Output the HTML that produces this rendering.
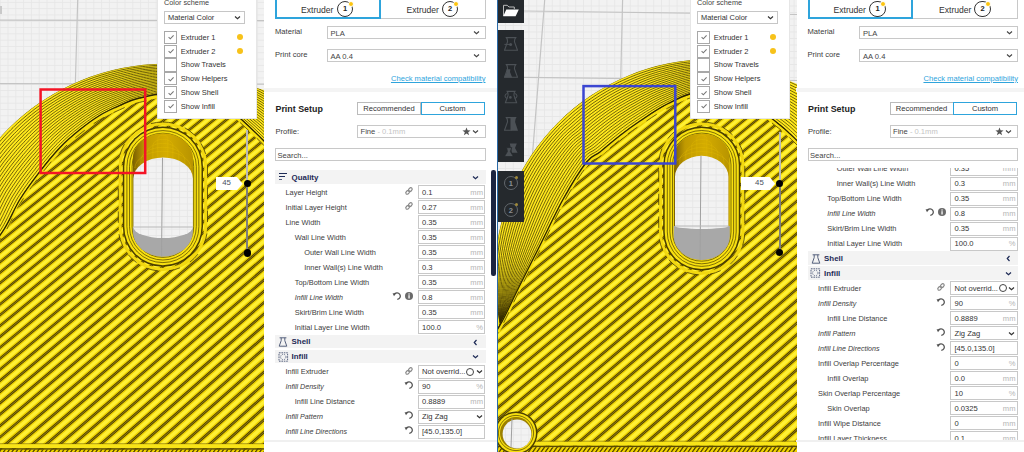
<!DOCTYPE html>
<html><head><meta charset="utf-8"><style>
html,body{margin:0;padding:0;width:1024px;height:452px;overflow:hidden;background:#f3f3f3;}
body{position:relative;font-family:"Liberation Sans",sans-serif;}
.r{position:absolute;}
.t{position:absolute;white-space:nowrap;}
</style></head><body>
<svg class="r" style="left:0px;top:0" width="264" height="452" viewBox="0 0 264 452"><defs><pattern id="gL" patternUnits="userSpaceOnUse" x="77.7" y="20.8" width="7.8" height="6.3"><rect width="7.8" height="6.3" fill="#f2f2f2"/><rect width="0.8" height="6.3" fill="#e6e6e6"/><rect width="7.8" height="0.8" fill="#e6e6e6"/></pattern><linearGradient id="ygL" x1="0" y1="0" x2="0" y2="1"><stop offset="0" stop-color="#8c7400"/><stop offset="0.05" stop-color="#3e3300"/><stop offset="0.11" stop-color="#807010"/><stop offset="0.17" stop-color="#3e3300"/><stop offset="0.24" stop-color="#8c7400"/><stop offset="0.32" stop-color="#ecd000"/><stop offset="0.52" stop-color="#fff230"/><stop offset="0.75" stop-color="#ffec18"/><stop offset="0.92" stop-color="#e4c800"/><stop offset="1" stop-color="#8c7400"/></linearGradient><pattern id="stL" patternUnits="userSpaceOnUse" width="20" height="8.4" patternTransform="translate(0 0) rotate(-43)"><rect width="20" height="8.4" fill="url(#ygL)"/></pattern><linearGradient id="wallL" x1="0" y1="0" x2="1" y2="0"><stop offset="0" stop-color="#7a6000"/><stop offset="0.2" stop-color="#c09a00"/><stop offset="0.55" stop-color="#d4ac00"/><stop offset="1" stop-color="#b89400"/></linearGradient><clipPath id="obj0L"><circle cx="165.3" cy="286.2" r="222.4"/><rect x="-50" y="286.2" width="364" height="175.8"/></clipPath><clipPath id="objL" clip-path="url(#obj0L)"><polygon points="-100,-12.1 364,118.0 364,500 -100,500"/></clipPath><clipPath id="infL"><path d="M-20.00,262.00 C-16.00,256.57 -2.65,239.82 4.00,229.40 C10.65,218.98 13.93,209.13 19.90,199.50 C25.87,189.87 33.15,180.23 39.80,171.60 C46.45,162.97 53.15,154.67 59.80,147.70 C66.45,140.73 73.07,135.17 79.70,129.80 C86.33,124.43 92.97,119.55 99.60,115.50 C106.23,111.45 112.87,108.42 119.50,105.50 C126.13,102.58 130.15,100.25 139.40,98.00 C148.65,95.75 162.40,92.33 175.00,92.00 C187.60,91.67 204.00,91.50 215.00,96.00 C226.00,100.50 233.00,111.67 241.00,119.00 C249.00,126.33 253.17,130.17 263.00,140.00 C272.83,149.83 293.83,171.67 300.00,178.00 L364,178 L364,500 L-100,500 L-100,262 Z"/></clipPath><filter id="blL" x="-5%" y="-5%" width="110%" height="110%"><feGaussianBlur stdDeviation="0.75"/></filter></defs><rect x="0" y="0" width="264" height="452" fill="url(#gL)"/><line x1="77.7" y1="0" x2="65" y2="452" stroke="#c4c4c4" stroke-width="1.2"/><line x1="0" y1="20.2" x2="264" y2="20.6" stroke="#c4c4c4" stroke-width="1.2"/><line x1="0" y1="83.6" x2="264" y2="84.2" stroke="#c4c4c4" stroke-width="1.2"/><g clip-path="url(#objL)"><rect x="-5" y="0" width="274" height="452" fill="#ffe81c"/><path d="M-55.2,257.4 L-54.8,254.2 L-54.3,250.9 L-53.7,247.7 L-53.2,244.5 L-52.5,241.3 L-51.8,238.1 L-51.1,234.9 L-50.3,231.7 L-49.5,228.6 L-48.6,225.4 L-47.7,222.3 L-46.8,219.2 L-45.8,216.1 L-44.7,213.0 L-43.6,209.9 L-42.5,206.8 L-41.3,203.8 L-40.0,200.8 L-38.8,197.8 L-37.4,194.8 L-36.1,191.8 L-34.7,188.9 L-33.2,185.9 L-31.7,183.0 L-30.2,180.2 L-28.6,177.3 L-27.0,174.5 L-25.3,171.7 L-23.6,168.9 L-21.9,166.1 L-20.1,163.4 L-18.3,160.7 L-16.4,158.0 L-14.5,155.3 L-12.6,152.7 L-10.6,150.1 L-8.6,147.5 L-6.5,145.0 L-4.4,142.5 L-2.3,140.0 L-0.1,137.6 L2.1,135.1 L4.3,132.8 L6.6,130.4 L8.9,128.1 L11.2,125.8 L13.6,123.6 L16.0,121.4 L18.4,119.2 L20.9,117.1 L23.4,115.0 L25.9,112.9 L28.5,110.9 L31.1,108.9 L33.7,106.9 L36.3,105.0 L39.0,103.1 L41.7,101.3 L44.4,99.5 L47.2,97.7 L50.0,96.0 L52.8,94.4 L55.6,92.7 L58.5,91.1 L61.3,89.6 L64.2,88.1 L67.2,86.6 L70.1,85.2 L73.1,83.8 L76.0,82.5 L79.0,81.2 L82.1,80.0 L85.1,78.8 L88.2,77.6 L91.2,76.5 L94.3,75.4 L97.4,74.4 L100.5,73.4 L103.7,72.5 L106.8,71.6 L110.0,70.8 L113.1,70.0 L116.3,69.3 L119.5,68.6 L122.7,67.9 L125.9,67.3 L129.1,66.8 L132.4,66.3 L135.6,65.8 L138.8,65.4 L142.1,65.0 L145.3,64.7 L148.6,64.4 L151.9,64.2 L155.1,64.0 L158.4,63.9 L161.6,63.8 L164.9,63.8 L168.2,63.8 L171.4,63.9 L174.7,64.0 L178.0,64.2 L181.2,64.4 L184.5,64.6 L187.7,64.9 L191.0,65.3 L194.2,65.7 L197.5,66.1 L200.7,66.6 L203.9,67.2 L207.1,67.8 L210.3,68.4 L213.5,69.1 L216.7,69.8 L219.9,70.6 L223.0,71.4 L226.2,72.3 L229.3,73.2 L232.4,74.2 L235.5,75.2 L238.6,76.2 L241.7,77.3 L244.8,78.5 L247.8,79.7 L250.8,80.9 L253.8,82.2 L256.8,83.5 L259.8,84.9 L262.7,86.3 L265.7,87.7 L268.6,89.2 L271.4,90.8 L274.3,92.3 L277.1,94.0 L280.0,95.6 L282.7,97.3 L285.5,99.1 L288.2,100.9 L290.9,102.7 L293.6,104.6 L296.3,106.5 L298.9,108.4 L301.5,110.4 L304.1,112.4 L306.6,114.5 L309.1,116.6 L311.6,118.7 L314.0,120.8 L316.4,123.1 L318.8,125.3 L321.2,127.6 L323.5,129.9 L325.8,132.2 L328.0,134.6 L330.2,137.0 L332.4,139.4 L334.5,141.9 L336.6,144.4 L338.7,146.9" fill="none" stroke="#332a00" stroke-width="0.7"/><path d="M-53.5,257.6 L-52.9,254.4 L-52.4,251.2 L-51.8,248.1 L-51.1,244.9 L-50.4,241.7 L-49.7,238.6 L-48.9,235.4 L-48.1,232.3 L-47.2,229.2 L-46.3,226.1 L-45.4,223.0 L-44.4,219.9 L-43.4,216.9 L-42.3,213.8 L-41.2,210.8 L-40.0,207.8 L-38.8,204.8 L-37.6,201.8 L-36.3,198.8 L-35.0,195.9 L-33.7,193.0 L-32.3,190.0 L-30.8,187.1 L-29.4,184.3 L-27.9,181.4 L-26.3,178.6 L-24.7,175.8 L-23.1,173.0 L-21.4,170.3 L-19.6,167.5 L-17.9,164.8 L-16.1,162.2 L-14.2,159.5 L-12.4,156.9 L-10.4,154.3 L-8.5,151.7 L-6.5,149.2 L-4.5,146.7 L-2.4,144.2 L-0.3,141.7 L1.8,139.3 L4.0,136.9 L6.2,134.6 L8.4,132.2 L10.7,129.9 L13.0,127.7 L15.3,125.4 L17.7,123.2 L20.1,121.1 L22.5,119.0 L25.0,116.9 L27.5,114.8 L30.0,112.8 L32.5,110.8 L35.1,108.8 L37.7,106.9 L40.4,105.1 L43.0,103.2 L45.7,101.4 L48.4,99.7 L51.2,98.0 L53.9,96.3 L56.7,94.7 L59.5,93.1 L62.4,91.5 L65.2,90.0 L68.1,88.5 L71.0,87.1 L73.9,85.7 L76.9,84.4 L79.8,83.1 L82.8,81.8 L85.8,80.6 L88.8,79.4 L91.9,78.3 L94.9,77.2 L98.0,76.2 L101.1,75.2 L104.2,74.3 L107.3,73.4 L110.4,72.5 L113.6,71.7 L116.7,71.0 L119.9,70.3 L123.0,69.6 L126.2,69.0 L129.4,68.4 L132.6,67.9 L135.8,67.4 L139.0,67.0 L142.3,66.6 L145.5,66.3 L148.7,66.0 L151.9,65.7 L155.2,65.5 L158.4,65.4 L161.7,65.3 L164.9,65.3 L168.2,65.3 L171.4,65.3 L174.6,65.4 L177.9,65.6 L181.1,65.7 L184.4,66.0 L187.6,66.3 L190.8,66.6 L194.1,67.0 L197.3,67.4 L200.5,67.9 L203.7,68.4 L206.9,69.0 L210.1,69.6 L213.2,70.3 L216.4,71.1 L219.6,71.8 L222.7,72.7 L225.8,73.6 L228.9,74.5 L232.0,75.5 L235.1,76.6 L238.1,77.7 L241.1,78.9 L244.2,80.1 L247.2,81.3 L250.1,82.6 L253.1,83.9 L256.0,85.3 L258.9,86.7 L261.9,88.1 L264.7,89.6 L267.6,91.1 L270.4,92.6 L273.2,94.2 L276.0,95.9 L278.8,97.5 L281.5,99.3 L284.3,101.0 L287.0,102.8 L289.6,104.6 L292.3,106.5 L294.9,108.4 L297.5,110.3 L300.0,112.3 L302.5,114.3 L305.0,116.4 L307.5,118.4 L309.9,120.6 L312.4,122.7 L314.7,124.9 L317.1,127.1 L319.4,129.4 L321.7,131.6 L323.9,133.9 L326.2,136.3 L328.3,138.7 L330.5,141.1 L332.6,143.5 L334.7,146.0 L336.8,148.5" fill="none" stroke="#332a00" stroke-width="0.7"/><path d="M-51.7,257.9 L-51.1,254.7 L-50.5,251.5 L-49.8,248.4 L-49.1,245.3 L-48.3,242.2 L-47.6,239.1 L-46.7,236.0 L-45.9,232.9 L-45.0,229.8 L-44.0,226.8 L-43.0,223.7 L-42.0,220.7 L-41.0,217.7 L-39.9,214.7 L-38.7,211.7 L-37.6,208.7 L-36.4,205.8 L-35.2,202.8 L-33.9,199.9 L-32.6,197.0 L-31.3,194.1 L-29.9,191.2 L-28.5,188.3 L-27.0,185.5 L-25.5,182.7 L-24.0,179.9 L-22.4,177.1 L-20.8,174.4 L-19.1,171.7 L-17.4,169.0 L-15.7,166.3 L-13.9,163.7 L-12.1,161.0 L-10.2,158.5 L-8.3,155.9 L-6.4,153.4 L-4.4,150.8 L-2.4,148.4 L-0.4,145.9 L1.7,143.5 L3.8,141.1 L5.9,138.7 L8.1,136.4 L10.3,134.1 L12.5,131.8 L14.8,129.5 L17.1,127.3 L19.4,125.1 L21.7,123.0 L24.1,120.8 L26.6,118.8 L29.0,116.7 L31.5,114.7 L34.0,112.7 L36.5,110.8 L39.1,108.9 L41.7,107.0 L44.3,105.2 L47.0,103.4 L49.6,101.6 L52.3,99.9 L55.1,98.2 L57.8,96.6 L60.6,95.0 L63.4,93.4 L66.2,91.9 L69.0,90.4 L71.9,89.0 L74.8,87.6 L77.7,86.3 L80.6,84.9 L83.6,83.7 L86.5,82.4 L89.5,81.3 L92.5,80.1 L95.5,79.0 L98.6,78.0 L101.6,77.0 L104.7,76.1 L107.8,75.2 L110.9,74.3 L114.0,73.5 L117.1,72.7 L120.2,71.9 L123.4,71.2 L126.5,70.6 L129.7,70.0 L132.9,69.5 L136.0,69.0 L139.2,68.6 L142.4,68.2 L145.6,67.8 L148.8,67.5 L152.0,67.3 L155.3,67.0 L158.5,66.9 L161.7,66.8 L164.9,66.7 L168.1,66.7 L171.4,66.7 L174.6,66.8 L177.8,66.9 L181.0,67.1 L184.2,67.4 L187.5,67.6 L190.7,67.9 L193.9,68.3 L197.1,68.7 L200.3,69.2 L203.5,69.7 L206.6,70.3 L209.8,70.9 L213.0,71.6 L216.1,72.3 L219.2,73.1 L222.4,73.9 L225.4,74.9 L228.5,75.8 L231.6,76.9 L234.6,78.0 L237.6,79.2 L240.6,80.4 L243.6,81.7 L246.5,83.0 L249.4,84.3 L252.3,85.7 L255.2,87.0 L258.1,88.5 L261.0,89.9 L263.8,91.4 L266.6,92.9 L269.4,94.5 L272.2,96.1 L274.9,97.8 L277.6,99.5 L280.3,101.2 L283.0,102.9 L285.7,104.7 L288.3,106.6 L290.9,108.4 L293.5,110.3 L296.0,112.3 L298.5,114.2 L301.0,116.2 L303.5,118.3 L305.9,120.3 L308.3,122.4 L310.7,124.6 L313.0,126.7 L315.4,128.9 L317.6,131.1 L319.9,133.4 L322.1,135.7 L324.3,138.0 L326.5,140.4 L328.6,142.7 L330.7,145.1 L332.8,147.6 L334.8,150.0" fill="none" stroke="#332a00" stroke-width="0.7"/><path d="M-49.9,258.1 L-49.3,255.0 L-48.6,251.9 L-47.8,248.8 L-47.1,245.7 L-46.3,242.6 L-45.4,239.5 L-44.5,236.5 L-43.6,233.4 L-42.7,230.4 L-41.7,227.4 L-40.7,224.4 L-39.6,221.4 L-38.6,218.5 L-37.4,215.5 L-36.3,212.6 L-35.1,209.6 L-33.9,206.7 L-32.7,203.8 L-31.5,200.9 L-30.2,198.1 L-28.9,195.2 L-27.5,192.4 L-26.1,189.5 L-24.7,186.7 L-23.2,184.0 L-21.7,181.2 L-20.1,178.5 L-18.5,175.8 L-16.9,173.1 L-15.2,170.4 L-13.4,167.8 L-11.7,165.2 L-9.9,162.6 L-8.1,160.0 L-6.2,157.5 L-4.3,155.0 L-2.3,152.5 L-0.4,150.0 L1.6,147.6 L3.7,145.2 L5.7,142.8 L7.8,140.5 L10.0,138.2 L12.1,135.9 L14.3,133.6 L16.5,131.4 L18.8,129.2 L21.1,127.0 L23.4,124.9 L25.7,122.7 L28.1,120.7 L30.5,118.6 L33.0,116.6 L35.4,114.6 L37.9,112.7 L40.5,110.8 L43.0,108.9 L45.6,107.1 L48.2,105.3 L50.9,103.6 L53.5,101.9 L56.2,100.2 L58.9,98.5 L61.6,96.9 L64.4,95.4 L67.2,93.8 L70.0,92.4 L72.8,90.9 L75.7,89.5 L78.5,88.1 L81.4,86.8 L84.3,85.5 L87.2,84.3 L90.2,83.1 L93.2,82.0 L96.1,80.9 L99.2,79.8 L102.2,78.8 L105.2,77.8 L108.3,76.9 L111.3,76.0 L114.4,75.2 L117.5,74.4 L120.6,73.6 L123.7,72.9 L126.8,72.2 L130.0,71.6 L133.1,71.1 L136.3,70.6 L139.4,70.2 L142.6,69.7 L145.8,69.4 L148.9,69.1 L152.1,68.8 L155.3,68.6 L158.5,68.4 L161.7,68.2 L164.9,68.2 L168.1,68.1 L171.3,68.1 L174.5,68.2 L177.7,68.3 L180.9,68.5 L184.1,68.7 L187.3,69.0 L190.5,69.3 L193.7,69.6 L196.9,70.0 L200.1,70.5 L203.2,71.0 L206.4,71.5 L209.6,72.1 L212.7,72.8 L215.8,73.5 L218.9,74.3 L222.0,75.2 L225.1,76.1 L228.1,77.2 L231.1,78.3 L234.1,79.4 L237.1,80.6 L240.0,81.9 L242.9,83.2 L245.8,84.6 L248.7,86.0 L251.6,87.4 L254.4,88.8 L257.3,90.3 L260.1,91.7 L262.9,93.3 L265.6,94.8 L268.4,96.4 L271.1,98.0 L273.8,99.7 L276.5,101.4 L279.1,103.1 L281.8,104.9 L284.4,106.7 L287.0,108.5 L289.5,110.4 L292.0,112.3 L294.6,114.2 L297.0,116.2 L299.5,118.1 L301.9,120.2 L304.3,122.2 L306.7,124.3 L309.0,126.4 L311.3,128.6 L313.6,130.7 L315.9,132.9 L318.1,135.2 L320.3,137.4 L322.5,139.7 L324.6,142.0 L326.7,144.4 L328.8,146.8 L330.9,149.2 L332.9,151.6" fill="none" stroke="#332a00" stroke-width="0.7"/><path d="M-48.2,258.3 L-47.4,255.2 L-46.7,252.2 L-45.9,249.1 L-45.0,246.1 L-44.2,243.0 L-43.3,240.0 L-42.3,237.0 L-41.4,234.0 L-40.4,231.0 L-39.4,228.1 L-38.3,225.1 L-37.3,222.2 L-36.2,219.3 L-35.0,216.4 L-33.9,213.5 L-32.7,210.6 L-31.5,207.7 L-30.3,204.8 L-29.0,202.0 L-27.8,199.2 L-26.4,196.3 L-25.1,193.5 L-23.7,190.7 L-22.3,188.0 L-20.9,185.2 L-19.4,182.5 L-17.8,179.8 L-16.2,177.1 L-14.6,174.5 L-12.9,171.9 L-11.2,169.2 L-9.5,166.7 L-7.7,164.1 L-5.9,161.6 L-4.1,159.1 L-2.2,156.6 L-0.3,154.2 L1.7,151.7 L3.6,149.3 L5.6,146.9 L7.7,144.6 L9.8,142.3 L11.8,140.0 L14.0,137.7 L16.1,135.4 L18.3,133.2 L20.5,131.0 L22.8,128.9 L25.1,126.7 L27.4,124.6 L29.7,122.6 L32.1,120.5 L34.5,118.5 L36.9,116.6 L39.4,114.6 L41.8,112.7 L44.4,110.9 L46.9,109.0 L49.5,107.3 L52.1,105.5 L54.7,103.8 L57.3,102.1 L60.0,100.5 L62.7,98.9 L65.4,97.3 L68.2,95.8 L70.9,94.3 L73.7,92.8 L76.5,91.4 L79.3,90.0 L82.2,88.7 L85.1,87.4 L88.0,86.1 L90.9,84.9 L93.8,83.8 L96.8,82.7 L99.7,81.6 L102.7,80.6 L105.7,79.6 L108.7,78.7 L111.8,77.8 L114.8,76.9 L117.9,76.1 L120.9,75.3 L124.0,74.6 L127.1,73.9 L130.2,73.3 L133.3,72.7 L136.5,72.2 L139.6,71.7 L142.8,71.3 L145.9,70.9 L149.1,70.6 L152.2,70.3 L155.4,70.1 L158.6,69.9 L161.7,69.7 L164.9,69.6 L168.1,69.6 L171.3,69.6 L174.5,69.6 L177.7,69.7 L180.8,69.9 L184.0,70.1 L187.2,70.3 L190.4,70.6 L193.5,70.9 L196.7,71.3 L199.9,71.8 L203.0,72.2 L206.2,72.8 L209.3,73.4 L212.4,74.0 L215.5,74.8 L218.6,75.6 L221.7,76.5 L224.7,77.4 L227.7,78.5 L230.7,79.6 L233.7,80.8 L236.6,82.1 L239.5,83.5 L242.3,84.8 L245.2,86.2 L248.0,87.7 L250.8,89.1 L253.6,90.6 L256.4,92.1 L259.2,93.6 L261.9,95.1 L264.7,96.7 L267.4,98.3 L270.0,99.9 L272.7,101.6 L275.3,103.3 L278.0,105.0 L280.5,106.8 L283.1,108.6 L285.6,110.4 L288.2,112.3 L290.6,114.2 L293.1,116.1 L295.5,118.1 L298.0,120.1 L300.3,122.1 L302.7,124.1 L305.0,126.2 L307.3,128.3 L309.6,130.4 L311.9,132.6 L314.1,134.7 L316.3,136.9 L318.5,139.2 L320.6,141.4 L322.8,143.7 L324.8,146.0 L326.9,148.4 L328.9,150.7 L331.0,153.1" fill="none" stroke="#332a00" stroke-width="0.7"/><path d="M-46.4,258.5 L-45.6,255.5 L-44.8,252.5 L-43.9,249.4 L-43.0,246.4 L-42.1,243.5 L-41.1,240.5 L-40.2,237.5 L-39.1,234.6 L-38.1,231.6 L-37.1,228.7 L-36.0,225.8 L-34.9,222.9 L-33.7,220.1 L-32.6,217.2 L-31.4,214.4 L-30.3,211.5 L-29.1,208.7 L-27.8,205.9 L-26.6,203.0 L-25.3,200.2 L-24.0,197.5 L-22.7,194.7 L-21.4,191.9 L-20.0,189.2 L-18.5,186.5 L-17.0,183.8 L-15.5,181.1 L-13.9,178.5 L-12.3,175.9 L-10.7,173.3 L-9.0,170.7 L-7.3,168.2 L-5.5,165.7 L-3.8,163.2 L-1.9,160.7 L-0.1,158.2 L1.8,155.8 L3.7,153.4 L5.7,151.0 L7.6,148.7 L9.6,146.3 L11.7,144.0 L13.7,141.8 L15.8,139.5 L17.9,137.3 L20.1,135.1 L22.3,132.9 L24.5,130.7 L26.7,128.6 L29.0,126.5 L31.3,124.5 L33.6,122.4 L36.0,120.4 L38.4,118.5 L40.8,116.6 L43.2,114.7 L45.7,112.8 L48.2,111.0 L50.7,109.2 L53.3,107.5 L55.9,105.7 L58.5,104.1 L61.1,102.4 L63.8,100.8 L66.4,99.2 L69.1,97.7 L71.9,96.2 L74.6,94.7 L77.4,93.3 L80.2,91.9 L83.0,90.6 L85.8,89.2 L88.7,88.0 L91.5,86.8 L94.4,85.6 L97.4,84.5 L100.3,83.4 L103.3,82.4 L106.2,81.4 L109.2,80.4 L112.2,79.5 L115.2,78.7 L118.3,77.8 L121.3,77.0 L124.3,76.2 L127.4,75.5 L130.5,74.9 L133.6,74.3 L136.7,73.8 L139.8,73.3 L142.9,72.9 L146.0,72.5 L149.2,72.1 L152.3,71.8 L155.5,71.6 L158.6,71.3 L161.8,71.2 L164.9,71.1 L168.1,71.0 L171.2,71.0 L174.4,71.0 L177.6,71.1 L180.7,71.3 L183.9,71.4 L187.1,71.7 L190.2,71.9 L193.4,72.3 L196.5,72.6 L199.7,73.0 L202.8,73.5 L205.9,74.0 L209.0,74.6 L212.1,75.3 L215.2,76.0 L218.3,76.8 L221.3,77.7 L224.4,78.7 L227.3,79.8 L230.3,81.0 L233.2,82.3 L236.1,83.6 L238.9,85.0 L241.7,86.4 L244.5,87.9 L247.3,89.4 L250.1,90.9 L252.8,92.3 L255.6,93.8 L258.3,95.4 L261.0,96.9 L263.7,98.5 L266.3,100.2 L269.0,101.8 L271.6,103.5 L274.2,105.2 L276.8,107.0 L279.3,108.7 L281.8,110.5 L284.3,112.4 L286.8,114.2 L289.2,116.1 L291.7,118.0 L294.1,120.0 L296.4,122.0 L298.8,124.0 L301.1,126.0 L303.4,128.1 L305.7,130.1 L307.9,132.2 L310.2,134.4 L312.4,136.5 L314.5,138.7 L316.7,140.9 L318.8,143.2 L320.9,145.4 L323.0,147.7 L325.0,150.0 L327.0,152.3 L329.0,154.7" fill="none" stroke="#332a00" stroke-width="0.7"/><path d="M-44.7,258.8 L-43.8,255.8 L-42.9,252.8 L-41.9,249.8 L-41.0,246.8 L-40.0,243.9 L-39.0,241.0 L-38.0,238.0 L-36.9,235.1 L-35.8,232.3 L-34.7,229.4 L-33.6,226.5 L-32.5,223.7 L-31.3,220.9 L-30.2,218.0 L-29.0,215.2 L-27.8,212.4 L-26.6,209.7 L-25.4,206.9 L-24.2,204.1 L-22.9,201.3 L-21.6,198.6 L-20.3,195.9 L-19.0,193.1 L-17.6,190.4 L-16.2,187.8 L-14.7,185.1 L-13.2,182.5 L-11.7,179.9 L-10.1,177.3 L-8.5,174.7 L-6.8,172.2 L-5.1,169.7 L-3.4,167.2 L-1.6,164.7 L0.2,162.3 L2.0,159.9 L3.9,157.5 L5.8,155.1 L7.7,152.7 L9.6,150.4 L11.6,148.1 L13.6,145.8 L15.6,143.6 L17.7,141.3 L19.8,139.1 L21.9,136.9 L24.0,134.8 L26.2,132.6 L28.4,130.5 L30.6,128.4 L32.9,126.4 L35.1,124.3 L37.5,122.4 L39.8,120.4 L42.2,118.5 L44.6,116.6 L47.0,114.7 L49.5,112.9 L52.0,111.1 L54.5,109.4 L57.0,107.7 L59.6,106.0 L62.2,104.4 L64.8,102.7 L67.5,101.2 L70.1,99.6 L72.8,98.1 L75.5,96.6 L78.2,95.2 L81.0,93.8 L83.8,92.4 L86.6,91.1 L89.4,89.8 L92.2,88.6 L95.1,87.4 L98.0,86.3 L100.9,85.2 L103.8,84.2 L106.7,83.2 L109.7,82.2 L112.7,81.3 L115.6,80.4 L118.6,79.5 L121.6,78.7 L124.7,77.9 L127.7,77.2 L130.8,76.5 L133.8,75.9 L136.9,75.4 L140.0,74.9 L143.1,74.5 L146.2,74.1 L149.3,73.7 L152.4,73.4 L155.5,73.1 L158.7,72.8 L161.8,72.6 L164.9,72.5 L168.1,72.4 L171.2,72.4 L174.3,72.4 L177.5,72.5 L180.6,72.6 L183.8,72.8 L186.9,73.0 L190.1,73.3 L193.2,73.6 L196.3,73.9 L199.4,74.3 L202.6,74.8 L205.7,75.3 L208.8,75.9 L211.9,76.5 L214.9,77.2 L218.0,78.1 L221.0,79.0 L224.0,80.0 L226.9,81.1 L229.8,82.4 L232.7,83.7 L235.5,85.1 L238.4,86.5 L241.1,88.0 L243.9,89.5 L246.6,91.0 L249.3,92.6 L252.0,94.1 L254.7,95.6 L257.4,97.2 L260.1,98.8 L262.7,100.4 L265.3,102.0 L267.9,103.7 L270.5,105.4 L273.0,107.1 L275.6,108.9 L278.1,110.7 L280.5,112.5 L283.0,114.3 L285.4,116.2 L287.8,118.1 L290.2,120.0 L292.6,121.9 L294.9,123.9 L297.2,125.9 L299.5,127.9 L301.8,129.9 L304.0,132.0 L306.2,134.1 L308.4,136.2 L310.6,138.3 L312.7,140.5 L314.9,142.7 L317.0,144.9 L319.0,147.1 L321.1,149.4 L323.1,151.6 L325.1,153.9 L327.1,156.2" fill="none" stroke="#332a00" stroke-width="0.7"/><path d="M-42.9,259.0 L-41.9,256.0 L-41.0,253.1 L-40.0,250.1 L-38.9,247.2 L-37.9,244.3 L-36.8,241.4 L-35.8,238.6 L-34.7,235.7 L-33.6,232.9 L-32.4,230.0 L-31.3,227.2 L-30.1,224.4 L-28.9,221.7 L-27.8,218.9 L-26.6,216.1 L-25.4,213.4 L-24.2,210.6 L-23.0,207.9 L-21.7,205.2 L-20.5,202.4 L-19.2,199.7 L-17.9,197.0 L-16.6,194.3 L-15.2,191.7 L-13.9,189.0 L-12.4,186.4 L-10.9,183.8 L-9.4,181.2 L-7.8,178.7 L-6.2,176.2 L-4.6,173.7 L-2.9,171.2 L-1.2,168.7 L0.6,166.3 L2.3,163.9 L4.1,161.5 L6.0,159.1 L7.8,156.8 L9.7,154.4 L11.6,152.1 L13.5,149.9 L15.5,147.6 L17.5,145.4 L19.5,143.1 L21.6,140.9 L23.6,138.8 L25.7,136.6 L27.9,134.5 L30.0,132.4 L32.2,130.3 L34.4,128.3 L36.7,126.3 L39.0,124.3 L41.3,122.3 L43.6,120.4 L46.0,118.5 L48.4,116.7 L50.8,114.9 L53.2,113.1 L55.7,111.3 L58.2,109.6 L60.8,107.9 L63.3,106.3 L65.9,104.7 L68.5,103.1 L71.1,101.5 L73.7,100.0 L76.4,98.5 L79.1,97.1 L81.8,95.7 L84.6,94.3 L87.3,93.0 L90.1,91.7 L92.9,90.4 L95.7,89.2 L98.6,88.1 L101.5,87.0 L104.3,85.9 L107.3,84.9 L110.2,84.0 L113.1,83.0 L116.1,82.1 L119.0,81.2 L122.0,80.4 L125.0,79.6 L128.0,78.8 L131.0,78.2 L134.1,77.6 L137.1,77.0 L140.2,76.5 L143.2,76.1 L146.3,75.6 L149.4,75.2 L152.5,74.9 L155.6,74.6 L158.7,74.3 L161.8,74.1 L164.9,74.0 L168.0,73.9 L171.2,73.8 L174.3,73.8 L177.4,73.9 L180.5,74.0 L183.7,74.2 L186.8,74.4 L189.9,74.6 L193.0,74.9 L196.1,75.2 L199.2,75.6 L202.3,76.0 L205.4,76.5 L208.5,77.1 L211.6,77.8 L214.6,78.5 L217.7,79.3 L220.7,80.2 L223.6,81.3 L226.5,82.4 L229.4,83.7 L232.2,85.1 L235.0,86.5 L237.8,88.0 L240.5,89.6 L243.2,91.2 L245.9,92.7 L248.6,94.3 L251.2,95.9 L253.9,97.4 L256.5,99.0 L259.1,100.6 L261.7,102.3 L264.3,103.9 L266.9,105.6 L269.4,107.3 L271.9,109.0 L274.4,110.8 L276.8,112.6 L279.2,114.4 L281.7,116.2 L284.0,118.1 L286.4,120.0 L288.8,121.9 L291.1,123.8 L293.4,125.8 L295.6,127.8 L297.9,129.8 L300.1,131.8 L302.3,133.8 L304.5,135.9 L306.7,138.0 L308.8,140.1 L310.9,142.3 L313.0,144.4 L315.1,146.6 L317.2,148.8 L319.2,151.0 L321.2,153.3 L323.2,155.5 L325.1,157.8" fill="none" stroke="#332a00" stroke-width="0.7"/><path d="M-41.1,259.2 L-40.1,256.3 L-39.1,253.4 L-38.0,250.5 L-36.9,247.6 L-35.8,244.7 L-34.7,241.9 L-33.6,239.1 L-32.4,236.3 L-31.3,233.5 L-30.1,230.7 L-28.9,227.9 L-27.7,225.2 L-26.5,222.5 L-25.3,219.7 L-24.1,217.0 L-22.9,214.3 L-21.7,211.6 L-20.5,208.9 L-19.3,206.2 L-18.1,203.5 L-16.8,200.9 L-15.5,198.2 L-14.2,195.5 L-12.9,192.9 L-11.5,190.3 L-10.1,187.7 L-8.6,185.1 L-7.1,182.6 L-5.6,180.1 L-4.0,177.6 L-2.4,175.1 L-0.7,172.7 L1.0,170.3 L2.7,167.9 L4.4,165.5 L6.2,163.1 L8.0,160.8 L9.9,158.5 L11.7,156.2 L13.6,153.9 L15.5,151.6 L17.4,149.4 L19.4,147.1 L21.4,144.9 L23.4,142.8 L25.4,140.6 L27.5,138.5 L29.6,136.4 L31.7,134.3 L33.8,132.2 L36.0,130.2 L38.2,128.2 L40.4,126.2 L42.7,124.2 L45.0,122.3 L47.3,120.5 L49.7,118.6 L52.1,116.8 L54.5,115.0 L56.9,113.3 L59.4,111.6 L61.9,109.9 L64.4,108.2 L66.9,106.6 L69.5,105.0 L72.1,103.5 L74.7,101.9 L77.3,100.4 L80.0,99.0 L82.6,97.5 L85.3,96.2 L88.1,94.8 L90.8,93.5 L93.6,92.3 L96.4,91.1 L99.2,89.9 L102.0,88.8 L104.9,87.7 L107.8,86.7 L110.7,85.7 L113.6,84.8 L116.5,83.8 L119.4,82.9 L122.4,82.1 L125.3,81.2 L128.3,80.5 L131.3,79.8 L134.3,79.2 L137.3,78.6 L140.4,78.1 L143.4,77.6 L146.5,77.2 L149.5,76.8 L152.6,76.4 L155.7,76.1 L158.8,75.8 L161.8,75.6 L164.9,75.4 L168.0,75.3 L171.1,75.2 L174.2,75.2 L177.3,75.3 L180.4,75.4 L183.5,75.5 L186.6,75.7 L189.7,75.9 L192.8,76.2 L195.9,76.5 L199.0,76.9 L202.1,77.3 L205.2,77.8 L208.3,78.4 L211.3,79.0 L214.3,79.7 L217.4,80.5 L220.3,81.5 L223.3,82.6 L226.1,83.8 L229.0,85.1 L231.8,86.5 L234.5,88.0 L237.2,89.6 L239.9,91.2 L242.6,92.8 L245.2,94.4 L247.8,96.1 L250.4,97.6 L253.0,99.2 L255.6,100.8 L258.2,102.5 L260.8,104.1 L263.3,105.8 L265.8,107.5 L268.3,109.2 L270.7,111.0 L273.2,112.7 L275.6,114.5 L278.0,116.3 L280.3,118.2 L282.7,120.0 L285.0,121.9 L287.3,123.8 L289.6,125.8 L291.8,127.7 L294.1,129.7 L296.3,131.7 L298.5,133.7 L300.7,135.7 L302.8,137.8 L305.0,139.8 L307.1,141.9 L309.2,144.0 L311.2,146.2 L313.3,148.3 L315.3,150.5 L317.3,152.7 L319.3,154.9 L321.3,157.1 L323.2,159.4" fill="none" stroke="#332a00" stroke-width="0.7"/><path d="M-39.4,259.5 L-38.3,256.6 L-37.2,253.7 L-36.0,250.8 L-34.9,248.0 L-33.7,245.2 L-32.6,242.4 L-31.4,239.6 L-30.2,236.8 L-29.0,234.1 L-27.8,231.4 L-26.6,228.6 L-25.4,225.9 L-24.1,223.3 L-22.9,220.6 L-21.7,217.9 L-20.5,215.2 L-19.3,212.6 L-18.1,209.9 L-16.9,207.3 L-15.6,204.6 L-14.4,202.0 L-13.1,199.4 L-11.9,196.7 L-10.5,194.1 L-9.2,191.6 L-7.8,189.0 L-6.3,186.5 L-4.8,184.0 L-3.3,181.5 L-1.7,179.0 L-0.1,176.6 L1.5,174.2 L3.2,171.8 L4.9,169.4 L6.6,167.1 L8.3,164.7 L10.1,162.4 L11.9,160.1 L13.7,157.9 L15.6,155.6 L17.5,153.4 L19.4,151.1 L21.3,148.9 L23.2,146.8 L25.2,144.6 L27.2,142.5 L29.2,140.3 L31.3,138.2 L33.3,136.2 L35.5,134.1 L37.6,132.1 L39.8,130.1 L41.9,128.1 L44.2,126.2 L46.4,124.3 L48.7,122.4 L51.0,120.5 L53.4,118.7 L55.8,117.0 L58.2,115.2 L60.6,113.5 L63.0,111.8 L65.5,110.2 L68.0,108.6 L70.5,106.9 L73.1,105.4 L75.6,103.8 L78.2,102.3 L80.8,100.9 L83.5,99.4 L86.1,98.0 L88.8,96.7 L91.5,95.4 L94.3,94.1 L97.0,92.9 L99.8,91.7 L102.6,90.6 L105.4,89.5 L108.3,88.5 L111.1,87.5 L114.0,86.5 L116.9,85.6 L119.8,84.6 L122.7,83.7 L125.6,82.9 L128.6,82.1 L131.6,81.4 L134.5,80.8 L137.5,80.2 L140.6,79.7 L143.6,79.2 L146.6,78.7 L149.6,78.3 L152.7,77.9 L155.7,77.6 L158.8,77.3 L161.9,77.1 L164.9,76.9 L168.0,76.7 L171.1,76.6 L174.2,76.6 L177.3,76.7 L180.3,76.8 L183.4,76.9 L186.5,77.0 L189.6,77.3 L192.7,77.5 L195.8,77.8 L198.8,78.2 L201.9,78.6 L205.0,79.1 L208.0,79.6 L211.0,80.2 L214.1,81.0 L217.0,81.8 L220.0,82.7 L222.9,83.8 L225.7,85.1 L228.5,86.4 L231.3,87.9 L234.0,89.5 L236.7,91.1 L239.3,92.8 L241.9,94.4 L244.5,96.1 L247.1,97.8 L249.6,99.4 L252.2,101.0 L254.8,102.7 L257.3,104.3 L259.8,106.0 L262.3,107.7 L264.7,109.4 L267.2,111.1 L269.6,112.9 L272.0,114.7 L274.3,116.5 L276.7,118.3 L279.0,120.1 L281.3,122.0 L283.6,123.9 L285.9,125.8 L288.1,127.7 L290.3,129.6 L292.5,131.6 L294.7,133.6 L296.9,135.5 L299.0,137.6 L301.1,139.6 L303.2,141.6 L305.3,143.7 L307.4,145.8 L309.4,147.9 L311.4,150.0 L313.4,152.2 L315.4,154.3 L317.4,156.5 L319.3,158.7 L321.3,160.9" fill="none" stroke="#332a00" stroke-width="0.7"/><path d="M-37.6,259.7 L-36.5,256.8 L-35.3,254.0 L-34.1,251.2 L-32.9,248.4 L-31.6,245.6 L-30.4,242.8 L-29.2,240.1 L-28.0,237.4 L-26.7,234.7 L-25.5,232.0 L-24.2,229.3 L-23.0,226.7 L-21.7,224.1 L-20.5,221.4 L-19.3,218.8 L-18.1,216.2 L-16.8,213.6 L-15.6,210.9 L-14.4,208.3 L-13.2,205.7 L-12.0,203.1 L-10.8,200.5 L-9.5,197.9 L-8.2,195.4 L-6.8,192.8 L-5.5,190.3 L-4.0,187.8 L-2.6,185.3 L-1.0,182.9 L0.5,180.5 L2.1,178.1 L3.7,175.7 L5.3,173.3 L7.0,171.0 L8.7,168.7 L10.4,166.4 L12.2,164.1 L14.0,161.8 L15.8,159.6 L17.6,157.3 L19.4,155.1 L21.3,152.9 L23.2,150.7 L25.1,148.6 L27.0,146.4 L29.0,144.3 L31.0,142.2 L33.0,140.1 L35.0,138.0 L37.1,136.0 L39.2,134.0 L41.3,132.0 L43.4,130.0 L45.6,128.1 L47.8,126.2 L50.1,124.3 L52.4,122.5 L54.7,120.7 L57.0,118.9 L59.4,117.2 L61.8,115.5 L64.2,113.8 L66.6,112.1 L69.1,110.5 L71.5,108.9 L74.0,107.3 L76.6,105.8 L79.1,104.2 L81.7,102.8 L84.3,101.3 L86.9,99.9 L89.6,98.5 L92.2,97.2 L94.9,95.9 L97.7,94.7 L100.4,93.5 L103.2,92.4 L106.0,91.3 L108.8,90.3 L111.6,89.2 L114.5,88.3 L117.3,87.3 L120.2,86.4 L123.1,85.4 L126.0,84.6 L128.9,83.8 L131.8,83.0 L134.8,82.4 L137.8,81.8 L140.8,81.3 L143.7,80.8 L146.7,80.3 L149.8,79.9 L152.8,79.5 L155.8,79.1 L158.8,78.8 L161.9,78.5 L164.9,78.3 L168.0,78.2 L171.1,78.1 L174.1,78.0 L177.2,78.1 L180.2,78.1 L183.3,78.2 L186.4,78.4 L189.4,78.6 L192.5,78.8 L195.6,79.1 L198.6,79.4 L201.7,79.8 L204.7,80.3 L207.7,80.9 L210.8,81.5 L213.8,82.2 L216.7,83.0 L219.7,84.0 L222.5,85.1 L225.4,86.4 L228.1,87.8 L230.8,89.3 L233.5,90.9 L236.1,92.6 L238.7,94.3 L241.3,96.1 L243.8,97.8 L246.3,99.5 L248.8,101.2 L251.4,102.8 L253.9,104.5 L256.4,106.1 L258.8,107.8 L261.2,109.5 L263.7,111.3 L266.1,113.0 L268.4,114.8 L270.8,116.6 L273.1,118.4 L275.4,120.2 L277.7,122.1 L279.9,123.9 L282.2,125.8 L284.4,127.7 L286.6,129.6 L288.8,131.5 L291.0,133.5 L293.1,135.4 L295.2,137.4 L297.3,139.4 L299.4,141.4 L301.5,143.5 L303.5,145.5 L305.6,147.6 L307.6,149.6 L309.6,151.7 L311.6,153.8 L313.5,156.0 L315.5,158.1 L317.4,160.3 L319.3,162.5" fill="none" stroke="#332a00" stroke-width="0.7"/><path d="M-35.9,259.9 L-34.6,257.1 L-33.4,254.3 L-32.1,251.5 L-30.8,248.8 L-29.6,246.0 L-28.3,243.3 L-27.0,240.6 L-25.7,238.0 L-24.5,235.3 L-23.2,232.7 L-21.9,230.1 L-20.6,227.4 L-19.3,224.9 L-18.1,222.3 L-16.8,219.7 L-15.6,217.1 L-14.4,214.5 L-13.2,211.9 L-12.0,209.4 L-10.8,206.8 L-9.6,204.2 L-8.4,201.7 L-7.1,199.1 L-5.8,196.6 L-4.5,194.1 L-3.2,191.6 L-1.7,189.1 L-0.3,186.7 L1.2,184.3 L2.7,181.9 L4.3,179.5 L5.9,177.2 L7.5,174.9 L9.2,172.6 L10.8,170.3 L12.5,168.0 L14.3,165.7 L16.0,163.5 L17.8,161.3 L19.6,159.1 L21.4,156.9 L23.2,154.7 L25.1,152.5 L26.9,150.4 L28.8,148.3 L30.7,146.2 L32.7,144.1 L34.7,142.0 L36.7,139.9 L38.7,137.9 L40.7,135.9 L42.8,133.9 L44.9,131.9 L47.1,130.0 L49.3,128.1 L51.5,126.3 L53.7,124.4 L56.0,122.6 L58.3,120.8 L60.6,119.1 L62.9,117.4 L65.3,115.7 L67.7,114.1 L70.1,112.4 L72.6,110.8 L75.0,109.2 L77.5,107.7 L80.0,106.1 L82.6,104.6 L85.1,103.2 L87.7,101.8 L90.3,100.4 L92.9,99.0 L95.6,97.8 L98.3,96.5 L101.0,95.3 L103.8,94.2 L106.5,93.1 L109.3,92.0 L112.1,91.0 L114.9,90.0 L117.7,89.0 L120.6,88.1 L123.4,87.1 L126.3,86.2 L129.2,85.4 L132.1,84.7 L135.0,84.0 L138.0,83.4 L140.9,82.9 L143.9,82.4 L146.9,81.9 L149.9,81.4 L152.9,81.0 L155.9,80.6 L158.9,80.3 L161.9,80.0 L164.9,79.8 L168.0,79.6 L171.0,79.5 L174.1,79.4 L177.1,79.5 L180.1,79.5 L183.2,79.6 L186.2,79.7 L189.3,79.9 L192.3,80.1 L195.4,80.4 L198.4,80.7 L201.5,81.1 L204.5,81.6 L207.5,82.1 L210.5,82.7 L213.5,83.4 L216.4,84.3 L219.3,85.2 L222.2,86.4 L225.0,87.7 L227.7,89.2 L230.4,90.7 L233.0,92.4 L235.6,94.2 L238.1,95.9 L240.6,97.7 L243.1,99.5 L245.6,101.3 L248.0,103.0 L250.5,104.6 L253.0,106.3 L255.4,108.0 L257.8,109.7 L260.2,111.4 L262.6,113.2 L264.9,114.9 L267.3,116.7 L269.6,118.5 L271.9,120.3 L274.1,122.1 L276.4,124.0 L278.6,125.9 L280.8,127.7 L283.0,129.6 L285.1,131.5 L287.3,133.5 L289.4,135.4 L291.5,137.3 L293.6,139.3 L295.7,141.3 L297.7,143.3 L299.8,145.3 L301.8,147.3 L303.8,149.3 L305.8,151.4 L307.8,153.5 L309.7,155.5 L311.7,157.6 L313.6,159.7 L315.5,161.9 L317.4,164.0" fill="none" stroke="#332a00" stroke-width="0.7"/><path d="M-34.1,260.2 L-32.8,257.4 L-31.5,254.6 L-30.1,251.9 L-28.8,249.2 L-27.5,246.5 L-26.1,243.8 L-24.8,241.2 L-23.5,238.5 L-22.2,235.9 L-20.9,233.3 L-19.5,230.8 L-18.2,228.2 L-16.9,225.6 L-15.7,223.1 L-14.4,220.6 L-13.2,218.0 L-12.0,215.5 L-10.8,213.0 L-9.6,210.4 L-8.4,207.9 L-7.2,205.4 L-6.0,202.8 L-4.7,200.3 L-3.5,197.8 L-2.2,195.4 L-0.8,192.9 L0.5,190.5 L2.0,188.1 L3.5,185.7 L5.0,183.3 L6.5,181.0 L8.1,178.7 L9.7,176.4 L11.3,174.1 L13.0,171.9 L14.6,169.6 L16.3,167.4 L18.0,165.2 L19.8,163.0 L21.5,160.8 L23.3,158.6 L25.1,156.5 L26.9,154.3 L28.8,152.2 L30.6,150.1 L32.5,148.0 L34.4,145.9 L36.4,143.9 L38.3,141.8 L40.3,139.8 L42.3,137.8 L44.4,135.8 L46.4,133.9 L48.5,131.9 L50.7,130.0 L52.8,128.2 L55.0,126.4 L57.3,124.6 L59.5,122.8 L61.8,121.1 L64.1,119.3 L66.5,117.7 L68.8,116.0 L71.2,114.4 L73.6,112.7 L76.0,111.1 L78.5,109.6 L80.9,108.0 L83.4,106.5 L85.9,105.1 L88.5,103.6 L91.1,102.2 L93.7,100.9 L96.3,99.6 L98.9,98.3 L101.6,97.1 L104.3,96.0 L107.1,94.9 L109.8,93.8 L112.6,92.8 L115.4,91.8 L118.2,90.8 L121.0,89.8 L123.8,88.8 L126.6,87.9 L129.5,87.1 L132.4,86.3 L135.3,85.6 L138.2,85.0 L141.1,84.5 L144.1,83.9 L147.0,83.4 L150.0,83.0 L153.0,82.5 L155.9,82.1 L158.9,81.8 L161.9,81.5 L164.9,81.2 L168.0,81.0 L171.0,80.9 L174.0,80.8 L177.0,80.8 L180.0,80.9 L183.1,81.0 L186.1,81.1 L189.1,81.2 L192.2,81.4 L195.2,81.7 L198.2,82.0 L201.2,82.4 L204.2,82.8 L207.2,83.3 L210.2,84.0 L213.2,84.7 L216.1,85.5 L219.0,86.5 L221.8,87.7 L224.6,89.0 L227.3,90.5 L229.9,92.2 L232.5,93.9 L235.0,95.7 L237.5,97.5 L239.9,99.4 L242.4,101.2 L244.8,103.0 L247.2,104.7 L249.7,106.4 L252.1,108.1 L254.5,109.8 L256.9,111.6 L259.2,113.3 L261.5,115.1 L263.8,116.8 L266.1,118.6 L268.4,120.4 L270.6,122.3 L272.8,124.1 L275.0,125.9 L277.2,127.8 L279.4,129.7 L281.5,131.6 L283.6,133.5 L285.7,135.4 L287.8,137.3 L289.9,139.2 L291.9,141.2 L294.0,143.1 L296.0,145.1 L298.0,147.1 L300.0,149.1 L302.0,151.1 L304.0,153.1 L305.9,155.2 L307.8,157.2 L309.8,159.3 L311.7,161.4 L313.6,163.5 L315.5,165.6" fill="none" stroke="#332a00" stroke-width="0.7"/><path d="M-32.3,260.4 L-31.0,257.6 L-29.6,254.9 L-28.2,252.2 L-26.8,249.5 L-25.4,246.9 L-24.0,244.3 L-22.6,241.7 L-21.3,239.1 L-19.9,236.5 L-18.5,234.0 L-17.2,231.5 L-15.9,228.9 L-14.5,226.4 L-13.2,224.0 L-12.0,221.5 L-10.7,219.0 L-9.5,216.5 L-8.3,214.0 L-7.1,211.5 L-6.0,209.0 L-4.8,206.5 L-3.6,204.0 L-2.4,201.5 L-1.1,199.1 L0.2,196.6 L1.5,194.2 L2.8,191.8 L4.3,189.4 L5.7,187.1 L7.2,184.8 L8.7,182.5 L10.3,180.2 L11.9,177.9 L13.5,175.7 L15.1,173.5 L16.7,171.2 L18.4,169.0 L20.1,166.9 L21.8,164.7 L23.5,162.5 L25.3,160.4 L27.0,158.3 L28.8,156.1 L30.6,154.0 L32.5,151.9 L34.3,149.9 L36.2,147.8 L38.1,145.7 L40.0,143.7 L41.9,141.7 L43.9,139.7 L45.9,137.7 L47.9,135.8 L50.0,133.9 L52.1,132.0 L54.2,130.1 L56.4,128.3 L58.6,126.5 L60.8,124.7 L63.0,123.0 L65.3,121.3 L67.6,119.6 L69.9,117.9 L72.2,116.3 L74.6,114.7 L77.0,113.1 L79.4,111.5 L81.8,109.9 L84.3,108.4 L86.8,106.9 L89.3,105.5 L91.8,104.1 L94.4,102.7 L97.0,101.4 L99.6,100.2 L102.2,98.9 L104.9,97.8 L107.6,96.7 L110.3,95.6 L113.1,94.5 L115.8,93.5 L118.6,92.5 L121.3,91.5 L124.1,90.5 L126.9,89.6 L129.8,88.7 L132.6,87.9 L135.5,87.3 L138.4,86.6 L141.3,86.1 L144.2,85.5 L147.2,85.0 L150.1,84.5 L153.1,84.0 L156.0,83.6 L159.0,83.3 L162.0,82.9 L164.9,82.7 L167.9,82.5 L170.9,82.3 L173.9,82.2 L176.9,82.2 L179.9,82.3 L183.0,82.3 L186.0,82.4 L189.0,82.6 L192.0,82.8 L195.0,83.0 L198.0,83.3 L201.0,83.6 L204.0,84.1 L207.0,84.6 L209.9,85.2 L212.9,85.9 L215.8,86.8 L218.6,87.8 L221.4,89.0 L224.2,90.4 L226.8,91.9 L229.4,93.6 L232.0,95.4 L234.4,97.2 L236.9,99.1 L239.3,101.0 L241.7,102.9 L244.1,104.7 L246.4,106.5 L248.8,108.2 L251.2,109.9 L253.6,111.7 L255.9,113.4 L258.2,115.2 L260.5,116.9 L262.7,118.7 L265.0,120.5 L267.2,122.4 L269.4,124.2 L271.5,126.0 L273.7,127.9 L275.8,129.7 L278.0,131.6 L280.1,133.5 L282.1,135.4 L284.2,137.3 L286.3,139.2 L288.3,141.1 L290.3,143.0 L292.3,145.0 L294.3,146.9 L296.3,148.9 L298.3,150.9 L300.2,152.9 L302.1,154.9 L304.1,156.9 L306.0,158.9 L307.9,160.9 L309.8,163.0 L311.7,165.0 L313.5,167.1" fill="none" stroke="#332a00" stroke-width="0.7"/><path d="M-30.6,260.6 L-29.1,257.9 L-27.7,255.2 L-26.2,252.6 L-24.7,249.9 L-23.3,247.3 L-21.9,244.7 L-20.4,242.2 L-19.0,239.7 L-17.6,237.1 L-16.2,234.6 L-14.8,232.2 L-13.5,229.7 L-12.1,227.2 L-10.8,224.8 L-9.5,222.4 L-8.3,219.9 L-7.1,217.4 L-5.9,215.0 L-4.7,212.5 L-3.5,210.1 L-2.4,207.6 L-1.2,205.2 L0.0,202.7 L1.2,200.3 L2.5,197.9 L3.8,195.5 L5.1,193.1 L6.5,190.8 L8.0,188.5 L9.5,186.2 L11.0,183.9 L12.5,181.7 L14.0,179.5 L15.6,177.3 L17.2,175.1 L18.8,172.9 L20.5,170.7 L22.1,168.5 L23.8,166.4 L25.5,164.3 L27.2,162.2 L29.0,160.0 L30.7,157.9 L32.5,155.8 L34.3,153.8 L36.1,151.7 L37.9,149.6 L39.8,147.6 L41.6,145.6 L43.5,143.6 L45.5,141.6 L47.4,139.6 L49.4,137.7 L51.4,135.8 L53.5,133.9 L55.6,132.0 L57.7,130.2 L59.9,128.4 L62.0,126.7 L64.2,124.9 L66.5,123.2 L68.7,121.5 L71.0,119.9 L73.3,118.2 L75.6,116.6 L78.0,115.0 L80.3,113.4 L82.7,111.8 L85.1,110.3 L87.6,108.8 L90.1,107.4 L92.6,106.0 L95.1,104.6 L97.6,103.3 L100.2,102.0 L102.9,100.8 L105.5,99.6 L108.2,98.5 L110.8,97.4 L113.5,96.3 L116.3,95.3 L119.0,94.2 L121.7,93.2 L124.5,92.2 L127.3,91.2 L130.1,90.3 L132.9,89.6 L135.8,88.9 L138.6,88.2 L141.5,87.7 L144.4,87.1 L147.3,86.6 L150.2,86.0 L153.1,85.6 L156.1,85.1 L159.0,84.7 L162.0,84.4 L164.9,84.1 L167.9,83.9 L170.9,83.7 L173.9,83.6 L176.9,83.6 L179.8,83.6 L182.8,83.7 L185.8,83.8 L188.8,83.9 L191.8,84.1 L194.8,84.3 L197.8,84.6 L200.8,84.9 L203.8,85.3 L206.7,85.8 L209.7,86.4 L212.6,87.1 L215.5,88.0 L218.3,89.0 L221.1,90.2 L223.8,91.7 L226.4,93.3 L228.9,95.0 L231.4,96.8 L233.9,98.7 L236.3,100.7 L238.6,102.6 L241.0,104.6 L243.3,106.5 L245.6,108.3 L248.0,110.0 L250.3,111.8 L252.6,113.5 L254.9,115.3 L257.2,117.1 L259.4,118.8 L261.6,120.6 L263.8,122.5 L266.0,124.3 L268.1,126.1 L270.3,128.0 L272.4,129.8 L274.5,131.7 L276.5,133.5 L278.6,135.4 L280.6,137.3 L282.7,139.2 L284.7,141.1 L286.7,143.0 L288.7,144.9 L290.6,146.8 L292.6,148.8 L294.6,150.7 L296.5,152.7 L298.4,154.6 L300.3,156.6 L302.2,158.6 L304.1,160.6 L306.0,162.6 L307.9,164.6 L309.7,166.6 L311.6,168.7" fill="none" stroke="#332a00" stroke-width="0.7"/><path d="M-28.8,260.8 L-27.3,258.2 L-25.8,255.5 L-24.2,252.9 L-22.7,250.3 L-21.2,247.8 L-19.7,245.2 L-18.2,242.7 L-16.8,240.2 L-15.3,237.8 L-13.9,235.3 L-12.5,232.9 L-11.1,230.5 L-9.7,228.0 L-8.4,225.6 L-7.1,223.2 L-5.8,220.8 L-4.6,218.4 L-3.4,216.0 L-2.3,213.6 L-1.1,211.2 L0.0,208.8 L1.2,206.3 L2.4,203.9 L3.6,201.5 L4.8,199.2 L6.1,196.8 L7.4,194.5 L8.8,192.2 L10.2,189.9 L11.7,187.7 L13.2,185.4 L14.7,183.2 L16.2,181.0 L17.8,178.8 L19.3,176.7 L20.9,174.5 L22.6,172.4 L24.2,170.2 L25.8,168.1 L27.5,166.0 L29.2,163.9 L30.9,161.8 L32.6,159.7 L34.3,157.7 L36.1,155.6 L37.8,153.5 L39.6,151.5 L41.5,149.5 L43.3,147.5 L45.2,145.5 L47.0,143.5 L49.0,141.5 L50.9,139.6 L52.9,137.7 L54.9,135.8 L57.0,134.0 L59.0,132.2 L61.2,130.4 L63.3,128.6 L65.5,126.9 L67.6,125.2 L69.9,123.5 L72.1,121.8 L74.4,120.2 L76.6,118.5 L78.9,116.9 L81.3,115.3 L83.6,113.7 L86.0,112.2 L88.4,110.7 L90.8,109.2 L93.3,107.8 L95.8,106.4 L98.3,105.1 L100.9,103.8 L103.5,102.6 L106.1,101.4 L108.7,100.2 L111.4,99.1 L114.0,98.1 L116.7,97.0 L119.4,96.0 L122.1,94.9 L124.8,93.9 L127.6,92.9 L130.4,92.0 L133.2,91.2 L136.0,90.5 L138.8,89.9 L141.7,89.3 L144.6,88.7 L147.5,88.1 L150.3,87.6 L153.2,87.1 L156.2,86.6 L159.1,86.2 L162.0,85.9 L164.9,85.6 L167.9,85.3 L170.9,85.1 L173.8,85.0 L176.8,85.0 L179.7,85.0 L182.7,85.1 L185.7,85.1 L188.7,85.2 L191.6,85.4 L194.6,85.6 L197.6,85.9 L200.6,86.2 L203.5,86.6 L206.5,87.1 L209.4,87.7 L212.3,88.4 L215.2,89.2 L218.0,90.3 L220.7,91.5 L223.4,93.0 L226.0,94.6 L228.5,96.4 L230.9,98.3 L233.3,100.3 L235.7,102.3 L238.0,104.3 L240.3,106.3 L242.6,108.2 L244.8,110.0 L247.2,111.8 L249.4,113.6 L251.7,115.4 L253.9,117.1 L256.2,118.9 L258.3,120.7 L260.5,122.5 L262.7,124.4 L264.8,126.2 L266.9,128.0 L269.0,129.9 L271.1,131.7 L273.1,133.6 L275.1,135.5 L277.2,137.3 L279.2,139.2 L281.1,141.1 L283.1,143.0 L285.1,144.9 L287.0,146.8 L289.0,148.7 L290.9,150.6 L292.8,152.5 L294.7,154.5 L296.6,156.4 L298.5,158.4 L300.4,160.3 L302.3,162.3 L304.1,164.3 L306.0,166.2 L307.8,168.2 L309.7,170.2" fill="none" stroke="#332a00" stroke-width="0.7"/><path d="M-27.0,261.1 L-25.5,258.4 L-23.9,255.8 L-22.3,253.2 L-20.7,250.7 L-19.1,248.2 L-17.6,245.7 L-16.1,243.2 L-14.5,240.8 L-13.1,238.4 L-11.6,236.0 L-10.1,233.6 L-8.7,231.2 L-7.3,228.8 L-6.0,226.5 L-4.7,224.1 L-3.4,221.8 L-2.2,219.4 L-1.0,217.0 L0.2,214.6 L1.3,212.3 L2.5,209.9 L3.6,207.5 L4.8,205.1 L5.9,202.8 L7.2,200.4 L8.4,198.1 L9.7,195.8 L11.1,193.5 L12.5,191.3 L13.9,189.1 L15.4,186.9 L16.9,184.7 L18.4,182.5 L19.9,180.4 L21.5,178.2 L23.0,176.1 L24.6,174.0 L26.2,171.9 L27.9,169.8 L29.5,167.7 L31.1,165.7 L32.8,163.6 L34.5,161.5 L36.2,159.5 L37.9,157.4 L39.6,155.4 L41.4,153.4 L43.2,151.4 L45.0,149.4 L46.8,147.4 L48.6,145.4 L50.5,143.5 L52.4,141.5 L54.4,139.6 L56.3,137.8 L58.3,135.9 L60.4,134.1 L62.4,132.3 L64.5,130.6 L66.7,128.8 L68.8,127.1 L71.0,125.4 L73.2,123.8 L75.4,122.1 L77.7,120.4 L79.9,118.8 L82.2,117.2 L84.5,115.7 L86.9,114.1 L89.2,112.6 L91.6,111.1 L94.1,109.7 L96.5,108.3 L99.0,106.9 L101.5,105.6 L104.1,104.4 L106.6,103.2 L109.2,102.0 L111.9,100.9 L114.5,99.8 L117.2,98.8 L119.8,97.7 L122.5,96.6 L125.2,95.5 L127.9,94.5 L130.7,93.6 L133.4,92.8 L136.2,92.1 L139.1,91.5 L141.9,90.8 L144.7,90.2 L147.6,89.7 L150.5,89.1 L153.3,88.6 L156.2,88.1 L159.1,87.7 L162.0,87.3 L165.0,87.0 L167.9,86.8 L170.8,86.6 L173.8,86.4 L176.7,86.4 L179.6,86.4 L182.6,86.4 L185.6,86.5 L188.5,86.6 L191.5,86.7 L194.4,86.9 L197.4,87.1 L200.3,87.4 L203.3,87.8 L206.2,88.3 L209.1,88.9 L212.0,89.6 L214.8,90.5 L217.6,91.5 L220.3,92.8 L223.0,94.3 L225.5,96.0 L228.0,97.8 L230.4,99.8 L232.8,101.8 L235.1,103.9 L237.3,105.9 L239.6,108.0 L241.8,109.9 L244.1,111.8 L246.3,113.6 L248.5,115.4 L250.8,117.2 L253.0,119.0 L255.1,120.8 L257.3,122.6 L259.4,124.5 L261.5,126.3 L263.6,128.1 L265.7,130.0 L267.7,131.8 L269.7,133.7 L271.7,135.5 L273.7,137.4 L275.7,139.3 L277.7,141.1 L279.6,143.0 L281.6,144.9 L283.5,146.8 L285.4,148.7 L287.3,150.6 L289.2,152.5 L291.1,154.4 L293.0,156.3 L294.8,158.2 L296.7,160.1 L298.5,162.0 L300.4,164.0 L302.2,165.9 L304.1,167.9 L305.9,169.8 L307.7,171.8" fill="none" stroke="#332a00" stroke-width="0.7"/><path d="M-25.3,261.3 L-23.6,258.7 L-21.9,256.1 L-20.3,253.6 L-18.7,251.1 L-17.0,248.6 L-15.4,246.2 L-13.9,243.7 L-12.3,241.3 L-10.8,239.0 L-9.3,236.6 L-7.8,234.3 L-6.4,232.0 L-4.9,229.6 L-3.6,227.3 L-2.2,225.0 L-1.0,222.7 L0.3,220.4 L1.4,218.0 L2.6,215.7 L3.7,213.4 L4.9,211.0 L6.0,208.7 L7.1,206.3 L8.3,204.0 L9.5,201.7 L10.7,199.4 L12.0,197.1 L13.4,194.9 L14.8,192.7 L16.2,190.5 L17.6,188.4 L19.1,186.2 L20.6,184.1 L22.1,182.0 L23.6,179.8 L25.1,177.8 L26.7,175.7 L28.3,173.6 L29.9,171.5 L31.5,169.5 L33.1,167.4 L34.7,165.4 L36.4,163.3 L38.0,161.3 L39.7,159.3 L41.4,157.2 L43.1,155.2 L44.9,153.2 L46.6,151.2 L48.4,149.3 L50.2,147.3 L52.0,145.4 L53.9,143.4 L55.8,141.5 L57.7,139.7 L59.7,137.8 L61.7,136.0 L63.7,134.2 L65.8,132.5 L67.9,130.8 L70.0,129.1 L72.1,127.4 L74.3,125.7 L76.5,124.0 L78.7,122.4 L80.9,120.7 L83.2,119.1 L85.4,117.6 L87.7,116.0 L90.1,114.5 L92.4,113.0 L94.8,111.5 L97.2,110.1 L99.7,108.7 L102.2,107.4 L104.7,106.2 L107.2,105.0 L109.8,103.8 L112.4,102.7 L115.0,101.6 L117.6,100.5 L120.2,99.4 L122.9,98.3 L125.5,97.2 L128.2,96.2 L131.0,95.3 L133.7,94.4 L136.5,93.7 L139.3,93.1 L142.1,92.4 L144.9,91.8 L147.7,91.2 L150.6,90.7 L153.4,90.1 L156.3,89.7 L159.2,89.2 L162.1,88.8 L165.0,88.5 L167.9,88.2 L170.8,88.0 L173.7,87.8 L176.6,87.8 L179.5,87.8 L182.5,87.8 L185.4,87.8 L188.4,87.9 L191.3,88.0 L194.2,88.2 L197.2,88.4 L200.1,88.7 L203.0,89.1 L205.9,89.6 L208.8,90.2 L211.7,90.9 L214.5,91.7 L217.3,92.8 L220.0,94.1 L222.6,95.6 L225.1,97.4 L227.5,99.2 L229.9,101.2 L232.2,103.3 L234.5,105.4 L236.7,107.6 L238.9,109.6 L241.0,111.7 L243.3,113.6 L245.5,115.4 L247.7,117.2 L249.8,119.0 L252.0,120.9 L254.1,122.7 L256.2,124.5 L258.3,126.4 L260.4,128.2 L262.4,130.1 L264.4,131.9 L266.4,133.8 L268.4,135.6 L270.4,137.5 L272.3,139.3 L274.3,141.2 L276.2,143.1 L278.1,144.9 L280.0,146.8 L281.9,148.7 L283.8,150.5 L285.6,152.4 L287.5,154.3 L289.4,156.2 L291.2,158.1 L293.0,159.9 L294.9,161.8 L296.7,163.7 L298.5,165.6 L300.4,167.6 L302.2,169.5 L304.0,171.4 L305.8,173.3" fill="none" stroke="#332a00" stroke-width="0.7"/><path d="M-23.5,261.5 L-21.8,259.0 L-20.0,256.4 L-18.3,253.9 L-16.6,251.5 L-14.9,249.0 L-13.3,246.6 L-11.7,244.3 L-10.1,241.9 L-8.5,239.6 L-7.0,237.3 L-5.5,235.0 L-4.0,232.7 L-2.5,230.4 L-1.1,228.2 L0.2,225.9 L1.5,223.6 L2.7,221.3 L3.9,219.1 L5.0,216.8 L6.2,214.4 L7.3,212.1 L8.4,209.8 L9.5,207.5 L10.7,205.2 L11.8,203.0 L13.0,200.7 L14.3,198.5 L15.6,196.3 L17.0,194.1 L18.4,192.0 L19.8,189.8 L21.3,187.7 L22.7,185.6 L24.2,183.5 L25.7,181.4 L27.2,179.4 L28.8,177.3 L30.3,175.3 L31.9,173.2 L33.5,171.2 L35.1,169.2 L36.6,167.1 L38.3,165.1 L39.9,163.1 L41.5,161.1 L43.2,159.1 L44.9,157.1 L46.5,155.1 L48.3,153.1 L50.0,151.2 L51.8,149.2 L53.6,147.3 L55.4,145.4 L57.3,143.5 L59.2,141.6 L61.1,139.8 L63.0,138.0 L65.0,136.2 L67.1,134.4 L69.1,132.7 L71.2,131.0 L73.3,129.3 L75.4,127.6 L77.5,126.0 L79.7,124.3 L81.9,122.7 L84.1,121.1 L86.3,119.5 L88.6,117.9 L90.9,116.4 L93.2,114.8 L95.6,113.4 L97.9,112.0 L100.4,110.6 L102.8,109.3 L105.3,108.0 L107.8,106.8 L110.3,105.6 L112.9,104.5 L115.5,103.3 L118.1,102.2 L120.7,101.1 L123.3,100.0 L125.9,98.9 L128.6,97.9 L131.3,96.9 L134.0,96.1 L136.7,95.3 L139.5,94.7 L142.3,94.0 L145.1,93.4 L147.9,92.8 L150.7,92.2 L153.5,91.7 L156.4,91.2 L159.2,90.7 L162.1,90.3 L165.0,89.9 L167.8,89.6 L170.7,89.4 L173.6,89.2 L176.5,89.2 L179.4,89.1 L182.4,89.1 L185.3,89.2 L188.2,89.2 L191.1,89.3 L194.0,89.5 L197.0,89.7 L199.9,90.0 L202.8,90.3 L205.7,90.8 L208.6,91.4 L211.4,92.1 L214.2,93.0 L216.9,94.0 L219.6,95.4 L222.2,96.9 L224.7,98.7 L227.1,100.7 L229.4,102.7 L231.6,104.9 L233.8,107.0 L236.0,109.2 L238.2,111.3 L240.3,113.4 L242.5,115.3 L244.6,117.2 L246.8,119.0 L248.9,120.9 L251.0,122.7 L253.1,124.6 L255.2,126.4 L257.2,128.3 L259.2,130.1 L261.2,132.0 L263.2,133.8 L265.1,135.7 L267.1,137.6 L269.0,139.4 L270.9,141.3 L272.8,143.1 L274.7,145.0 L276.6,146.8 L278.4,148.7 L280.3,150.6 L282.1,152.4 L284.0,154.3 L285.8,156.1 L287.6,158.0 L289.4,159.9 L291.3,161.7 L293.1,163.6 L294.9,165.5 L296.7,167.3 L298.5,169.2 L300.3,171.1 L302.1,173.0 L303.9,174.9" fill="none" stroke="#332a00" stroke-width="0.7"/><path d="M-21.8,261.8 L-20.0,259.2 L-18.1,256.7 L-16.4,254.3 L-14.6,251.9 L-12.9,249.5 L-11.2,247.1 L-9.5,244.8 L-7.8,242.5 L-6.2,240.2 L-4.6,237.9 L-3.1,235.7 L-1.6,233.5 L-0.1,231.2 L1.3,229.0 L2.6,226.8 L3.9,224.6 L5.1,222.3 L6.3,220.1 L7.5,217.8 L8.6,215.5 L9.7,213.3 L10.8,211.0 L11.9,208.7 L13.0,206.5 L14.2,204.2 L15.4,202.0 L16.6,199.8 L17.9,197.6 L19.3,195.5 L20.6,193.4 L22.1,191.3 L23.5,189.2 L24.9,187.1 L26.4,185.1 L27.9,183.0 L29.3,181.0 L30.9,179.0 L32.4,177.0 L33.9,174.9 L35.5,172.9 L37.0,170.9 L38.6,168.9 L40.1,166.9 L41.7,164.9 L43.3,162.9 L45.0,160.9 L46.6,159.0 L48.2,157.0 L49.9,155.0 L51.6,153.1 L53.4,151.1 L55.1,149.2 L56.9,147.3 L58.7,145.4 L60.6,143.5 L62.5,141.7 L64.4,139.9 L66.3,138.1 L68.3,136.4 L70.3,134.6 L72.4,132.9 L74.4,131.2 L76.5,129.6 L78.6,127.9 L80.7,126.2 L82.9,124.6 L85.0,123.0 L87.2,121.4 L89.5,119.8 L91.7,118.2 L94.0,116.7 L96.3,115.2 L98.7,113.8 L101.0,112.4 L103.4,111.1 L105.9,109.8 L108.4,108.6 L110.9,107.4 L113.4,106.2 L115.9,105.1 L118.5,104.0 L121.1,102.9 L123.7,101.7 L126.3,100.6 L128.9,99.5 L131.5,98.6 L134.2,97.7 L137.0,96.9 L139.7,96.3 L142.5,95.6 L145.2,95.0 L148.0,94.4 L150.8,93.8 L153.6,93.2 L156.4,92.7 L159.3,92.2 L162.1,91.7 L165.0,91.4 L167.8,91.1 L170.7,90.8 L173.6,90.7 L176.5,90.6 L179.3,90.5 L182.2,90.5 L185.1,90.5 L188.0,90.5 L191.0,90.6 L193.9,90.8 L196.8,91.0 L199.7,91.2 L202.6,91.6 L205.4,92.1 L208.3,92.6 L211.1,93.3 L213.9,94.2 L216.6,95.3 L219.2,96.7 L221.8,98.3 L224.2,100.1 L226.6,102.1 L228.9,104.2 L231.1,106.4 L233.2,108.6 L235.4,110.8 L237.4,113.0 L239.5,115.1 L241.7,117.1 L243.8,119.0 L245.9,120.9 L248.0,122.7 L250.0,124.6 L252.1,126.4 L254.1,128.3 L256.1,130.2 L258.0,132.0 L260.0,133.9 L261.9,135.8 L263.8,137.6 L265.7,139.5 L267.6,141.3 L269.5,143.2 L271.4,145.1 L273.2,146.9 L275.0,148.8 L276.9,150.6 L278.7,152.5 L280.5,154.3 L282.3,156.1 L284.1,158.0 L285.9,159.8 L287.7,161.6 L289.5,163.5 L291.2,165.3 L293.0,167.2 L294.8,169.0 L296.6,170.9 L298.4,172.7 L300.1,174.6 L301.9,176.4" fill="none" stroke="#332a00" stroke-width="0.7"/><path d="M-20.0,262.0 L-18.1,259.5 L-16.2,257.0 L-14.4,254.6 L-12.6,252.3 L-10.8,249.9 L-9.0,247.6 L-7.3,245.3 L-5.6,243.0 L-3.9,240.8 L-2.3,238.6 L-0.8,236.4 L0.8,234.2 L2.3,232.0 L3.7,229.9 L5.1,227.7 L6.4,225.5 L7.6,223.3 L8.8,221.1 L9.9,218.9 L11.0,216.6 L12.1,214.4 L13.2,212.2 L14.3,209.9 L15.4,207.7 L16.5,205.5 L17.7,203.3 L18.9,201.1 L20.2,199.0 L21.5,196.9 L22.9,194.8 L24.3,192.8 L25.7,190.7 L27.1,188.7 L28.5,186.7 L30.0,184.6 L31.5,182.6 L32.9,180.6 L34.4,178.6 L35.9,176.7 L37.4,174.7 L39.0,172.7 L40.5,170.7 L42.0,168.7 L43.6,166.7 L45.1,164.8 L46.7,162.8 L48.3,160.8 L49.9,158.9 L51.6,156.9 L53.2,154.9 L54.9,153.0 L56.6,151.1 L58.4,149.2 L60.2,147.3 L62.0,145.5 L63.8,143.6 L65.7,141.8 L67.6,140.1 L69.6,138.3 L71.5,136.6 L73.5,134.9 L75.6,133.2 L77.6,131.5 L79.7,129.8 L81.7,128.2 L83.8,126.5 L86.0,124.9 L88.1,123.3 L90.3,121.7 L92.5,120.1 L94.8,118.6 L97.1,117.1 L99.4,115.6 L101.7,114.2 L104.1,112.9 L106.5,111.6 L108.9,110.4 L111.4,109.2 L113.9,108.0 L116.4,106.9 L119.0,105.7 L121.5,104.6 L124.0,103.4 L126.6,102.3 L129.2,101.2 L131.8,100.2 L134.5,99.3 L137.2,98.6 L139.9,97.9 L142.7,97.2 L145.4,96.6 L148.2,95.9 L150.9,95.3 L153.7,94.7 L156.5,94.2 L159.3,93.7 L162.1,93.2 L165.0,92.8 L167.8,92.5 L170.7,92.2 L173.5,92.1 L176.4,92.0 L179.3,91.9 L182.1,91.9 L185.0,91.9 L187.9,91.9 L190.8,91.9 L193.7,92.1 L196.6,92.3 L199.4,92.5 L202.3,92.9 L205.2,93.3 L208.0,93.9 L210.8,94.6 L213.6,95.5 L216.3,96.6 L218.9,97.9 L221.4,99.6 L223.8,101.4 L226.1,103.5 L228.4,105.7 L230.5,107.9 L232.6,110.2 L234.7,112.5 L236.7,114.7 L238.8,116.9 L240.9,118.9 L242.9,120.8 L245.0,122.7 L247.0,124.6 L249.1,126.4 L251.1,128.3 L253.0,130.2 L255.0,132.1 L256.9,134.0 L258.8,135.8 L260.7,137.7 L262.6,139.6 L264.4,141.4 L266.3,143.3 L268.1,145.1 L269.9,147.0 L271.7,148.8 L273.5,150.7 L275.3,152.5 L277.1,154.3 L278.9,156.2 L280.6,158.0 L282.4,159.8 L284.2,161.6 L285.9,163.4 L287.7,165.3 L289.4,167.1 L291.2,168.9 L292.9,170.7 L294.7,172.5 L296.5,174.3 L298.2,176.2 L300.0,178.0" fill="none" stroke="#332a00" stroke-width="0.7"/></g><g clip-path="url(#objL)"><g clip-path="url(#infL)"><g filter="url(#blL)"><rect x="-5" y="-5" width="274" height="462" fill="#4c3e00"/><path d="M-4.29,-20.0 L4.26,-20.0 L-660.36,472.0 L-670.24,472.0Z M7.59,-20.0 L16.15,-20.0 L-646.64,472.0 L-656.52,472.0Z M19.47,-20.0 L28.03,-20.0 L-632.92,472.0 L-642.80,472.0Z M31.35,-20.0 L39.91,-20.0 L-619.20,472.0 L-629.08,472.0Z M43.23,-20.0 L51.79,-20.0 L-605.48,472.0 L-615.36,472.0Z M55.11,-20.0 L63.67,-20.0 L-591.77,472.0 L-601.64,472.0Z M66.99,-20.0 L75.55,-20.0 L-578.05,472.0 L-587.93,472.0Z M78.87,-20.0 L87.43,-20.0 L-564.33,472.0 L-574.21,472.0Z M90.75,-20.0 L99.31,-20.0 L-550.61,472.0 L-560.49,472.0Z M102.63,-20.0 L111.19,-20.0 L-536.89,472.0 L-546.77,472.0Z M114.51,-20.0 L123.07,-20.0 L-523.17,472.0 L-533.05,472.0Z M126.39,-20.0 L134.95,-20.0 L-509.46,472.0 L-519.33,472.0Z M138.28,-20.0 L146.83,-20.0 L-495.74,472.0 L-505.61,472.0Z M150.16,-20.0 L158.71,-20.0 L-482.02,472.0 L-491.90,472.0Z M162.04,-20.0 L170.59,-20.0 L-468.30,472.0 L-478.18,472.0Z M173.92,-20.0 L182.47,-20.0 L-454.58,472.0 L-464.46,472.0Z M185.80,-20.0 L194.35,-20.0 L-440.86,472.0 L-450.74,472.0Z M197.68,-20.0 L206.23,-20.0 L-427.15,472.0 L-437.02,472.0Z M209.56,-20.0 L218.11,-20.0 L-413.43,472.0 L-423.30,472.0Z M221.44,-20.0 L229.99,-20.0 L-399.71,472.0 L-409.59,472.0Z M233.32,-20.0 L241.87,-20.0 L-385.99,472.0 L-395.87,472.0Z M245.20,-20.0 L253.75,-20.0 L-372.27,472.0 L-382.15,472.0Z M257.08,-20.0 L265.63,-20.0 L-358.55,472.0 L-368.43,472.0Z M268.96,-20.0 L277.51,-20.0 L-344.83,472.0 L-354.71,472.0Z M280.84,-20.0 L289.39,-20.0 L-331.12,472.0 L-340.99,472.0Z M292.72,-20.0 L301.27,-20.0 L-317.40,472.0 L-327.27,472.0Z M304.60,-20.0 L313.15,-20.0 L-303.68,472.0 L-313.56,472.0Z M316.48,-20.0 L325.03,-20.0 L-289.96,472.0 L-299.84,472.0Z M328.36,-20.0 L336.91,-20.0 L-276.24,472.0 L-286.12,472.0Z M340.24,-20.0 L348.79,-20.0 L-262.52,472.0 L-272.40,472.0Z M352.12,-20.0 L360.67,-20.0 L-248.81,472.0 L-258.68,472.0Z M364.00,-20.0 L372.56,-20.0 L-235.09,472.0 L-244.96,472.0Z M375.88,-20.0 L384.44,-20.0 L-221.37,472.0 L-231.25,472.0Z M387.76,-20.0 L396.32,-20.0 L-207.65,472.0 L-217.53,472.0Z M399.64,-20.0 L408.20,-20.0 L-193.93,472.0 L-203.81,472.0Z M411.52,-20.0 L420.08,-20.0 L-180.21,472.0 L-190.09,472.0Z M423.40,-20.0 L431.96,-20.0 L-166.49,472.0 L-176.37,472.0Z M435.28,-20.0 L443.84,-20.0 L-152.78,472.0 L-162.65,472.0Z M447.16,-20.0 L455.72,-20.0 L-139.06,472.0 L-148.94,472.0Z M459.04,-20.0 L467.60,-20.0 L-125.34,472.0 L-135.22,472.0Z M470.92,-20.0 L479.48,-20.0 L-111.62,472.0 L-121.50,472.0Z M482.80,-20.0 L491.36,-20.0 L-97.90,472.0 L-107.78,472.0Z M494.69,-20.0 L503.24,-20.0 L-84.18,472.0 L-94.06,472.0Z M506.57,-20.0 L515.12,-20.0 L-70.47,472.0 L-80.34,472.0Z M518.45,-20.0 L527.00,-20.0 L-56.75,472.0 L-66.62,472.0Z M530.33,-20.0 L538.88,-20.0 L-43.03,472.0 L-52.91,472.0Z M542.21,-20.0 L550.76,-20.0 L-29.31,472.0 L-39.19,472.0Z M554.09,-20.0 L562.64,-20.0 L-15.59,472.0 L-25.47,472.0Z M565.97,-20.0 L574.52,-20.0 L-1.87,472.0 L-11.75,472.0Z M577.85,-20.0 L586.40,-20.0 L11.84,472.0 L1.97,472.0Z M589.73,-20.0 L598.28,-20.0 L25.56,472.0 L15.69,472.0Z M601.61,-20.0 L610.16,-20.0 L39.28,472.0 L29.40,472.0Z M613.49,-20.0 L622.04,-20.0 L53.00,472.0 L43.12,472.0Z M625.37,-20.0 L633.92,-20.0 L66.72,472.0 L56.84,472.0Z M637.25,-20.0 L645.80,-20.0 L80.44,472.0 L70.56,472.0Z M649.13,-20.0 L657.68,-20.0 L94.16,472.0 L84.28,472.0Z M661.01,-20.0 L669.56,-20.0 L107.87,472.0 L98.00,472.0Z M672.89,-20.0 L681.44,-20.0 L121.59,472.0 L111.71,472.0Z M684.77,-20.0 L693.32,-20.0 L135.31,472.0 L125.43,472.0Z M696.65,-20.0 L705.20,-20.0 L149.03,472.0 L139.15,472.0Z M708.53,-20.0 L717.09,-20.0 L162.75,472.0 L152.87,472.0Z M720.41,-20.0 L728.97,-20.0 L176.47,472.0 L166.59,472.0Z M732.29,-20.0 L740.85,-20.0 L190.18,472.0 L180.31,472.0Z M744.17,-20.0 L752.73,-20.0 L203.90,472.0 L194.03,472.0Z M756.05,-20.0 L764.61,-20.0 L217.62,472.0 L207.74,472.0Z M767.93,-20.0 L776.49,-20.0 L231.34,472.0 L221.46,472.0Z M779.81,-20.0 L788.37,-20.0 L245.06,472.0 L235.18,472.0Z M791.69,-20.0 L800.25,-20.0 L258.78,472.0 L248.90,472.0Z M803.57,-20.0 L812.13,-20.0 L272.49,472.0 L262.62,472.0Z M815.45,-20.0 L824.01,-20.0 L286.21,472.0 L276.34,472.0Z" fill="#ecd000"/><path d="M-2.39,-20.0 L2.36,-20.0 L-662.55,472.0 L-668.04,472.0Z M9.49,-20.0 L14.24,-20.0 L-648.83,472.0 L-654.32,472.0Z M21.37,-20.0 L26.12,-20.0 L-635.12,472.0 L-640.60,472.0Z M33.25,-20.0 L38.01,-20.0 L-621.40,472.0 L-626.89,472.0Z M45.13,-20.0 L49.89,-20.0 L-607.68,472.0 L-613.17,472.0Z M57.01,-20.0 L61.77,-20.0 L-593.96,472.0 L-599.45,472.0Z M68.89,-20.0 L73.65,-20.0 L-580.24,472.0 L-585.73,472.0Z M80.77,-20.0 L85.53,-20.0 L-566.52,472.0 L-572.01,472.0Z M92.65,-20.0 L97.41,-20.0 L-552.81,472.0 L-558.29,472.0Z M104.53,-20.0 L109.29,-20.0 L-539.09,472.0 L-544.57,472.0Z M116.42,-20.0 L121.17,-20.0 L-525.37,472.0 L-530.86,472.0Z M128.30,-20.0 L133.05,-20.0 L-511.65,472.0 L-517.14,472.0Z M140.18,-20.0 L144.93,-20.0 L-497.93,472.0 L-503.42,472.0Z M152.06,-20.0 L156.81,-20.0 L-484.21,472.0 L-489.70,472.0Z M163.94,-20.0 L168.69,-20.0 L-470.50,472.0 L-475.98,472.0Z M175.82,-20.0 L180.57,-20.0 L-456.78,472.0 L-462.26,472.0Z M187.70,-20.0 L192.45,-20.0 L-443.06,472.0 L-448.55,472.0Z M199.58,-20.0 L204.33,-20.0 L-429.34,472.0 L-434.83,472.0Z M211.46,-20.0 L216.21,-20.0 L-415.62,472.0 L-421.11,472.0Z M223.34,-20.0 L228.09,-20.0 L-401.90,472.0 L-407.39,472.0Z M235.22,-20.0 L239.97,-20.0 L-388.18,472.0 L-393.67,472.0Z M247.10,-20.0 L251.85,-20.0 L-374.47,472.0 L-379.95,472.0Z M258.98,-20.0 L263.73,-20.0 L-360.75,472.0 L-366.24,472.0Z M270.86,-20.0 L275.61,-20.0 L-347.03,472.0 L-352.52,472.0Z M282.74,-20.0 L287.49,-20.0 L-333.31,472.0 L-338.80,472.0Z M294.62,-20.0 L299.37,-20.0 L-319.59,472.0 L-325.08,472.0Z M306.50,-20.0 L311.25,-20.0 L-305.87,472.0 L-311.36,472.0Z M318.38,-20.0 L323.13,-20.0 L-292.16,472.0 L-297.64,472.0Z M330.26,-20.0 L335.01,-20.0 L-278.44,472.0 L-283.92,472.0Z M342.14,-20.0 L346.89,-20.0 L-264.72,472.0 L-270.21,472.0Z M354.02,-20.0 L358.77,-20.0 L-251.00,472.0 L-256.49,472.0Z M365.90,-20.0 L370.65,-20.0 L-237.28,472.0 L-242.77,472.0Z M377.78,-20.0 L382.53,-20.0 L-223.56,472.0 L-229.05,472.0Z M389.66,-20.0 L394.42,-20.0 L-209.85,472.0 L-215.33,472.0Z M401.54,-20.0 L406.30,-20.0 L-196.13,472.0 L-201.61,472.0Z M413.42,-20.0 L418.18,-20.0 L-182.41,472.0 L-187.90,472.0Z M425.30,-20.0 L430.06,-20.0 L-168.69,472.0 L-174.18,472.0Z M437.18,-20.0 L441.94,-20.0 L-154.97,472.0 L-160.46,472.0Z M449.06,-20.0 L453.82,-20.0 L-141.25,472.0 L-146.74,472.0Z M460.94,-20.0 L465.70,-20.0 L-127.53,472.0 L-133.02,472.0Z M472.83,-20.0 L477.58,-20.0 L-113.82,472.0 L-119.30,472.0Z M484.71,-20.0 L489.46,-20.0 L-100.10,472.0 L-105.59,472.0Z M496.59,-20.0 L501.34,-20.0 L-86.38,472.0 L-91.87,472.0Z M508.47,-20.0 L513.22,-20.0 L-72.66,472.0 L-78.15,472.0Z M520.35,-20.0 L525.10,-20.0 L-58.94,472.0 L-64.43,472.0Z M532.23,-20.0 L536.98,-20.0 L-45.22,472.0 L-50.71,472.0Z M544.11,-20.0 L548.86,-20.0 L-31.51,472.0 L-36.99,472.0Z M555.99,-20.0 L560.74,-20.0 L-17.79,472.0 L-23.27,472.0Z M567.87,-20.0 L572.62,-20.0 L-4.07,472.0 L-9.56,472.0Z M579.75,-20.0 L584.50,-20.0 L9.65,472.0 L4.16,472.0Z M591.63,-20.0 L596.38,-20.0 L23.37,472.0 L17.88,472.0Z M603.51,-20.0 L608.26,-20.0 L37.09,472.0 L31.60,472.0Z M615.39,-20.0 L620.14,-20.0 L50.80,472.0 L45.32,472.0Z M627.27,-20.0 L632.02,-20.0 L64.52,472.0 L59.04,472.0Z M639.15,-20.0 L643.90,-20.0 L78.24,472.0 L72.75,472.0Z M651.03,-20.0 L655.78,-20.0 L91.96,472.0 L86.47,472.0Z M662.91,-20.0 L667.66,-20.0 L105.68,472.0 L100.19,472.0Z M674.79,-20.0 L679.54,-20.0 L119.40,472.0 L113.91,472.0Z M686.67,-20.0 L691.42,-20.0 L133.12,472.0 L127.63,472.0Z M698.55,-20.0 L703.30,-20.0 L146.83,472.0 L141.35,472.0Z M710.43,-20.0 L715.18,-20.0 L160.55,472.0 L155.06,472.0Z M722.31,-20.0 L727.06,-20.0 L174.27,472.0 L168.78,472.0Z M734.19,-20.0 L738.94,-20.0 L187.99,472.0 L182.50,472.0Z M746.07,-20.0 L750.83,-20.0 L201.71,472.0 L196.22,472.0Z M757.95,-20.0 L762.71,-20.0 L215.43,472.0 L209.94,472.0Z M769.83,-20.0 L774.59,-20.0 L229.14,472.0 L223.66,472.0Z M781.71,-20.0 L786.47,-20.0 L242.86,472.0 L237.38,472.0Z M793.59,-20.0 L798.35,-20.0 L256.58,472.0 L251.09,472.0Z M805.47,-20.0 L810.23,-20.0 L270.30,472.0 L264.81,472.0Z M817.36,-20.0 L822.11,-20.0 L284.02,472.0 L278.53,472.0Z" fill="#fff034"/><path d="M-6.49,-20.0 L-5.42,-20.0 L-671.54,472.0 L-672.77,472.0Z M5.39,-20.0 L6.46,-20.0 L-657.82,472.0 L-659.06,472.0Z M17.27,-20.0 L18.34,-20.0 L-644.10,472.0 L-645.34,472.0Z M29.15,-20.0 L30.22,-20.0 L-630.38,472.0 L-631.62,472.0Z M41.03,-20.0 L42.10,-20.0 L-616.67,472.0 L-617.90,472.0Z M52.91,-20.0 L53.98,-20.0 L-602.95,472.0 L-604.18,472.0Z M64.80,-20.0 L65.86,-20.0 L-589.23,472.0 L-590.46,472.0Z M76.68,-20.0 L77.74,-20.0 L-575.51,472.0 L-576.74,472.0Z M88.56,-20.0 L89.63,-20.0 L-561.79,472.0 L-563.03,472.0Z M100.44,-20.0 L101.51,-20.0 L-548.07,472.0 L-549.31,472.0Z M112.32,-20.0 L113.39,-20.0 L-534.35,472.0 L-535.59,472.0Z M124.20,-20.0 L125.27,-20.0 L-520.64,472.0 L-521.87,472.0Z M136.08,-20.0 L137.15,-20.0 L-506.92,472.0 L-508.15,472.0Z M147.96,-20.0 L149.03,-20.0 L-493.20,472.0 L-494.43,472.0Z M159.84,-20.0 L160.91,-20.0 L-479.48,472.0 L-480.72,472.0Z M171.72,-20.0 L172.79,-20.0 L-465.76,472.0 L-467.00,472.0Z M183.60,-20.0 L184.67,-20.0 L-452.04,472.0 L-453.28,472.0Z M195.48,-20.0 L196.55,-20.0 L-438.33,472.0 L-439.56,472.0Z M207.36,-20.0 L208.43,-20.0 L-424.61,472.0 L-425.84,472.0Z M219.24,-20.0 L220.31,-20.0 L-410.89,472.0 L-412.12,472.0Z M231.12,-20.0 L232.19,-20.0 L-397.17,472.0 L-398.40,472.0Z M243.00,-20.0 L244.07,-20.0 L-383.45,472.0 L-384.69,472.0Z M254.88,-20.0 L255.95,-20.0 L-369.73,472.0 L-370.97,472.0Z M266.76,-20.0 L267.83,-20.0 L-356.02,472.0 L-357.25,472.0Z M278.64,-20.0 L279.71,-20.0 L-342.30,472.0 L-343.53,472.0Z M290.52,-20.0 L291.59,-20.0 L-328.58,472.0 L-329.81,472.0Z M302.40,-20.0 L303.47,-20.0 L-314.86,472.0 L-316.09,472.0Z M314.28,-20.0 L315.35,-20.0 L-301.14,472.0 L-302.38,472.0Z M326.16,-20.0 L327.23,-20.0 L-287.42,472.0 L-288.66,472.0Z M338.04,-20.0 L339.11,-20.0 L-273.70,472.0 L-274.94,472.0Z M349.92,-20.0 L350.99,-20.0 L-259.99,472.0 L-261.22,472.0Z M361.80,-20.0 L362.87,-20.0 L-246.27,472.0 L-247.50,472.0Z M373.68,-20.0 L374.75,-20.0 L-232.55,472.0 L-233.78,472.0Z M385.56,-20.0 L386.63,-20.0 L-218.83,472.0 L-220.07,472.0Z M397.44,-20.0 L398.51,-20.0 L-205.11,472.0 L-206.35,472.0Z M409.32,-20.0 L410.39,-20.0 L-191.39,472.0 L-192.63,472.0Z M421.21,-20.0 L422.27,-20.0 L-177.68,472.0 L-178.91,472.0Z M433.09,-20.0 L434.15,-20.0 L-163.96,472.0 L-165.19,472.0Z M444.97,-20.0 L446.04,-20.0 L-150.24,472.0 L-151.47,472.0Z M456.85,-20.0 L457.92,-20.0 L-136.52,472.0 L-137.75,472.0Z M468.73,-20.0 L469.80,-20.0 L-122.80,472.0 L-124.04,472.0Z M480.61,-20.0 L481.68,-20.0 L-109.08,472.0 L-110.32,472.0Z M492.49,-20.0 L493.56,-20.0 L-95.36,472.0 L-96.60,472.0Z M504.37,-20.0 L505.44,-20.0 L-81.65,472.0 L-82.88,472.0Z M516.25,-20.0 L517.32,-20.0 L-67.93,472.0 L-69.16,472.0Z M528.13,-20.0 L529.20,-20.0 L-54.21,472.0 L-55.44,472.0Z M540.01,-20.0 L541.08,-20.0 L-40.49,472.0 L-41.73,472.0Z M551.89,-20.0 L552.96,-20.0 L-26.77,472.0 L-28.01,472.0Z M563.77,-20.0 L564.84,-20.0 L-13.05,472.0 L-14.29,472.0Z M575.65,-20.0 L576.72,-20.0 L0.66,472.0 L-0.57,472.0Z M587.53,-20.0 L588.60,-20.0 L14.38,472.0 L13.15,472.0Z M599.41,-20.0 L600.48,-20.0 L28.10,472.0 L26.87,472.0Z M611.29,-20.0 L612.36,-20.0 L41.82,472.0 L40.58,472.0Z M623.17,-20.0 L624.24,-20.0 L55.54,472.0 L54.30,472.0Z M635.05,-20.0 L636.12,-20.0 L69.26,472.0 L68.02,472.0Z M646.93,-20.0 L648.00,-20.0 L82.97,472.0 L81.74,472.0Z M658.81,-20.0 L659.88,-20.0 L96.69,472.0 L95.46,472.0Z M670.69,-20.0 L671.76,-20.0 L110.41,472.0 L109.18,472.0Z M682.57,-20.0 L683.64,-20.0 L124.13,472.0 L122.90,472.0Z M694.45,-20.0 L695.52,-20.0 L137.85,472.0 L136.61,472.0Z M706.33,-20.0 L707.40,-20.0 L151.57,472.0 L150.33,472.0Z M718.21,-20.0 L719.28,-20.0 L165.29,472.0 L164.05,472.0Z M730.09,-20.0 L731.16,-20.0 L179.00,472.0 L177.77,472.0Z M741.97,-20.0 L743.04,-20.0 L192.72,472.0 L191.49,472.0Z M753.85,-20.0 L754.92,-20.0 L206.44,472.0 L205.21,472.0Z M765.74,-20.0 L766.80,-20.0 L220.16,472.0 L218.92,472.0Z M777.62,-20.0 L778.68,-20.0 L233.88,472.0 L232.64,472.0Z M789.50,-20.0 L790.56,-20.0 L247.60,472.0 L246.36,472.0Z M801.38,-20.0 L802.45,-20.0 L261.31,472.0 L260.08,472.0Z M813.26,-20.0 L814.33,-20.0 L275.03,472.0 L273.80,472.0Z" fill="#9a8614"/></g></g><path d="M-20.00,262.00 C-16.00,256.57 -2.65,239.82 4.00,229.40 C10.65,218.98 13.93,209.13 19.90,199.50 C25.87,189.87 33.15,180.23 39.80,171.60 C46.45,162.97 53.15,154.67 59.80,147.70 C66.45,140.73 73.07,135.17 79.70,129.80 C86.33,124.43 92.97,119.55 99.60,115.50 C106.23,111.45 112.87,108.42 119.50,105.50 C126.13,102.58 130.15,100.25 139.40,98.00 C148.65,95.75 162.40,92.33 175.00,92.00 C187.60,91.67 204.00,91.50 215.00,96.00 C226.00,100.50 233.00,111.67 241.00,119.00 C249.00,126.33 253.17,130.17 263.00,140.00 C272.83,149.83 293.83,171.67 300.00,178.00" fill="none" stroke="#f6de10" stroke-width="3.2" transform="translate(0 2.6)"/><path d="M-20.00,262.00 C-16.00,256.57 -2.65,239.82 4.00,229.40 C10.65,218.98 13.93,209.13 19.90,199.50 C25.87,189.87 33.15,180.23 39.80,171.60 C46.45,162.97 53.15,154.67 59.80,147.70 C66.45,140.73 73.07,135.17 79.70,129.80 C86.33,124.43 92.97,119.55 99.60,115.50 C106.23,111.45 112.87,108.42 119.50,105.50 C126.13,102.58 130.15,100.25 139.40,98.00 C148.65,95.75 162.40,92.33 175.00,92.00 C187.60,91.67 204.00,91.50 215.00,96.00 C226.00,100.50 233.00,111.67 241.00,119.00 C249.00,126.33 253.17,130.17 263.00,140.00 C272.83,149.83 293.83,171.67 300.00,178.00" fill="none" stroke="#4a3e00" stroke-width="0.8" stroke-dasharray="12 11" transform="translate(0 4.4)"/><path d="M-20.00,262.00 C-16.00,256.57 -2.65,239.82 4.00,229.40 C10.65,218.98 13.93,209.13 19.90,199.50 C25.87,189.87 33.15,180.23 39.80,171.60 C46.45,162.97 53.15,154.67 59.80,147.70 C66.45,140.73 73.07,135.17 79.70,129.80 C86.33,124.43 92.97,119.55 99.60,115.50 C106.23,111.45 112.87,108.42 119.50,105.50 C126.13,102.58 130.15,100.25 139.40,98.00 C148.65,95.75 162.40,92.33 175.00,92.00 C187.60,91.67 204.00,91.50 215.00,96.00 C226.00,100.50 233.00,111.67 241.00,119.00 C249.00,126.33 253.17,130.17 263.00,140.00 C272.83,149.83 293.83,171.67 300.00,178.00" fill="none" stroke="#2c2400" stroke-width="1.3"/></g><rect x="120.1" y="123.8" width="85.60000000000001" height="145.6" rx="42.800000000000004" fill="none" stroke="#f2d810" stroke-width="3.0"/><rect x="118.3" y="122.0" width="89.2" height="149.2" rx="44.6" fill="none" stroke="#4a3e00" stroke-width="0.8" stroke-dasharray="11.4 11.4"/><rect x="122.8" y="126.5" width="80.2" height="140.2" rx="40.1" fill="#4a3e00"/><rect x="124.3" y="128" width="77.2" height="137.2" rx="38.6" fill="#f8e010"/><rect x="126.89999999999999" y="130.6" width="72.0" height="132.0" rx="36.0" fill="none" stroke="#4a3e00" stroke-width="0.7"/><rect x="129.5" y="133.2" width="66.8" height="126.79999999999998" rx="33.4" fill="none" stroke="#4a3e00" stroke-width="0.7"/><rect x="132.1" y="135.8" width="61.6" height="121.6" rx="30.8" fill="none" stroke="#4a3e00" stroke-width="0.7"/><clipPath id="slL"><rect x="132.8" y="133.27" width="60.19999999999999" height="123.42999999999998" rx="30.1" ry="25.585"/></clipPath><g clip-path="url(#slL)"><rect x="132.8" y="133.27" width="60.19999999999999" height="123.42999999999998" fill="url(#wallL)"/><path d="M157.9,167.3 V138.3 A5.0,3.0 0 0 1 167.9,138.3 V167.3" fill="none" stroke="#e8c000" stroke-width="1" opacity="0.3"/><path d="M152.9,167.3 V145.3 A10.0,6.0 0 0 1 172.9,145.3 V167.3" fill="none" stroke="#e8c000" stroke-width="1" opacity="0.3"/><path d="M146.9,167.3 V152.9 A16.0,9.6 0 0 1 178.9,152.9 V167.3" fill="none" stroke="#e8c000" stroke-width="1" opacity="0.3"/><path d="M140.9,167.3 V160.5 A22.0,13.2 0 0 1 184.9,160.5 V167.3" fill="none" stroke="#e8c000" stroke-width="1" opacity="0.3"/><path d="M134.9,167.3 V168.1 A28.0,16.8 0 0 1 190.9,168.1 V167.3" fill="none" stroke="#e8c000" stroke-width="1" opacity="0.3"/><rect x="130.8" y="227" width="64.19999999999999" height="33.69999999999999" fill="#a8a8a8"/><path id="wpL" d="M133.4,178.5 A29.75,21 0 0 1 192.9,178.5 V227 A29.75,11 0 0 1 133.4,227 Z" fill="url(#gL)"/><line x1="162.5" y1="157.5" x2="161.5" y2="260.7" stroke="#a0a0a0" stroke-width="1"/><line x1="133.4" y1="227" x2="192.9" y2="227" stroke="#b8b8b8" stroke-width="1"/></g><rect x="0" y="444" width="264" height="4.2" fill="#f8e418"/><line x1="0" y1="443.7" x2="264" y2="443.7" stroke="#6a5800" stroke-width="0.8" opacity="0.7"/><rect x="0" y="448.2" width="264" height="1.6" fill="#5a4a00"/><pattern id="hbL" patternUnits="userSpaceOnUse" width="4.2" height="8" patternTransform="skewX(-35)"><rect width="4.2" height="8" fill="#f0d400"/><rect width="1.6" height="8" fill="#5a4a00"/></pattern><rect x="0" y="449.8" width="264" height="3" fill="url(#hbL)"/></svg><div class="r" style="left:0.00px;top:6.00px;width:2.30px;height:8.30px;background:#c9c9c9;"></div><svg class="r" style="left:0;top:0" width="264" height="452"><rect x="40.6" y="89.5" width="104.6" height="83.5" fill="none" stroke="#f41426" stroke-width="2.5"/></svg><div class="r" style="left:246.20px;top:130.00px;width:2.00px;height:53.20px;background:#b9b9b9;"></div><div class="r" style="left:246.20px;top:183.20px;width:2.00px;height:69.80px;background:#7d7d7d;"></div><div class="r" style="left:243.60px;top:179.60px;width:7.2px;height:7.2px;background:#000;border-radius:50%;"></div><div class="r" style="left:243.60px;top:249.40px;width:7.2px;height:7.2px;background:#000;border-radius:50%;"></div><svg class="r" style="left:215.50px;top:176.50px" width="27.70" height="13.30"><path d="M0 0 H20.90 L26.70 6.65 L20.90 13.30 H0 Z" fill="#fff"/></svg><div class="t" style="left:211.60px;top:177.45px;height:12px;line-height:12px;font-size:7.8px;color:#4a5060;font-weight:normal;font-style:normal;width:30px;text-align:center;">45</div><div class="r" style="left:157.00px;top:-2.00px;width:99.70px;height:121.40px;background:#fff;border:1px solid #e6e6e6;box-sizing:border-box;"></div><div class="t" style="left:164.00px;top:-3.50px;height:12px;line-height:12px;font-size:7.3px;color:#444;font-weight:normal;font-style:normal;">Color scheme</div><div class="r" style="left:164.00px;top:10.50px;width:80.80px;height:13.50px;border:1px solid #c6c6c6;box-sizing:border-box;"></div><div class="t" style="left:168.00px;top:11.80px;height:12px;line-height:12px;font-size:7.45px;color:#333;font-weight:normal;font-style:normal;">Material Color</div><svg class="r" style="left:234.00px;top:13.80px" width="7" height="7"><polyline points="1,2.50 3.50,4.75 6.00,2.50" fill="none" stroke="#333" stroke-width="1.1"/></svg><div class="r" style="left:164.00px;top:30.70px;width:13.20px;height:13.40px;border:1px solid #a8a8a8;box-sizing:border-box;background:#fff;"></div><svg class="r" style="left:166.60px;top:33.40px" width="8" height="8"><polyline points="1.6,4.2 3.3,5.8 6.6,2.4" fill="none" stroke="#777" stroke-width="1.1"/></svg><div class="t" style="left:180.80px;top:31.70px;height:12px;line-height:12px;font-size:7.5px;color:#333;font-weight:normal;font-style:normal;">Extruder 1</div><div class="r" style="left:237.30px;top:34.40px;width:6px;height:6px;background:#f7c21a;border-radius:50%;"></div><div class="r" style="left:164.00px;top:44.50px;width:13.20px;height:13.40px;border:1px solid #a8a8a8;box-sizing:border-box;background:#fff;"></div><svg class="r" style="left:166.60px;top:47.20px" width="8" height="8"><polyline points="1.6,4.2 3.3,5.8 6.6,2.4" fill="none" stroke="#777" stroke-width="1.1"/></svg><div class="t" style="left:180.80px;top:45.50px;height:12px;line-height:12px;font-size:7.5px;color:#333;font-weight:normal;font-style:normal;">Extruder 2</div><div class="r" style="left:237.30px;top:48.20px;width:6px;height:6px;background:#f7c21a;border-radius:50%;"></div><div class="r" style="left:164.00px;top:58.30px;width:13.20px;height:13.40px;border:1px solid #a8a8a8;box-sizing:border-box;background:#fff;"></div><div class="t" style="left:180.80px;top:59.30px;height:12px;line-height:12px;font-size:7.5px;color:#333;font-weight:normal;font-style:normal;">Show Travels</div><div class="r" style="left:164.00px;top:72.10px;width:13.20px;height:13.40px;border:1px solid #a8a8a8;box-sizing:border-box;background:#fff;"></div><svg class="r" style="left:166.60px;top:74.80px" width="8" height="8"><polyline points="1.6,4.2 3.3,5.8 6.6,2.4" fill="none" stroke="#777" stroke-width="1.1"/></svg><div class="t" style="left:180.80px;top:73.10px;height:12px;line-height:12px;font-size:7.5px;color:#333;font-weight:normal;font-style:normal;">Show Helpers</div><div class="r" style="left:164.00px;top:85.90px;width:13.20px;height:13.40px;border:1px solid #a8a8a8;box-sizing:border-box;background:#fff;"></div><svg class="r" style="left:166.60px;top:88.60px" width="8" height="8"><polyline points="1.6,4.2 3.3,5.8 6.6,2.4" fill="none" stroke="#777" stroke-width="1.1"/></svg><div class="t" style="left:180.80px;top:86.90px;height:12px;line-height:12px;font-size:7.5px;color:#333;font-weight:normal;font-style:normal;">Show Shell</div><div class="r" style="left:164.00px;top:99.70px;width:13.20px;height:13.40px;border:1px solid #a8a8a8;box-sizing:border-box;background:#fff;"></div><svg class="r" style="left:166.60px;top:102.40px" width="8" height="8"><polyline points="1.6,4.2 3.3,5.8 6.6,2.4" fill="none" stroke="#777" stroke-width="1.1"/></svg><div class="t" style="left:180.80px;top:100.70px;height:12px;line-height:12px;font-size:7.5px;color:#333;font-weight:normal;font-style:normal;">Show Infill</div><div class="r" style="left:263.50px;top:0.00px;width:233.50px;height:452.00px;background:#fff;"></div><div class="r" style="left:380.50px;top:-3.00px;width:105.00px;height:21.70px;border:1px solid #c8c8c8;border-left:none;box-sizing:border-box;background:#fff;"></div><div class="r" style="left:275.00px;top:-3.00px;width:105.50px;height:21.80px;border:2px solid #2ea4dc;box-sizing:border-box;background:#fff;"></div><div class="t" style="left:301.00px;top:3.50px;height:12px;line-height:12px;font-size:8.6px;color:#333;font-weight:normal;font-style:normal;">Extruder</div><div class="r" style="left:336.80px;top:0.7px;width:16.4px;height:16.4px;border:1.3px solid #333;border-radius:50%;box-sizing:border-box;"></div><div class="t" style="left:340.00px;top:3.40px;height:12px;line-height:12px;font-size:7.5px;color:#222;font-weight:normal;font-style:normal;width:10px;text-align:center;"><b>1</b></div><div class="r" style="left:347.60px;top:1.3px;width:6.2px;height:6.2px;background:#fdc50f;border-radius:50%;border:0.9px solid #fff;box-sizing:border-box;"></div><div class="t" style="left:406.50px;top:3.50px;height:12px;line-height:12px;font-size:8.6px;color:#333;font-weight:normal;font-style:normal;">Extruder</div><div class="r" style="left:441.80px;top:0.7px;width:16.4px;height:16.4px;border:1.3px solid #333;border-radius:50%;box-sizing:border-box;"></div><div class="t" style="left:445.00px;top:3.40px;height:12px;line-height:12px;font-size:7.5px;color:#222;font-weight:normal;font-style:normal;width:10px;text-align:center;"><b>2</b></div><div class="r" style="left:452.60px;top:1.3px;width:6.2px;height:6.2px;background:#fdc50f;border-radius:50%;border:0.9px solid #fff;box-sizing:border-box;"></div><div class="t" style="left:275.00px;top:25.50px;height:12px;line-height:12px;font-size:7.6px;color:#3c3c3c;font-weight:normal;font-style:normal;">Material</div><div class="r" style="left:326.50px;top:26.00px;width:159.00px;height:13.00px;border:1px solid #c8c8c8;box-sizing:border-box;"></div><div class="t" style="left:330.50px;top:27.80px;height:12px;line-height:12px;font-size:7.6px;color:#444;font-weight:normal;font-style:normal;">PLA</div><svg class="r" style="left:473.00px;top:29.00px" width="7" height="7"><polyline points="1,2.50 3.50,4.75 6.00,2.50" fill="none" stroke="#444" stroke-width="1.1"/></svg><div class="t" style="left:275.00px;top:48.50px;height:12px;line-height:12px;font-size:7.6px;color:#3c3c3c;font-weight:normal;font-style:normal;">Print core</div><div class="r" style="left:326.50px;top:49.00px;width:159.00px;height:13.00px;border:1px solid #c8c8c8;box-sizing:border-box;"></div><div class="t" style="left:330.50px;top:50.80px;height:12px;line-height:12px;font-size:7.6px;color:#444;font-weight:normal;font-style:normal;">AA 0.4</div><svg class="r" style="left:473.00px;top:52.00px" width="7" height="7"><polyline points="1,2.50 3.50,4.75 6.00,2.50" fill="none" stroke="#444" stroke-width="1.1"/></svg><div class="t" style="right:538.50px;top:72.50px;height:12px;line-height:12px;font-size:7.6px;color:#2ea4dc;font-weight:normal;font-style:normal;text-decoration:underline;">Check material compatibility</div><div class="r" style="left:263.50px;top:88.00px;width:233.50px;height:4.00px;background:#f4f4f4;"></div><div class="t" style="left:275.50px;top:102.50px;height:12px;line-height:12px;font-size:8.9px;color:#222;font-weight:bold;font-style:normal;">Print Setup</div><div class="r" style="left:357.00px;top:102.00px;width:64.00px;height:13.00px;border:1px solid #bbb;box-sizing:border-box;"></div><div class="r" style="left:420.50px;top:102.00px;width:64.00px;height:13.00px;border:1.5px solid #2ea4dc;box-sizing:border-box;"></div><div class="t" style="left:357.00px;top:102.80px;height:12px;line-height:12px;font-size:7.6px;color:#333;font-weight:normal;font-style:normal;width:64px;text-align:center;">Recommended</div><div class="t" style="left:420.50px;top:102.80px;height:12px;line-height:12px;font-size:7.6px;color:#333;font-weight:normal;font-style:normal;width:64px;text-align:center;">Custom</div><div class="t" style="left:275.50px;top:126.00px;height:12px;line-height:12px;font-size:7.6px;color:#3c3c3c;font-weight:normal;font-style:normal;">Profile:</div><div class="r" style="left:357.00px;top:124.50px;width:128.50px;height:13.00px;border:1px solid #c8c8c8;box-sizing:border-box;"></div><div class="t" style="left:360.50px;top:126.20px;height:12px;line-height:12px;font-size:7.6px;color:#444;font-weight:normal;font-style:normal;">Fine <span style="color:#c4c4c4">- 0.1mm</span></div><svg class="r" style="left:462.00px;top:126.5px" width="9" height="9"><path d="M4.5 0.5 L5.6 3.3 L8.6 3.4 L6.2 5.3 L7.1 8.3 L4.5 6.5 L1.9 8.3 L2.8 5.3 L0.4 3.4 L3.4 3.3 Z" fill="#555"/></svg><svg class="r" style="left:472.00px;top:127.50px" width="7" height="7"><polyline points="1,2.50 3.50,4.75 6.00,2.50" fill="none" stroke="#444" stroke-width="1.1"/></svg><div class="r" style="left:275.00px;top:147.50px;width:210.50px;height:13.00px;border:1px solid #c8c8c8;box-sizing:border-box;"></div><div class="t" style="left:277.50px;top:149.50px;height:12px;line-height:12px;font-size:7.6px;color:#444;font-weight:normal;font-style:normal;">Search...</div><div class="r" style="left:0;top:168px;width:1024px;height:272px;overflow:hidden;"><div class="r" style="left:0;top:-168px;width:1024px;height:452px;"><div class="r" style="left:275.00px;top:170.20px;width:210.50px;height:13.50px;background:#f3f3f3;"></div><div class="t" style="left:291.60px;top:171.55px;height:12px;line-height:12px;font-size:7.9px;color:#1d2a55;font-weight:bold;font-style:normal;">Quality</div><div class="r" style="left:278.60px;top:172.75px;width:8.40px;height:1.70px;background:#1d2a55;"></div><div class="r" style="left:278.60px;top:175.95px;width:6.40px;height:1.50px;background:#1d2a55;"></div><div class="r" style="left:278.60px;top:179.05px;width:3.90px;height:1.20px;background:#55607f;"></div><svg class="r" style="left:472.00px;top:173.75px" width="7" height="7"><polyline points="1,2.50 3.50,4.75 6.00,2.50" fill="none" stroke="#1d2a55" stroke-width="1.2"/></svg><div class="t" style="left:285.50px;top:186.85px;height:12px;line-height:12px;font-size:7.4px;color:#3c3c3c;font-weight:normal;font-style:normal;">Layer Height</div><div class="r" style="left:417.60px;top:185.45px;width:67.90px;height:13.60px;border:1px solid #c8c8c8;box-sizing:border-box;background:#fff;"></div><div class="t" style="left:422.00px;top:186.55px;height:12px;line-height:12px;font-size:7.6px;color:#333;font-weight:normal;font-style:normal;">0.1</div><div class="t" style="right:541.00px;top:186.55px;height:12px;line-height:12px;font-size:7.6px;color:#b4b4b4;font-weight:normal;font-style:normal;">mm</div><svg class="r" style="left:403.70px;top:186.45px" width="10" height="10"><g fill="none" stroke="#8a8a8a" stroke-width="1.2"><ellipse cx="6.3" cy="3.7" rx="2.2" ry="1.5" transform="rotate(-45 6.3 3.7)"/><ellipse cx="3.7" cy="6.3" rx="2.2" ry="1.5" transform="rotate(-45 3.7 6.3)"/></g></svg><div class="t" style="left:285.50px;top:201.85px;height:12px;line-height:12px;font-size:7.4px;color:#3c3c3c;font-weight:normal;font-style:normal;">Initial Layer Height</div><div class="r" style="left:417.60px;top:200.45px;width:67.90px;height:13.60px;border:1px solid #c8c8c8;box-sizing:border-box;background:#fff;"></div><div class="t" style="left:422.00px;top:201.55px;height:12px;line-height:12px;font-size:7.6px;color:#333;font-weight:normal;font-style:normal;">0.27</div><div class="t" style="right:541.00px;top:201.55px;height:12px;line-height:12px;font-size:7.6px;color:#b4b4b4;font-weight:normal;font-style:normal;">mm</div><svg class="r" style="left:403.70px;top:201.45px" width="10" height="10"><g fill="none" stroke="#8a8a8a" stroke-width="1.2"><ellipse cx="6.3" cy="3.7" rx="2.2" ry="1.5" transform="rotate(-45 6.3 3.7)"/><ellipse cx="3.7" cy="6.3" rx="2.2" ry="1.5" transform="rotate(-45 3.7 6.3)"/></g></svg><div class="t" style="left:285.50px;top:216.85px;height:12px;line-height:12px;font-size:7.4px;color:#3c3c3c;font-weight:normal;font-style:normal;">Line Width</div><div class="r" style="left:417.60px;top:215.45px;width:67.90px;height:13.60px;border:1px solid #c8c8c8;box-sizing:border-box;background:#fff;"></div><div class="t" style="left:422.00px;top:216.55px;height:12px;line-height:12px;font-size:7.6px;color:#333;font-weight:normal;font-style:normal;">0.35</div><div class="t" style="right:541.00px;top:216.55px;height:12px;line-height:12px;font-size:7.6px;color:#b4b4b4;font-weight:normal;font-style:normal;">mm</div><div class="t" style="left:294.80px;top:231.85px;height:12px;line-height:12px;font-size:7.4px;color:#3c3c3c;font-weight:normal;font-style:normal;">Wall Line Width</div><div class="r" style="left:417.60px;top:230.45px;width:67.90px;height:13.60px;border:1px solid #c8c8c8;box-sizing:border-box;background:#fff;"></div><div class="t" style="left:422.00px;top:231.55px;height:12px;line-height:12px;font-size:7.6px;color:#333;font-weight:normal;font-style:normal;">0.35</div><div class="t" style="right:541.00px;top:231.55px;height:12px;line-height:12px;font-size:7.6px;color:#b4b4b4;font-weight:normal;font-style:normal;">mm</div><div class="t" style="left:304.20px;top:246.85px;height:12px;line-height:12px;font-size:7.4px;color:#3c3c3c;font-weight:normal;font-style:normal;">Outer Wall Line Width</div><div class="r" style="left:417.60px;top:245.45px;width:67.90px;height:13.60px;border:1px solid #c8c8c8;box-sizing:border-box;background:#fff;"></div><div class="t" style="left:422.00px;top:246.55px;height:12px;line-height:12px;font-size:7.6px;color:#333;font-weight:normal;font-style:normal;">0.35</div><div class="t" style="right:541.00px;top:246.55px;height:12px;line-height:12px;font-size:7.6px;color:#b4b4b4;font-weight:normal;font-style:normal;">mm</div><div class="t" style="left:304.20px;top:261.85px;height:12px;line-height:12px;font-size:7.4px;color:#3c3c3c;font-weight:normal;font-style:normal;">Inner Wall(s) Line Width</div><div class="r" style="left:417.60px;top:260.45px;width:67.90px;height:13.60px;border:1px solid #c8c8c8;box-sizing:border-box;background:#fff;"></div><div class="t" style="left:422.00px;top:261.55px;height:12px;line-height:12px;font-size:7.6px;color:#333;font-weight:normal;font-style:normal;">0.3</div><div class="t" style="right:541.00px;top:261.55px;height:12px;line-height:12px;font-size:7.6px;color:#b4b4b4;font-weight:normal;font-style:normal;">mm</div><div class="t" style="left:294.80px;top:276.85px;height:12px;line-height:12px;font-size:7.4px;color:#3c3c3c;font-weight:normal;font-style:normal;">Top/Bottom Line Width</div><div class="r" style="left:417.60px;top:275.45px;width:67.90px;height:13.60px;border:1px solid #c8c8c8;box-sizing:border-box;background:#fff;"></div><div class="t" style="left:422.00px;top:276.55px;height:12px;line-height:12px;font-size:7.6px;color:#333;font-weight:normal;font-style:normal;">0.35</div><div class="t" style="right:541.00px;top:276.55px;height:12px;line-height:12px;font-size:7.6px;color:#b4b4b4;font-weight:normal;font-style:normal;">mm</div><div class="t" style="left:294.80px;top:291.85px;height:12px;line-height:12px;font-size:7.1px;color:#3c3c3c;font-weight:normal;font-style:italic;">Infill Line Width</div><div class="r" style="left:417.60px;top:290.45px;width:67.90px;height:13.60px;border:1px solid #c8c8c8;box-sizing:border-box;background:#fff;"></div><div class="t" style="left:422.00px;top:291.55px;height:12px;line-height:12px;font-size:7.6px;color:#333;font-weight:normal;font-style:normal;">0.8</div><div class="t" style="right:541.00px;top:291.55px;height:12px;line-height:12px;font-size:7.6px;color:#b4b4b4;font-weight:normal;font-style:normal;">mm</div><svg class="r" style="left:392.00px;top:290.95px" width="10" height="10"><path d="M2.1,3.6 A3.3,3.3 0 1 1 5.3,8.4" fill="none" stroke="#505050" stroke-width="1.25"/><path d="M0.6,2.2 L3.9,2.4 L2.0,5.2 Z" fill="#505050"/></svg><svg class="r" style="left:404.00px;top:290.95px" width="10" height="10"><circle cx="5" cy="5" r="4" fill="#6a6a6a"/><rect x="4.4" y="4.2" width="1.3" height="3.3" fill="#fff"/><rect x="4.4" y="2.4" width="1.3" height="1.2" fill="#fff"/></svg><div class="t" style="left:294.80px;top:306.85px;height:12px;line-height:12px;font-size:7.4px;color:#3c3c3c;font-weight:normal;font-style:normal;">Skirt/Brim Line Width</div><div class="r" style="left:417.60px;top:305.45px;width:67.90px;height:13.60px;border:1px solid #c8c8c8;box-sizing:border-box;background:#fff;"></div><div class="t" style="left:422.00px;top:306.55px;height:12px;line-height:12px;font-size:7.6px;color:#333;font-weight:normal;font-style:normal;">0.35</div><div class="t" style="right:541.00px;top:306.55px;height:12px;line-height:12px;font-size:7.6px;color:#b4b4b4;font-weight:normal;font-style:normal;">mm</div><div class="t" style="left:294.80px;top:321.85px;height:12px;line-height:12px;font-size:7.4px;color:#3c3c3c;font-weight:normal;font-style:normal;">Initial Layer Line Width</div><div class="r" style="left:417.60px;top:320.45px;width:67.90px;height:13.60px;border:1px solid #c8c8c8;box-sizing:border-box;background:#fff;"></div><div class="t" style="left:422.00px;top:321.55px;height:12px;line-height:12px;font-size:7.6px;color:#333;font-weight:normal;font-style:normal;">100.0</div><div class="t" style="right:541.00px;top:321.55px;height:12px;line-height:12px;font-size:7.6px;color:#b4b4b4;font-weight:normal;font-style:normal;">%</div><div class="r" style="left:275.00px;top:334.95px;width:210.50px;height:13.50px;background:#f3f3f3;"></div><div class="t" style="left:291.60px;top:336.30px;height:12px;line-height:12px;font-size:7.9px;color:#1d2a55;font-weight:bold;font-style:normal;">Shell</div><svg class="r" style="left:278.00px;top:337.00px" width="10" height="10"><path d="M1.6 0.8 H8.4 M3.2 0.8 V3.6 L1.2 9.2 H8.8 L6.8 3.6 V0.8" fill="none" stroke="#55607c" stroke-width="1"/></svg><svg class="r" style="left:472.00px;top:338.50px" width="7" height="7"><polyline points="4.50,1 2.25,3.50 4.50,6.00" fill="none" stroke="#1d2a55" stroke-width="1.2"/></svg><div class="r" style="left:275.00px;top:349.70px;width:210.50px;height:13.50px;background:#f3f3f3;"></div><div class="t" style="left:291.60px;top:351.05px;height:12px;line-height:12px;font-size:7.9px;color:#1d2a55;font-weight:bold;font-style:normal;">Infill</div><svg class="r" style="left:277.50px;top:351.75px" width="11" height="10"><rect x="1" y="0.8" width="8.6" height="8.4" fill="none" stroke="#5a6480" stroke-width="1" stroke-dasharray="1.6 0.8"/><circle cx="5.3" cy="5" r="2.7" fill="none" stroke="#5a6480" stroke-width="0.9" stroke-dasharray="1.2 1"/></svg><svg class="r" style="left:472.00px;top:353.25px" width="7" height="7"><polyline points="1,2.50 3.50,4.75 6.00,2.50" fill="none" stroke="#1d2a55" stroke-width="1.2"/></svg><div class="t" style="left:285.50px;top:366.35px;height:12px;line-height:12px;font-size:7.4px;color:#3c3c3c;font-weight:normal;font-style:normal;">Infill Extruder</div><div class="r" style="left:417.60px;top:364.95px;width:67.90px;height:13.60px;border:1px solid #c8c8c8;box-sizing:border-box;background:#fff;"></div><div class="t" style="left:422.00px;top:366.05px;height:12px;line-height:12px;font-size:7.6px;color:#333;font-weight:normal;font-style:normal;">Not overrid...</div><div class="r" style="left:466.00px;top:367.75px;width:8px;height:8px;border:1px solid #444;border-radius:50%;box-sizing:border-box;"></div><svg class="r" style="left:475.50px;top:368.25px" width="7" height="7"><polyline points="1,2.50 3.50,4.75 6.00,2.50" fill="none" stroke="#333" stroke-width="1.2"/></svg><svg class="r" style="left:403.70px;top:365.95px" width="10" height="10"><g fill="none" stroke="#8a8a8a" stroke-width="1.2"><ellipse cx="6.3" cy="3.7" rx="2.2" ry="1.5" transform="rotate(-45 6.3 3.7)"/><ellipse cx="3.7" cy="6.3" rx="2.2" ry="1.5" transform="rotate(-45 3.7 6.3)"/></g></svg><div class="t" style="left:285.50px;top:381.35px;height:12px;line-height:12px;font-size:7.1px;color:#3c3c3c;font-weight:normal;font-style:italic;">Infill Density</div><div class="r" style="left:417.60px;top:379.95px;width:67.90px;height:13.60px;border:1px solid #c8c8c8;box-sizing:border-box;background:#fff;"></div><div class="t" style="left:422.00px;top:381.05px;height:12px;line-height:12px;font-size:7.6px;color:#333;font-weight:normal;font-style:normal;">90</div><div class="t" style="right:541.00px;top:381.05px;height:12px;line-height:12px;font-size:7.6px;color:#b4b4b4;font-weight:normal;font-style:normal;">%</div><svg class="r" style="left:403.50px;top:380.45px" width="10" height="10"><path d="M2.1,3.6 A3.3,3.3 0 1 1 5.3,8.4" fill="none" stroke="#505050" stroke-width="1.25"/><path d="M0.6,2.2 L3.9,2.4 L2.0,5.2 Z" fill="#505050"/></svg><div class="t" style="left:294.80px;top:396.35px;height:12px;line-height:12px;font-size:7.4px;color:#3c3c3c;font-weight:normal;font-style:normal;">Infill Line Distance</div><div class="r" style="left:417.60px;top:394.95px;width:67.90px;height:13.60px;border:1px solid #c8c8c8;box-sizing:border-box;background:#fff;"></div><div class="t" style="left:422.00px;top:396.05px;height:12px;line-height:12px;font-size:7.6px;color:#333;font-weight:normal;font-style:normal;">0.8889</div><div class="t" style="right:541.00px;top:396.05px;height:12px;line-height:12px;font-size:7.6px;color:#b4b4b4;font-weight:normal;font-style:normal;">mm</div><div class="t" style="left:285.50px;top:411.35px;height:12px;line-height:12px;font-size:7.1px;color:#3c3c3c;font-weight:normal;font-style:italic;">Infill Pattern</div><div class="r" style="left:417.60px;top:409.95px;width:67.90px;height:13.60px;border:1px solid #c8c8c8;box-sizing:border-box;background:#fff;"></div><div class="t" style="left:422.00px;top:411.05px;height:12px;line-height:12px;font-size:7.6px;color:#333;font-weight:normal;font-style:normal;">Zig Zag</div><svg class="r" style="left:475.50px;top:413.25px" width="7" height="7"><polyline points="1,2.50 3.50,4.75 6.00,2.50" fill="none" stroke="#333" stroke-width="1.2"/></svg><svg class="r" style="left:403.50px;top:410.45px" width="10" height="10"><path d="M2.1,3.6 A3.3,3.3 0 1 1 5.3,8.4" fill="none" stroke="#505050" stroke-width="1.25"/><path d="M0.6,2.2 L3.9,2.4 L2.0,5.2 Z" fill="#505050"/></svg><div class="t" style="left:285.50px;top:426.35px;height:12px;line-height:12px;font-size:7.1px;color:#3c3c3c;font-weight:normal;font-style:italic;">Infill Line Directions</div><div class="r" style="left:417.60px;top:424.95px;width:67.90px;height:13.60px;border:1px solid #c8c8c8;box-sizing:border-box;background:#fff;"></div><div class="t" style="left:422.00px;top:426.05px;height:12px;line-height:12px;font-size:7.6px;color:#333;font-weight:normal;font-style:normal;">[45.0,135.0]</div><svg class="r" style="left:403.50px;top:425.45px" width="10" height="10"><path d="M2.1,3.6 A3.3,3.3 0 1 1 5.3,8.4" fill="none" stroke="#505050" stroke-width="1.25"/><path d="M0.6,2.2 L3.9,2.4 L2.0,5.2 Z" fill="#505050"/></svg><div class="t" style="left:285.50px;top:441.35px;height:12px;line-height:12px;font-size:7.4px;color:#3c3c3c;font-weight:normal;font-style:normal;">Infill Overlap Percentage</div><div class="r" style="left:417.60px;top:439.95px;width:67.90px;height:13.60px;border:1px solid #c8c8c8;box-sizing:border-box;background:#fff;"></div><div class="t" style="left:422.00px;top:441.05px;height:12px;line-height:12px;font-size:7.6px;color:#333;font-weight:normal;font-style:normal;">0</div><div class="t" style="right:541.00px;top:441.05px;height:12px;line-height:12px;font-size:7.6px;color:#b4b4b4;font-weight:normal;font-style:normal;">%</div><div class="t" style="left:294.80px;top:456.35px;height:12px;line-height:12px;font-size:7.4px;color:#3c3c3c;font-weight:normal;font-style:normal;">Infill Overlap</div><div class="r" style="left:417.60px;top:454.95px;width:67.90px;height:13.60px;border:1px solid #c8c8c8;box-sizing:border-box;background:#fff;"></div><div class="t" style="left:422.00px;top:456.05px;height:12px;line-height:12px;font-size:7.6px;color:#333;font-weight:normal;font-style:normal;">0.0</div><div class="t" style="right:541.00px;top:456.05px;height:12px;line-height:12px;font-size:7.6px;color:#b4b4b4;font-weight:normal;font-style:normal;">mm</div><div class="t" style="left:285.50px;top:471.35px;height:12px;line-height:12px;font-size:7.4px;color:#3c3c3c;font-weight:normal;font-style:normal;">Skin Overlap Percentage</div><div class="r" style="left:417.60px;top:469.95px;width:67.90px;height:13.60px;border:1px solid #c8c8c8;box-sizing:border-box;background:#fff;"></div><div class="t" style="left:422.00px;top:471.05px;height:12px;line-height:12px;font-size:7.6px;color:#333;font-weight:normal;font-style:normal;">10</div><div class="t" style="right:541.00px;top:471.05px;height:12px;line-height:12px;font-size:7.6px;color:#b4b4b4;font-weight:normal;font-style:normal;">%</div><div class="t" style="left:294.80px;top:486.35px;height:12px;line-height:12px;font-size:7.4px;color:#3c3c3c;font-weight:normal;font-style:normal;">Skin Overlap</div><div class="r" style="left:417.60px;top:484.95px;width:67.90px;height:13.60px;border:1px solid #c8c8c8;box-sizing:border-box;background:#fff;"></div><div class="t" style="left:422.00px;top:486.05px;height:12px;line-height:12px;font-size:7.6px;color:#333;font-weight:normal;font-style:normal;">0.0325</div><div class="t" style="right:541.00px;top:486.05px;height:12px;line-height:12px;font-size:7.6px;color:#b4b4b4;font-weight:normal;font-style:normal;">mm</div><div class="t" style="left:285.50px;top:501.35px;height:12px;line-height:12px;font-size:7.4px;color:#3c3c3c;font-weight:normal;font-style:normal;">Infill Wipe Distance</div><div class="r" style="left:417.60px;top:499.95px;width:67.90px;height:13.60px;border:1px solid #c8c8c8;box-sizing:border-box;background:#fff;"></div><div class="t" style="left:422.00px;top:501.05px;height:12px;line-height:12px;font-size:7.6px;color:#333;font-weight:normal;font-style:normal;">0</div><div class="t" style="right:541.00px;top:501.05px;height:12px;line-height:12px;font-size:7.6px;color:#b4b4b4;font-weight:normal;font-style:normal;">mm</div><div class="t" style="left:285.50px;top:516.35px;height:12px;line-height:12px;font-size:7.4px;color:#3c3c3c;font-weight:normal;font-style:normal;">Infill Layer Thickness</div><div class="r" style="left:417.60px;top:514.95px;width:67.90px;height:13.60px;border:1px solid #c8c8c8;box-sizing:border-box;background:#fff;"></div><div class="t" style="left:422.00px;top:516.05px;height:12px;line-height:12px;font-size:7.6px;color:#333;font-weight:normal;font-style:normal;">0.1</div><div class="t" style="right:541.00px;top:516.05px;height:12px;line-height:12px;font-size:7.6px;color:#b4b4b4;font-weight:normal;font-style:normal;">mm</div></div></div><div class="r" style="left:263.50px;top:440.00px;width:233.50px;height:2.00px;background:#f0f0f0;"></div><div class="r" style="left:491.40px;top:170.00px;width:4.40px;height:106.30px;background:#1c2541;border-radius:2.2px;"></div><svg class="r" style="left:497px;top:0" width="300" height="452" viewBox="497 0 300 452"><defs><pattern id="gR" patternUnits="userSpaceOnUse" x="622" y="12" width="7.8" height="6.5"><rect width="7.8" height="6.5" fill="#f2f2f2"/><rect width="0.8" height="6.5" fill="#e6e6e6"/><rect width="7.8" height="0.8" fill="#e6e6e6"/></pattern><linearGradient id="ygR" x1="0" y1="0" x2="0" y2="1"><stop offset="0" stop-color="#8c7400"/><stop offset="0.05" stop-color="#3e3300"/><stop offset="0.11" stop-color="#807010"/><stop offset="0.17" stop-color="#3e3300"/><stop offset="0.24" stop-color="#8c7400"/><stop offset="0.32" stop-color="#ecd000"/><stop offset="0.52" stop-color="#fff230"/><stop offset="0.75" stop-color="#ffec18"/><stop offset="0.92" stop-color="#e4c800"/><stop offset="1" stop-color="#8c7400"/></linearGradient><pattern id="stR" patternUnits="userSpaceOnUse" width="20" height="8.4" patternTransform="translate(3 0) rotate(-43)"><rect width="20" height="8.4" fill="url(#ygR)"/></pattern><linearGradient id="wallR" x1="0" y1="0" x2="1" y2="0"><stop offset="0" stop-color="#7a6000"/><stop offset="0.2" stop-color="#c09a00"/><stop offset="0.55" stop-color="#d4ac00"/><stop offset="1" stop-color="#b89400"/></linearGradient><clipPath id="obj0R"><circle cx="710.8" cy="275.2" r="216"/><rect x="447" y="275.2" width="400" height="186.8"/></clipPath><clipPath id="objR" clip-path="url(#obj0R)"><polygon points="397,-80.5 897,125.1 897,500 397,500"/></clipPath><clipPath id="infR"><path d="M480.00,358.00 C483.57,352.10 494.90,334.43 501.40,322.60 C507.90,310.77 512.37,300.27 519.00,287.00 C525.63,273.73 533.80,257.72 541.20,243.00 C548.60,228.28 555.83,212.20 563.40,198.70 C570.97,185.20 580.50,169.78 586.60,162.00 C592.70,154.22 594.43,156.42 600.00,152.00 C605.57,147.58 613.33,140.67 620.00,135.50 C626.67,130.33 632.12,126.25 640.00,121.00 C647.88,115.75 657.30,108.83 667.30,104.00 C677.30,99.17 687.05,92.67 700.00,92.00 C712.95,91.33 732.50,95.17 745.00,100.00 C757.50,104.83 766.83,114.73 775.00,121.00 C783.17,127.27 784.83,128.60 794.00,137.60 C803.17,146.60 824.00,168.77 830.00,175.00 L897,175 L897,500 L397,500 L397,358 Z"/></clipPath><filter id="blR" x="-5%" y="-5%" width="110%" height="110%"><feGaussianBlur stdDeviation="0.75"/></filter></defs><rect x="497" y="0" width="300" height="452" fill="url(#gR)"/><line x1="544.7" y1="0" x2="509" y2="452" stroke="#c4c4c4" stroke-width="1.2"/><line x1="622.6" y1="0" x2="611.8" y2="452" stroke="#c4c4c4" stroke-width="1.2"/><line x1="524" y1="11" x2="797" y2="14.5" stroke="#c4c4c4" stroke-width="1.2"/><line x1="524" y1="77.4" x2="797" y2="80.5" stroke="#c4c4c4" stroke-width="1.2"/><g clip-path="url(#objR)"><rect x="492" y="0" width="310" height="452" fill="#ffe81c"/><path d="M507.5,348.1 L506.2,344.6 L505.1,341.0 L503.9,337.4 L502.9,333.7 L501.9,330.1 L501.0,326.4 L500.1,322.7 L499.3,319.0 L498.6,315.3 L497.9,311.6 L497.3,307.8 L496.7,304.1 L496.3,300.3 L495.9,296.6 L495.5,292.8 L495.2,289.0 L495.0,285.2 L494.9,281.4 L494.8,277.7 L494.8,273.9 L494.9,270.1 L495.0,266.3 L495.2,262.5 L495.4,258.7 L495.7,255.0 L496.1,251.2 L496.6,247.5 L497.1,243.7 L497.7,240.0 L498.3,236.2 L499.1,232.5 L499.8,228.8 L500.7,225.1 L501.6,221.4 L502.6,217.8 L503.6,214.1 L504.7,210.5 L505.9,206.9 L507.1,203.3 L508.4,199.8 L509.7,196.2 L511.2,192.7 L512.6,189.2 L514.2,185.8 L515.8,182.4 L517.4,178.9 L519.1,175.6 L520.9,172.2 L522.8,168.9 L524.6,165.6 L526.6,162.4 L528.6,159.2 L530.7,156.0 L532.8,152.9 L535.0,149.8 L537.2,146.7 L539.5,143.7 L541.8,140.7 L544.2,137.8 L546.6,134.9 L549.1,132.0 L551.6,129.2 L554.2,126.4 L556.8,123.7 L559.5,121.0 L562.2,118.4 L565.0,115.8 L567.8,113.3 L570.7,110.8 L573.6,108.4 L576.5,106.0 L579.5,103.7 L582.6,101.4 L585.6,99.2 L588.7,97.0 L591.9,94.9 L595.0,92.8 L598.3,90.8 L601.5,88.9 L604.8,87.0 L608.1,85.2 L611.5,83.4 L614.8,81.7 L618.2,80.0 L621.7,78.4 L625.1,76.9 L628.6,75.4 L632.1,74.0 L635.7,72.7 L639.2,71.4 L642.8,70.2 L646.4,69.0 L650.0,67.9 L653.7,66.9 L657.4,65.9 L661.0,65.0 L664.7,64.2 L668.4,63.4 L672.1,62.7 L675.9,62.0 L679.6,61.5 L683.4,60.9 L687.1,60.5 L690.9,60.1 L694.7,59.8 L698.4,59.6 L702.2,59.4 L706.0,59.3 L709.8,59.2 L713.6,59.2 L717.4,59.3 L721.2,59.4 L724.9,59.7 L728.7,59.9 L732.5,60.3 L736.2,60.7 L740.0,61.2 L743.7,61.7 L747.5,62.3 L751.2,63.0 L754.9,63.8 L758.6,64.6 L762.3,65.4 L766.0,66.4 L769.6,67.4 L773.3,68.4 L776.9,69.6 L780.5,70.7 L784.0,72.0 L787.6,73.3 L791.1,74.7 L794.6,76.1 L798.1,77.6 L801.5,79.2 L805.0,80.8 L808.4,82.5 L811.7,84.2 L815.1,86.0 L818.4,87.9 L821.6,89.8 L824.9,91.8 L828.1,93.8 L831.2,95.9 L834.3,98.0 L837.4,100.2 L840.5,102.5 L843.5,104.8 L846.4,107.1 L849.4,109.5 L852.3,112.0 L855.1,114.5 L857.9,117.0 L860.6,119.6 L863.3,122.3 L866.0,125.0 L868.6,127.7 L871.2,130.5 L873.7,133.3 L876.1,136.2" fill="none" stroke="#332a00" stroke-width="0.7"/><path d="M506.1,348.6 L505.1,344.9 L504.2,341.3 L503.3,337.6 L502.4,333.9 L501.6,330.1 L500.9,326.4 L500.2,322.7 L499.5,319.0 L498.9,315.2 L498.4,311.5 L497.9,307.7 L497.5,304.0 L497.1,300.2 L496.8,296.5 L496.6,292.7 L496.4,288.9 L496.3,285.2 L496.3,281.4 L496.3,277.6 L496.3,273.9 L496.5,270.1 L496.7,266.4 L496.9,262.6 L497.2,258.9 L497.6,255.2 L498.1,251.4 L498.6,247.7 L499.1,244.0 L499.8,240.3 L500.5,236.6 L501.2,232.9 L502.0,229.3 L502.9,225.6 L503.8,222.0 L504.8,218.4 L505.9,214.8 L507.0,211.2 L508.2,207.7 L509.4,204.1 L510.7,200.6 L512.0,197.1 L513.4,193.7 L514.9,190.2 L516.4,186.8 L518.0,183.4 L519.7,180.1 L521.4,176.7 L523.1,173.4 L524.9,170.1 L526.8,166.9 L528.7,163.7 L530.7,160.5 L532.7,157.4 L534.8,154.3 L537.0,151.2 L539.2,148.2 L541.4,145.2 L543.7,142.2 L546.1,139.3 L548.4,136.4 L550.9,133.6 L553.4,130.8 L555.9,128.1 L558.6,125.4 L561.2,122.8 L564.0,120.2 L566.7,117.7 L569.5,115.2 L572.3,112.7 L575.2,110.3 L578.1,108.0 L581.1,105.7 L584.0,103.4 L587.1,101.2 L590.1,99.1 L593.2,97.0 L596.4,94.9 L599.5,92.9 L602.7,91.0 L606.0,89.1 L609.2,87.3 L612.5,85.5 L615.9,83.8 L619.2,82.1 L622.6,80.5 L626.0,79.0 L629.5,77.5 L632.9,76.1 L636.4,74.7 L640.0,73.4 L643.5,72.2 L647.0,71.0 L650.6,69.9 L654.2,68.8 L657.8,67.8 L661.5,66.9 L665.1,66.0 L668.8,65.2 L672.5,64.5 L676.2,63.8 L679.9,63.2 L683.6,62.6 L687.3,62.2 L691.0,61.8 L694.8,61.4 L698.5,61.2 L702.3,61.0 L706.0,60.9 L709.8,60.9 L713.6,60.9 L717.3,61.0 L721.1,61.1 L724.8,61.4 L728.6,61.7 L732.3,62.0 L736.0,62.5 L739.8,63.0 L743.5,63.5 L747.2,64.2 L750.9,64.8 L754.5,65.6 L758.2,66.4 L761.8,67.4 L765.5,68.3 L769.1,69.4 L772.6,70.5 L776.2,71.6 L779.7,72.9 L783.3,74.2 L786.7,75.5 L790.2,76.9 L793.7,78.4 L797.1,79.9 L800.5,81.5 L803.8,83.1 L807.2,84.8 L810.5,86.6 L813.8,88.4 L817.0,90.2 L820.2,92.2 L823.4,94.1 L826.5,96.2 L829.6,98.2 L832.7,100.4 L835.7,102.6 L838.7,104.8 L841.7,107.1 L844.6,109.4 L847.5,111.8 L850.3,114.2 L853.1,116.7 L855.8,119.2 L858.5,121.8 L861.2,124.4 L863.8,127.1 L866.4,129.8 L868.9,132.5 L871.4,135.3 L873.8,138.2" fill="none" stroke="#332a00" stroke-width="0.7"/><path d="M504.7,349.1 L504.0,345.3 L503.2,341.5 L502.6,337.8 L501.9,334.0 L501.3,330.2 L500.8,326.4 L500.2,322.7 L499.7,318.9 L499.3,315.2 L498.9,311.4 L498.5,307.6 L498.2,303.9 L498.0,300.1 L497.8,296.4 L497.7,292.6 L497.6,288.9 L497.6,285.1 L497.6,281.4 L497.7,277.6 L497.9,273.9 L498.1,270.2 L498.4,266.4 L498.7,262.7 L499.1,259.0 L499.5,255.3 L500.0,251.6 L500.6,248.0 L501.2,244.3 L501.9,240.6 L502.6,237.0 L503.4,233.4 L504.2,229.8 L505.1,226.2 L506.1,222.6 L507.1,219.0 L508.1,215.5 L509.3,211.9 L510.4,208.4 L511.7,204.9 L513.0,201.5 L514.3,198.0 L515.7,194.6 L517.2,191.2 L518.7,187.8 L520.3,184.5 L521.9,181.2 L523.6,177.9 L525.3,174.6 L527.1,171.4 L529.0,168.2 L530.9,165.0 L532.8,161.9 L534.8,158.8 L536.9,155.7 L539.0,152.6 L541.2,149.6 L543.4,146.7 L545.6,143.7 L547.9,140.9 L550.3,138.0 L552.7,135.2 L555.2,132.4 L557.7,129.7 L560.3,127.1 L562.9,124.5 L565.7,122.0 L568.4,119.5 L571.2,117.1 L574.0,114.6 L576.8,112.3 L579.7,109.9 L582.6,107.7 L585.5,105.4 L588.5,103.2 L591.5,101.1 L594.6,99.0 L597.7,97.0 L600.8,95.0 L604.0,93.1 L607.2,91.2 L610.4,89.4 L613.6,87.6 L616.9,85.9 L620.2,84.3 L623.6,82.7 L626.9,81.1 L630.3,79.6 L633.8,78.2 L637.2,76.8 L640.7,75.5 L644.2,74.2 L647.7,73.0 L651.2,71.8 L654.8,70.8 L658.3,69.7 L661.9,68.8 L665.5,67.9 L669.2,67.0 L672.8,66.2 L676.4,65.5 L680.1,64.9 L683.8,64.3 L687.5,63.8 L691.2,63.4 L694.9,63.0 L698.6,62.8 L702.4,62.6 L706.1,62.5 L709.8,62.5 L713.5,62.5 L717.3,62.7 L721.0,62.8 L724.7,63.1 L728.4,63.4 L732.1,63.8 L735.8,64.2 L739.5,64.7 L743.2,65.3 L746.9,66.0 L750.5,66.7 L754.1,67.5 L757.8,68.3 L761.4,69.3 L764.9,70.3 L768.5,71.4 L772.0,72.5 L775.5,73.7 L779.0,75.0 L782.5,76.3 L785.9,77.7 L789.3,79.2 L792.7,80.7 L796.1,82.2 L799.4,83.8 L802.7,85.4 L806.0,87.1 L809.3,88.9 L812.5,90.7 L815.6,92.6 L818.8,94.5 L821.9,96.5 L825.0,98.5 L828.0,100.6 L831.1,102.7 L834.0,104.9 L837.0,107.1 L839.9,109.4 L842.7,111.7 L845.5,114.1 L848.3,116.5 L851.1,118.9 L853.8,121.4 L856.4,124.0 L859.1,126.6 L861.6,129.2 L864.2,131.8 L866.7,134.6 L869.1,137.3 L871.5,140.1" fill="none" stroke="#332a00" stroke-width="0.7"/><path d="M503.4,349.6 L502.8,345.7 L502.3,341.8 L501.9,338.0 L501.4,334.1 L501.0,330.3 L500.7,326.5 L500.3,322.7 L500.0,318.9 L499.7,315.1 L499.4,311.3 L499.2,307.5 L499.0,303.8 L498.9,300.0 L498.8,296.3 L498.7,292.5 L498.8,288.8 L498.8,285.1 L499.0,281.3 L499.2,277.6 L499.4,273.9 L499.7,270.2 L500.0,266.5 L500.4,262.8 L500.9,259.2 L501.4,255.5 L501.9,251.9 L502.6,248.2 L503.2,244.6 L503.9,241.0 L504.7,237.4 L505.5,233.8 L506.4,230.2 L507.3,226.7 L508.3,223.2 L509.3,219.6 L510.4,216.1 L511.5,212.7 L512.7,209.2 L513.9,205.8 L515.2,202.3 L516.6,198.9 L518.0,195.5 L519.4,192.2 L520.9,188.9 L522.5,185.6 L524.1,182.3 L525.8,179.0 L527.5,175.8 L529.3,172.6 L531.1,169.4 L533.0,166.3 L534.9,163.2 L536.9,160.1 L538.9,157.1 L541.0,154.1 L543.1,151.1 L545.3,148.2 L547.5,145.3 L549.8,142.4 L552.1,139.6 L554.5,136.8 L556.9,134.0 L559.4,131.4 L562.0,128.7 L564.6,126.2 L567.4,123.8 L570.1,121.4 L572.8,118.9 L575.6,116.6 L578.4,114.2 L581.2,111.9 L584.1,109.7 L587.0,107.4 L590.0,105.3 L592.9,103.2 L596.0,101.1 L599.0,99.1 L602.1,97.1 L605.2,95.2 L608.3,93.3 L611.5,91.5 L614.7,89.7 L618.0,88.0 L621.2,86.4 L624.5,84.8 L627.9,83.2 L631.2,81.7 L634.6,80.2 L638.0,78.8 L641.4,77.5 L644.8,76.2 L648.3,75.0 L651.8,73.8 L655.3,72.7 L658.8,71.6 L662.4,70.7 L665.9,69.7 L669.5,68.8 L673.1,68.0 L676.7,67.3 L680.4,66.6 L684.0,66.0 L687.7,65.5 L691.3,65.0 L695.0,64.7 L698.7,64.4 L702.4,64.3 L706.1,64.2 L709.8,64.2 L713.5,64.2 L717.2,64.3 L720.9,64.5 L724.6,64.8 L728.3,65.1 L731.9,65.5 L735.6,66.0 L739.3,66.5 L742.9,67.1 L746.5,67.8 L750.2,68.5 L753.8,69.3 L757.3,70.2 L760.9,71.2 L764.4,72.2 L767.9,73.4 L771.4,74.6 L774.9,75.8 L778.3,77.2 L781.7,78.5 L785.1,79.9 L788.4,81.4 L791.8,82.9 L795.1,84.5 L798.4,86.1 L801.6,87.7 L804.8,89.5 L808.0,91.2 L811.2,93.1 L814.3,94.9 L817.4,96.9 L820.4,98.9 L823.5,100.9 L826.5,103.0 L829.4,105.1 L832.3,107.3 L835.2,109.5 L838.1,111.7 L840.9,114.0 L843.6,116.4 L846.4,118.7 L849.1,121.2 L851.7,123.6 L854.4,126.2 L856.9,128.7 L859.5,131.3 L862.0,133.9 L864.4,136.6 L866.8,139.3 L869.2,142.0" fill="none" stroke="#332a00" stroke-width="0.7"/><path d="M502.0,350.1 L501.7,346.1 L501.4,342.1 L501.2,338.2 L501.0,334.3 L500.8,330.4 L500.6,326.5 L500.4,322.6 L500.2,318.8 L500.0,315.0 L499.9,311.2 L499.8,307.4 L499.7,303.7 L499.7,299.9 L499.7,296.2 L499.8,292.4 L499.9,288.7 L500.1,285.0 L500.3,281.3 L500.6,277.6 L500.9,273.9 L501.3,270.2 L501.7,266.6 L502.2,262.9 L502.7,259.3 L503.3,255.7 L503.9,252.1 L504.5,248.5 L505.3,244.9 L506.0,241.3 L506.8,237.8 L507.7,234.2 L508.6,230.7 L509.5,227.2 L510.5,223.7 L511.6,220.3 L512.6,216.8 L513.8,213.4 L515.0,210.0 L516.2,206.6 L517.5,203.2 L518.9,199.8 L520.3,196.5 L521.7,193.2 L523.2,189.9 L524.8,186.6 L526.4,183.4 L528.0,180.2 L529.7,177.0 L531.5,173.8 L533.3,170.7 L535.1,167.6 L537.0,164.5 L539.0,161.5 L541.0,158.5 L543.0,155.5 L545.1,152.6 L547.3,149.7 L549.4,146.8 L551.7,143.9 L554.0,141.1 L556.3,138.4 L558.7,135.7 L561.1,133.0 L563.7,130.4 L566.3,128.0 L569.1,125.6 L571.8,123.2 L574.5,120.8 L577.2,118.5 L580.0,116.2 L582.8,113.9 L585.6,111.7 L588.5,109.5 L591.4,107.3 L594.3,105.2 L597.3,103.2 L600.3,101.1 L603.4,99.2 L606.4,97.3 L609.5,95.4 L612.7,93.6 L615.8,91.8 L619.0,90.1 L622.2,88.5 L625.5,86.9 L628.8,85.3 L632.1,83.8 L635.4,82.3 L638.7,80.9 L642.1,79.5 L645.5,78.2 L648.9,76.9 L652.3,75.7 L655.8,74.6 L659.3,73.6 L662.8,72.5 L666.3,71.6 L669.9,70.7 L673.4,69.8 L677.0,69.0 L680.6,68.3 L684.2,67.6 L687.9,67.1 L691.5,66.6 L695.2,66.3 L698.8,66.0 L702.5,65.9 L706.2,65.8 L709.8,65.8 L713.5,65.9 L717.2,66.0 L720.8,66.2 L724.5,66.5 L728.1,66.9 L731.8,67.3 L735.4,67.8 L739.0,68.3 L742.6,68.9 L746.2,69.6 L749.8,70.4 L753.4,71.2 L756.9,72.1 L760.4,73.1 L763.9,74.2 L767.4,75.4 L770.8,76.6 L774.2,77.9 L777.6,79.3 L780.9,80.7 L784.2,82.2 L787.5,83.7 L790.8,85.2 L794.1,86.8 L797.3,88.4 L800.5,90.0 L803.7,91.8 L806.8,93.6 L809.9,95.4 L812.9,97.3 L816.0,99.2 L819.0,101.2 L821.9,103.3 L824.9,105.3 L827.8,107.4 L830.6,109.6 L833.5,111.8 L836.2,114.0 L839.0,116.3 L841.7,118.6 L844.4,121.0 L847.1,123.4 L849.7,125.8 L852.3,128.3 L854.8,130.8 L857.3,133.4 L859.8,136.0 L862.2,138.6 L864.6,141.3 L866.9,144.0" fill="none" stroke="#332a00" stroke-width="0.7"/><path d="M500.6,350.6 L500.6,346.5 L500.5,342.4 L500.5,338.4 L500.5,334.4 L500.5,330.4 L500.5,326.5 L500.4,322.6 L500.4,318.8 L500.4,314.9 L500.4,311.1 L500.4,307.3 L500.5,303.6 L500.6,299.8 L500.7,296.1 L500.9,292.4 L501.1,288.6 L501.4,284.9 L501.7,281.3 L502.1,277.6 L502.5,273.9 L502.9,270.3 L503.4,266.7 L504.0,263.0 L504.5,259.4 L505.2,255.9 L505.8,252.3 L506.5,248.7 L507.3,245.2 L508.1,241.7 L508.9,238.2 L509.8,234.7 L510.8,231.2 L511.7,227.7 L512.7,224.3 L513.8,220.9 L514.9,217.5 L516.1,214.1 L517.3,210.7 L518.5,207.4 L519.8,204.0 L521.1,200.7 L522.5,197.4 L524.0,194.2 L525.5,190.9 L527.0,187.7 L528.6,184.5 L530.2,181.3 L531.9,178.2 L533.7,175.1 L535.4,172.0 L537.3,168.9 L539.1,165.9 L541.1,162.9 L543.0,159.9 L545.0,157.0 L547.1,154.0 L549.2,151.2 L551.4,148.3 L553.6,145.5 L555.8,142.7 L558.1,140.0 L560.5,137.3 L562.9,134.6 L565.4,132.1 L568.0,129.7 L570.8,127.4 L573.5,125.1 L576.2,122.7 L578.9,120.4 L581.6,118.1 L584.4,115.9 L587.2,113.6 L590.0,111.5 L592.9,109.3 L595.8,107.3 L598.7,105.2 L601.6,103.2 L604.6,101.3 L607.7,99.4 L610.7,97.5 L613.8,95.7 L616.9,93.9 L620.1,92.2 L623.2,90.6 L626.4,89.0 L629.7,87.4 L632.9,85.9 L636.2,84.4 L639.5,82.9 L642.8,81.5 L646.1,80.2 L649.5,78.9 L652.9,77.7 L656.3,76.5 L659.8,75.5 L663.3,74.4 L666.7,73.4 L670.2,72.5 L673.8,71.6 L677.3,70.7 L680.9,70.0 L684.4,69.3 L688.0,68.8 L691.7,68.3 L695.3,67.9 L698.9,67.7 L702.6,67.5 L706.2,67.4 L709.8,67.5 L713.5,67.5 L717.1,67.7 L720.7,67.9 L724.4,68.2 L728.0,68.6 L731.6,69.0 L735.2,69.5 L738.8,70.1 L742.4,70.7 L745.9,71.4 L749.5,72.2 L753.0,73.0 L756.5,74.0 L759.9,75.0 L763.4,76.2 L766.8,77.4 L770.2,78.7 L773.5,80.0 L776.8,81.4 L780.1,82.9 L783.4,84.4 L786.6,85.9 L789.9,87.4 L793.1,89.0 L796.2,90.7 L799.4,92.3 L802.5,94.1 L805.6,95.9 L808.6,97.8 L811.6,99.7 L814.6,101.6 L817.5,103.6 L820.4,105.6 L823.3,107.7 L826.1,109.8 L828.9,111.9 L831.7,114.1 L834.4,116.4 L837.1,118.6 L839.8,120.9 L842.5,123.3 L845.1,125.6 L847.6,128.1 L850.2,130.5 L852.7,133.0 L855.1,135.5 L857.5,138.1 L859.9,140.6 L862.3,143.3 L864.6,145.9" fill="none" stroke="#332a00" stroke-width="0.7"/><path d="M499.2,351.1 L499.4,346.9 L499.6,342.7 L499.8,338.6 L500.0,334.5 L500.2,330.5 L500.4,326.5 L500.5,322.6 L500.7,318.7 L500.8,314.9 L500.9,311.0 L501.1,307.3 L501.2,303.5 L501.4,299.7 L501.7,296.0 L502.0,292.3 L502.3,288.6 L502.7,284.9 L503.1,281.2 L503.5,277.6 L504.0,273.9 L504.5,270.3 L505.1,266.7 L505.7,263.1 L506.4,259.6 L507.0,256.0 L507.8,252.5 L508.5,249.0 L509.3,245.5 L510.2,242.0 L511.0,238.6 L512.0,235.1 L512.9,231.7 L513.9,228.3 L515.0,224.9 L516.0,221.5 L517.2,218.1 L518.3,214.8 L519.5,211.5 L520.8,208.2 L522.1,204.9 L523.4,201.6 L524.8,198.4 L526.2,195.1 L527.7,191.9 L529.2,188.8 L530.8,185.6 L532.4,182.5 L534.1,179.4 L535.8,176.3 L537.6,173.3 L539.4,170.2 L541.2,167.2 L543.1,164.3 L545.1,161.3 L547.1,158.4 L549.1,155.5 L551.2,152.7 L553.3,149.8 L555.4,147.0 L557.6,144.3 L559.9,141.6 L562.2,138.9 L564.6,136.3 L567.1,133.8 L569.7,131.4 L572.5,129.2 L575.2,126.9 L577.8,124.6 L580.5,122.3 L583.2,120.1 L585.9,117.8 L588.7,115.6 L591.5,113.5 L594.3,111.4 L597.2,109.3 L600.0,107.3 L603.0,105.3 L605.9,103.4 L608.9,101.5 L611.9,99.6 L614.9,97.8 L618.0,96.1 L621.1,94.3 L624.2,92.7 L627.4,91.1 L630.6,89.5 L633.8,87.9 L637.0,86.4 L640.2,85.0 L643.5,83.6 L646.8,82.2 L650.1,80.9 L653.5,79.7 L656.9,78.5 L660.3,77.4 L663.7,76.3 L667.1,75.3 L670.6,74.3 L674.1,73.4 L677.6,72.5 L681.1,71.7 L684.7,71.0 L688.2,70.4 L691.8,69.9 L695.4,69.5 L699.0,69.3 L702.6,69.1 L706.2,69.1 L709.8,69.1 L713.5,69.2 L717.1,69.4 L720.7,69.6 L724.3,69.9 L727.8,70.3 L731.4,70.8 L735.0,71.3 L738.5,71.9 L742.1,72.5 L745.6,73.2 L749.1,74.0 L752.6,74.9 L756.0,75.9 L759.5,77.0 L762.9,78.1 L766.2,79.4 L769.5,80.7 L772.8,82.1 L776.1,83.6 L779.3,85.1 L782.5,86.6 L785.7,88.1 L788.9,89.7 L792.0,91.3 L795.2,93.0 L798.3,94.7 L801.3,96.4 L804.3,98.2 L807.3,100.1 L810.2,102.0 L813.2,104.0 L816.0,105.9 L818.9,108.0 L821.7,110.0 L824.5,112.2 L827.2,114.3 L829.9,116.5 L832.6,118.7 L835.3,120.9 L837.9,123.2 L840.5,125.5 L843.1,127.9 L845.6,130.3 L848.1,132.7 L850.5,135.1 L852.9,137.6 L855.3,140.1 L857.7,142.7 L860.0,145.2 L862.3,147.8" fill="none" stroke="#332a00" stroke-width="0.7"/><path d="M497.9,351.6 L498.3,347.3 L498.7,343.0 L499.1,338.8 L499.5,334.7 L499.9,330.6 L500.3,326.6 L500.6,322.6 L500.9,318.7 L501.1,314.8 L501.4,311.0 L501.7,307.2 L502.0,303.4 L502.3,299.6 L502.6,295.9 L503.0,292.2 L503.5,288.5 L503.9,284.8 L504.4,281.2 L505.0,277.5 L505.5,273.9 L506.2,270.4 L506.8,266.8 L507.5,263.2 L508.2,259.7 L508.9,256.2 L509.7,252.7 L510.5,249.3 L511.4,245.8 L512.2,242.4 L513.2,239.0 L514.1,235.6 L515.1,232.2 L516.1,228.8 L517.2,225.5 L518.3,222.1 L519.4,218.8 L520.6,215.5 L521.8,212.2 L523.1,209.0 L524.4,205.7 L525.7,202.5 L527.1,199.3 L528.5,196.1 L530.0,193.0 L531.5,189.8 L533.0,186.7 L534.7,183.6 L536.3,180.6 L538.0,177.5 L539.7,174.5 L541.5,171.5 L543.4,168.6 L545.2,165.6 L547.1,162.7 L549.1,159.8 L551.1,157.0 L553.1,154.2 L555.2,151.4 L557.3,148.6 L559.5,145.9 L561.7,143.2 L564.0,140.5 L566.3,137.9 L568.8,135.5 L571.4,133.2 L574.2,131.0 L576.9,128.8 L579.5,126.5 L582.2,124.2 L584.8,122.0 L587.5,119.8 L590.2,117.6 L593.0,115.5 L595.8,113.4 L598.6,111.4 L601.4,109.3 L604.3,107.4 L607.2,105.5 L610.1,103.6 L613.1,101.7 L616.1,99.9 L619.1,98.2 L622.2,96.5 L625.2,94.8 L628.3,93.2 L631.5,91.6 L634.6,90.0 L637.8,88.5 L641.0,87.0 L644.2,85.6 L647.5,84.2 L650.8,82.9 L654.1,81.6 L657.4,80.4 L660.8,79.3 L664.2,78.2 L667.6,77.1 L671.0,76.1 L674.4,75.1 L677.9,74.2 L681.4,73.4 L684.9,72.7 L688.4,72.0 L692.0,71.5 L695.5,71.2 L699.1,70.9 L702.7,70.8 L706.3,70.7 L709.9,70.8 L713.4,70.9 L717.0,71.1 L720.6,71.3 L724.1,71.7 L727.7,72.1 L731.2,72.5 L734.8,73.0 L738.3,73.6 L741.8,74.3 L745.3,75.0 L748.8,75.9 L752.2,76.8 L755.6,77.8 L759.0,78.9 L762.3,80.1 L765.7,81.4 L768.9,82.8 L772.2,84.2 L775.4,85.7 L778.5,87.2 L781.7,88.8 L784.8,90.4 L787.9,92.0 L791.0,93.6 L794.1,95.3 L797.1,97.0 L800.1,98.7 L803.1,100.6 L806.0,102.4 L808.9,104.4 L811.7,106.3 L814.6,108.3 L817.4,110.3 L820.1,112.4 L822.8,114.5 L825.5,116.6 L828.2,118.8 L830.8,121.0 L833.4,123.2 L836.0,125.5 L838.5,127.8 L841.0,130.1 L843.5,132.5 L846.0,134.9 L848.4,137.3 L850.8,139.7 L853.1,142.2 L855.4,144.7 L857.7,147.2 L860.0,149.8" fill="none" stroke="#332a00" stroke-width="0.7"/><path d="M496.5,352.1 L497.2,347.6 L497.8,343.3 L498.5,339.0 L499.1,334.8 L499.6,330.7 L500.2,326.6 L500.7,322.6 L501.1,318.6 L501.5,314.7 L501.9,310.9 L502.3,307.1 L502.7,303.3 L503.2,299.5 L503.6,295.8 L504.1,292.1 L504.6,288.4 L505.2,284.8 L505.8,281.1 L506.4,277.5 L507.1,274.0 L507.8,270.4 L508.5,266.9 L509.2,263.4 L510.0,259.9 L510.8,256.4 L511.6,252.9 L512.5,249.5 L513.4,246.1 L514.3,242.7 L515.3,239.3 L516.3,236.0 L517.3,232.6 L518.3,229.3 L519.4,226.0 L520.5,222.7 L521.7,219.5 L522.9,216.2 L524.1,213.0 L525.3,209.8 L526.6,206.6 L528.0,203.4 L529.3,200.2 L530.8,197.1 L532.2,194.0 L533.7,190.9 L535.3,187.8 L536.9,184.8 L538.5,181.8 L540.2,178.8 L541.9,175.8 L543.7,172.8 L545.5,169.9 L547.3,167.0 L549.2,164.1 L551.1,161.3 L553.1,158.5 L555.1,155.7 L557.1,152.9 L559.2,150.1 L561.3,147.4 L563.5,144.8 L565.8,142.1 L568.1,139.6 L570.5,137.1 L573.1,134.9 L575.9,132.8 L578.6,130.6 L581.2,128.4 L583.8,126.2 L586.4,124.0 L589.1,121.8 L591.8,119.6 L594.5,117.5 L597.2,115.4 L600.0,113.4 L602.8,111.4 L605.6,109.5 L608.5,107.5 L611.4,105.7 L614.3,103.8 L617.2,102.0 L620.2,100.3 L623.2,98.6 L626.2,96.9 L629.3,95.3 L632.4,93.7 L635.5,92.1 L638.6,90.6 L641.8,89.1 L644.9,87.6 L648.1,86.2 L651.4,84.9 L654.6,83.6 L657.9,82.3 L661.3,81.2 L664.6,80.1 L668.0,79.0 L671.3,77.9 L674.7,76.9 L678.2,76.0 L681.6,75.1 L685.1,74.3 L688.6,73.7 L692.1,73.2 L695.6,72.8 L699.2,72.5 L702.7,72.4 L706.3,72.4 L709.9,72.4 L713.4,72.5 L717.0,72.7 L720.5,73.0 L724.0,73.4 L727.6,73.8 L731.1,74.3 L734.6,74.8 L738.1,75.4 L741.5,76.1 L745.0,76.9 L748.4,77.7 L751.8,78.6 L755.2,79.7 L758.5,80.8 L761.8,82.1 L765.1,83.4 L768.3,84.8 L771.5,86.3 L774.6,87.8 L777.8,89.4 L780.9,91.0 L783.9,92.6 L787.0,94.2 L790.0,95.9 L793.0,97.6 L796.0,99.3 L799.0,101.1 L801.9,102.9 L804.7,104.8 L807.5,106.7 L810.3,108.7 L813.1,110.7 L815.8,112.7 L818.5,114.8 L821.2,116.9 L823.8,119.0 L826.4,121.1 L829.0,123.3 L831.6,125.5 L834.1,127.8 L836.6,130.1 L839.0,132.4 L841.5,134.7 L843.9,137.0 L846.2,139.4 L848.6,141.8 L850.9,144.3 L853.2,146.7 L855.5,149.2 L857.7,151.7" fill="none" stroke="#332a00" stroke-width="0.7"/><path d="M495.1,352.6 L496.0,348.0 L496.9,343.6 L497.8,339.2 L498.6,334.9 L499.4,330.7 L500.1,326.6 L500.7,322.6 L501.3,318.6 L501.9,314.7 L502.4,310.8 L502.9,307.0 L503.5,303.2 L504.0,299.4 L504.6,295.7 L505.2,292.0 L505.8,288.3 L506.5,284.7 L507.2,281.1 L507.9,277.5 L508.6,274.0 L509.4,270.4 L510.2,266.9 L511.0,263.5 L511.8,260.0 L512.7,256.6 L513.6,253.2 L514.5,249.8 L515.4,246.4 L516.4,243.1 L517.4,239.7 L518.4,236.4 L519.5,233.1 L520.6,229.9 L521.7,226.6 L522.8,223.4 L523.9,220.1 L525.1,216.9 L526.4,213.7 L527.6,210.6 L528.9,207.4 L530.3,204.3 L531.6,201.2 L533.0,198.1 L534.5,195.0 L536.0,192.0 L537.5,188.9 L539.1,185.9 L540.7,183.0 L542.4,180.0 L544.1,177.1 L545.8,174.1 L547.6,171.3 L549.4,168.4 L551.2,165.5 L553.1,162.7 L555.0,159.9 L557.0,157.2 L559.0,154.4 L561.1,151.7 L563.2,149.0 L565.3,146.4 L567.5,143.8 L569.8,141.2 L572.2,138.8 L574.8,136.6 L577.6,134.6 L580.3,132.5 L582.8,130.3 L585.4,128.1 L588.0,125.9 L590.6,123.8 L593.3,121.6 L596.0,119.5 L598.6,117.5 L601.4,115.5 L604.1,113.5 L606.9,111.5 L609.7,109.6 L612.6,107.8 L615.5,105.9 L618.4,104.1 L621.3,102.4 L624.2,100.7 L627.2,99.0 L630.2,97.4 L633.3,95.8 L636.3,94.2 L639.4,92.6 L642.5,91.1 L645.6,89.6 L648.8,88.2 L652.0,86.8 L655.2,85.5 L658.5,84.3 L661.7,83.1 L665.0,82.0 L668.4,80.8 L671.7,79.7 L675.1,78.7 L678.4,77.7 L681.9,76.8 L685.3,76.0 L688.8,75.3 L692.3,74.8 L695.8,74.4 L699.3,74.1 L702.8,74.0 L706.3,74.0 L709.9,74.1 L713.4,74.2 L716.9,74.4 L720.4,74.7 L723.9,75.1 L727.4,75.5 L730.9,76.0 L734.4,76.6 L737.8,77.2 L741.2,77.9 L744.7,78.7 L748.1,79.5 L751.4,80.5 L754.8,81.5 L758.1,82.7 L761.3,84.0 L764.5,85.4 L767.7,86.9 L770.8,88.4 L773.9,90.0 L777.0,91.6 L780.0,93.2 L783.0,94.9 L786.0,96.5 L789.0,98.2 L792.0,99.8 L794.9,101.6 L797.8,103.4 L800.6,105.2 L803.4,107.1 L806.2,109.1 L808.9,111.0 L811.6,113.0 L814.3,115.1 L816.9,117.1 L819.5,119.2 L822.1,121.3 L824.7,123.5 L827.2,125.7 L829.7,127.9 L832.2,130.1 L834.6,132.3 L837.0,134.6 L839.4,136.9 L841.8,139.2 L844.1,141.6 L846.4,143.9 L848.7,146.3 L850.9,148.7 L853.2,151.2 L855.4,153.7" fill="none" stroke="#332a00" stroke-width="0.7"/><path d="M493.7,353.1 L494.9,348.4 L496.0,343.9 L497.1,339.4 L498.1,335.1 L499.1,330.8 L500.0,326.6 L500.8,322.5 L501.6,318.5 L502.3,314.6 L502.9,310.7 L503.6,306.9 L504.2,303.1 L504.9,299.3 L505.6,295.6 L506.3,291.9 L507.0,288.3 L507.8,284.6 L508.5,281.1 L509.3,277.5 L510.2,274.0 L511.0,270.5 L511.9,267.0 L512.7,263.6 L513.6,260.1 L514.6,256.7 L515.5,253.4 L516.5,250.0 L517.5,246.7 L518.5,243.4 L519.5,240.1 L520.6,236.9 L521.7,233.6 L522.8,230.4 L523.9,227.2 L525.0,224.0 L526.2,220.8 L527.4,217.6 L528.6,214.5 L529.9,211.4 L531.2,208.3 L532.5,205.2 L533.9,202.1 L535.3,199.1 L536.7,196.0 L538.2,193.0 L539.7,190.1 L541.3,187.1 L542.9,184.1 L544.5,181.2 L546.2,178.3 L547.9,175.5 L549.7,172.6 L551.5,169.8 L553.3,167.0 L555.1,164.2 L557.0,161.4 L559.0,158.7 L560.9,155.9 L563.0,153.2 L565.0,150.6 L567.1,148.0 L569.3,145.4 L571.5,142.9 L573.9,140.5 L576.5,138.4 L579.3,136.4 L582.0,134.3 L584.5,132.2 L587.1,130.0 L589.6,127.9 L592.2,125.7 L594.8,123.6 L597.4,121.6 L600.1,119.5 L602.8,117.5 L605.5,115.5 L608.2,113.6 L611.0,111.7 L613.8,109.9 L616.6,108.0 L619.5,106.2 L622.4,104.5 L625.3,102.8 L628.2,101.1 L631.2,99.5 L634.2,97.9 L637.2,96.3 L640.2,94.7 L643.3,93.2 L646.4,91.7 L649.5,90.2 L652.6,88.8 L655.8,87.5 L659.0,86.2 L662.2,85.0 L665.5,83.8 L668.8,82.7 L672.1,81.6 L675.4,80.5 L678.7,79.5 L682.1,78.5 L685.5,77.7 L688.9,77.0 L692.4,76.4 L695.9,76.0 L699.4,75.8 L702.9,75.6 L706.4,75.6 L709.9,75.7 L713.4,75.9 L716.9,76.1 L720.3,76.4 L723.8,76.8 L727.3,77.2 L730.7,77.8 L734.1,78.3 L737.6,79.0 L741.0,79.7 L744.4,80.5 L747.7,81.4 L751.0,82.3 L754.3,83.4 L757.6,84.6 L760.8,86.0 L764.0,87.4 L767.1,88.9 L770.1,90.5 L773.2,92.1 L776.2,93.8 L779.2,95.4 L782.1,97.1 L785.1,98.8 L788.0,100.4 L790.9,102.1 L793.8,103.9 L796.6,105.7 L799.4,107.6 L802.1,109.5 L804.8,111.4 L807.5,113.4 L810.2,115.4 L812.8,117.4 L815.4,119.5 L817.9,121.6 L820.4,123.7 L822.9,125.8 L825.4,128.0 L827.8,130.2 L830.3,132.4 L832.7,134.6 L835.0,136.8 L837.4,139.1 L839.7,141.4 L842.0,143.7 L844.2,146.0 L846.5,148.4 L848.7,150.8 L850.9,153.2 L853.1,155.6" fill="none" stroke="#332a00" stroke-width="0.7"/><path d="M492.4,353.6 L493.8,348.8 L495.1,344.1 L496.4,339.6 L497.6,335.2 L498.8,330.9 L499.9,326.7 L500.9,322.5 L501.8,318.5 L502.6,314.5 L503.4,310.6 L504.2,306.8 L505.0,303.0 L505.7,299.2 L506.5,295.5 L507.3,291.8 L508.2,288.2 L509.0,284.6 L509.9,281.0 L510.8,277.5 L511.7,274.0 L512.6,270.5 L513.5,267.1 L514.5,263.7 L515.5,260.3 L516.4,256.9 L517.4,253.6 L518.5,250.3 L519.5,247.0 L520.6,243.7 L521.6,240.5 L522.7,237.3 L523.8,234.1 L525.0,230.9 L526.1,227.7 L527.3,224.6 L528.5,221.5 L529.7,218.4 L530.9,215.3 L532.2,212.2 L533.5,209.1 L534.8,206.1 L536.2,203.1 L537.6,200.1 L539.0,197.1 L540.5,194.1 L542.0,191.2 L543.5,188.2 L545.1,185.3 L546.7,182.5 L548.4,179.6 L550.1,176.8 L551.8,173.9 L553.5,171.1 L555.3,168.4 L557.2,165.6 L559.0,162.9 L560.9,160.1 L562.9,157.5 L564.8,154.8 L566.8,152.2 L568.9,149.6 L571.0,147.0 L573.3,144.5 L575.6,142.2 L578.2,140.1 L581.0,138.2 L583.6,136.2 L586.2,134.1 L588.7,131.9 L591.2,129.8 L593.8,127.7 L596.3,125.6 L598.9,123.6 L601.5,121.6 L604.2,119.6 L606.9,117.6 L609.6,115.7 L612.3,113.8 L615.0,112.0 L617.8,110.1 L620.6,108.3 L623.5,106.6 L626.3,104.9 L629.2,103.2 L632.2,101.6 L635.1,100.0 L638.1,98.4 L641.0,96.8 L644.0,95.2 L647.1,93.7 L650.1,92.2 L653.2,90.8 L656.4,89.4 L659.5,88.1 L662.7,86.9 L665.9,85.7 L669.2,84.5 L672.4,83.4 L675.7,82.3 L679.0,81.2 L682.4,80.2 L685.7,79.4 L689.1,78.6 L692.6,78.1 L696.0,77.7 L699.5,77.4 L702.9,77.3 L706.4,77.3 L709.9,77.4 L713.3,77.5 L716.8,77.8 L720.3,78.1 L723.7,78.5 L727.1,79.0 L730.5,79.5 L733.9,80.1 L737.3,80.8 L740.7,81.5 L744.0,82.3 L747.4,83.2 L750.7,84.2 L753.9,85.3 L757.1,86.6 L760.3,87.9 L763.4,89.4 L766.5,91.0 L769.5,92.6 L772.5,94.2 L775.4,95.9 L778.3,97.6 L781.2,99.4 L784.1,101.0 L787.0,102.7 L789.9,104.4 L792.7,106.2 L795.4,108.0 L798.2,109.9 L800.8,111.8 L803.5,113.8 L806.1,115.8 L808.7,117.8 L811.2,119.8 L813.8,121.9 L816.3,123.9 L818.7,126.0 L821.2,128.2 L823.6,130.3 L826.0,132.5 L828.4,134.6 L830.7,136.8 L833.0,139.1 L835.3,141.3 L837.6,143.6 L839.8,145.8 L842.1,148.1 L844.3,150.5 L846.5,152.8 L848.6,155.2 L850.8,157.5" fill="none" stroke="#332a00" stroke-width="0.7"/><path d="M491.0,354.1 L492.6,349.2 L494.2,344.4 L495.7,339.8 L497.2,335.3 L498.5,330.9 L499.8,326.7 L500.9,322.5 L502.0,318.4 L503.0,314.5 L503.9,310.5 L504.8,306.7 L505.7,302.9 L506.6,299.1 L507.5,295.4 L508.4,291.7 L509.3,288.1 L510.3,284.5 L511.3,281.0 L512.2,277.5 L513.2,274.0 L514.2,270.6 L515.2,267.1 L516.2,263.8 L517.3,260.4 L518.3,257.1 L519.4,253.8 L520.4,250.5 L521.5,247.3 L522.6,244.1 L523.8,240.9 L524.9,237.7 L526.0,234.6 L527.2,231.4 L528.3,228.3 L529.5,225.2 L530.7,222.1 L532.0,219.1 L533.2,216.0 L534.5,213.0 L535.8,210.0 L537.1,207.0 L538.4,204.0 L539.8,201.0 L541.2,198.1 L542.7,195.2 L544.2,192.3 L545.7,189.4 L547.3,186.5 L548.9,183.7 L550.5,180.9 L552.2,178.1 L553.9,175.3 L555.6,172.5 L557.4,169.8 L559.2,167.0 L561.0,164.3 L562.9,161.6 L564.8,159.0 L566.7,156.3 L568.7,153.7 L570.7,151.2 L572.8,148.6 L575.0,146.2 L577.4,143.9 L579.9,141.8 L582.7,140.0 L585.3,138.0 L587.8,135.9 L590.3,133.8 L592.8,131.8 L595.3,129.7 L597.9,127.6 L600.4,125.6 L603.0,123.6 L605.6,121.6 L608.2,119.7 L610.9,117.8 L613.6,115.9 L616.3,114.0 L619.0,112.2 L621.8,110.5 L624.6,108.7 L627.4,107.0 L630.2,105.3 L633.1,103.7 L636.0,102.1 L638.9,100.4 L641.8,98.8 L644.8,97.3 L647.8,95.7 L650.8,94.2 L653.8,92.8 L656.9,91.4 L660.0,90.1 L663.2,88.8 L666.4,87.6 L669.6,86.4 L672.8,85.2 L676.0,84.0 L679.3,82.9 L682.6,81.9 L685.9,81.0 L689.3,80.3 L692.7,79.7 L696.1,79.3 L699.6,79.0 L703.0,78.9 L706.4,78.9 L709.9,79.0 L713.3,79.2 L716.8,79.5 L720.2,79.8 L723.6,80.2 L727.0,80.7 L730.4,81.3 L733.7,81.9 L737.1,82.5 L740.4,83.3 L743.7,84.1 L747.0,85.0 L750.3,86.0 L753.5,87.2 L756.6,88.5 L759.8,89.9 L762.8,91.4 L765.8,93.0 L768.8,94.7 L771.7,96.4 L774.6,98.1 L777.5,99.9 L780.3,101.6 L783.2,103.3 L786.0,105.0 L788.8,106.7 L791.5,108.5 L794.3,110.3 L796.9,112.2 L799.5,114.2 L802.1,116.1 L804.7,118.1 L807.2,120.1 L809.7,122.2 L812.2,124.2 L814.6,126.3 L817.0,128.4 L819.4,130.5 L821.8,132.6 L824.1,134.8 L826.4,136.9 L828.7,139.1 L831.0,141.3 L833.3,143.5 L835.5,145.7 L837.7,148.0 L839.9,150.2 L842.1,152.5 L844.2,154.8 L846.3,157.1 L848.5,159.5" fill="none" stroke="#332a00" stroke-width="0.7"/><path d="M489.6,354.5 L491.5,349.6 L493.3,344.7 L495.0,340.0 L496.7,335.5 L498.2,331.0 L499.7,326.7 L501.0,322.5 L502.2,318.4 L503.4,314.4 L504.4,310.4 L505.5,306.6 L506.5,302.8 L507.5,299.0 L508.5,295.3 L509.5,291.6 L510.5,288.0 L511.6,284.5 L512.6,280.9 L513.7,277.4 L514.8,274.0 L515.8,270.6 L516.9,267.2 L518.0,263.9 L519.1,260.6 L520.2,257.3 L521.3,254.0 L522.4,250.8 L523.6,247.6 L524.7,244.4 L525.9,241.3 L527.0,238.2 L528.2,235.0 L529.4,232.0 L530.6,228.9 L531.8,225.8 L533.0,222.8 L534.2,219.8 L535.5,216.8 L536.7,213.8 L538.0,210.8 L539.4,207.9 L540.7,204.9 L542.1,202.0 L543.5,199.1 L544.9,196.2 L546.4,193.4 L547.9,190.5 L549.5,187.7 L551.1,184.9 L552.7,182.1 L554.3,179.4 L556.0,176.6 L557.7,173.9 L559.4,171.2 L561.2,168.5 L563.0,165.8 L564.8,163.1 L566.7,160.5 L568.6,157.9 L570.5,155.3 L572.5,152.7 L574.6,150.2 L576.7,147.8 L579.1,145.6 L581.6,143.6 L584.4,141.8 L587.0,139.9 L589.5,137.8 L592.0,135.8 L594.4,133.7 L596.9,131.7 L599.4,129.6 L601.9,127.6 L604.4,125.6 L607.0,123.7 L609.6,121.7 L612.2,119.8 L614.8,118.0 L617.5,116.1 L620.2,114.3 L622.9,112.6 L625.7,110.8 L628.4,109.1 L631.2,107.4 L634.1,105.8 L636.9,104.1 L639.8,102.5 L642.6,100.9 L645.6,99.3 L648.5,97.8 L651.5,96.2 L654.5,94.8 L657.5,93.3 L660.6,92.0 L663.7,90.7 L666.8,89.5 L670.0,88.2 L673.2,87.0 L676.4,85.8 L679.6,84.7 L682.9,83.6 L686.2,82.7 L689.5,81.9 L692.9,81.3 L696.2,80.9 L699.7,80.6 L703.1,80.5 L706.5,80.5 L709.9,80.7 L713.3,80.9 L716.7,81.2 L720.1,81.5 L723.5,81.9 L726.8,82.4 L730.2,83.0 L733.5,83.6 L736.8,84.3 L740.1,85.1 L743.4,85.9 L746.7,86.9 L749.9,87.9 L753.0,89.1 L756.2,90.4 L759.2,91.9 L762.3,93.4 L765.2,95.1 L768.1,96.8 L771.0,98.5 L773.8,100.3 L776.6,102.1 L779.4,103.8 L782.2,105.6 L785.0,107.3 L787.7,109.0 L790.4,110.8 L793.1,112.7 L795.7,114.6 L798.2,116.5 L800.8,118.5 L803.3,120.5 L805.7,122.5 L808.2,124.5 L810.6,126.6 L813.0,128.7 L815.3,130.7 L817.7,132.8 L820.0,134.9 L822.3,137.1 L824.5,139.2 L826.8,141.4 L829.0,143.5 L831.2,145.7 L833.4,147.9 L835.6,150.1 L837.7,152.4 L839.8,154.6 L842.0,156.9 L844.1,159.1 L846.2,161.4" fill="none" stroke="#332a00" stroke-width="0.7"/><path d="M488.2,355.0 L490.4,349.9 L492.4,345.0 L494.4,340.2 L496.2,335.6 L497.9,331.1 L499.6,326.7 L501.1,322.5 L502.5,318.3 L503.7,314.3 L504.9,310.4 L506.1,306.5 L507.2,302.7 L508.3,298.9 L509.4,295.2 L510.6,291.6 L511.7,288.0 L512.8,284.4 L514.0,280.9 L515.1,277.4 L516.3,274.0 L517.4,270.6 L518.6,267.3 L519.8,264.0 L520.9,260.7 L522.1,257.5 L523.3,254.2 L524.4,251.1 L525.6,247.9 L526.8,244.8 L528.0,241.7 L529.2,238.6 L530.4,235.5 L531.6,232.5 L532.8,229.5 L534.0,226.5 L535.2,223.5 L536.5,220.5 L537.8,217.5 L539.0,214.6 L540.3,211.7 L541.6,208.8 L543.0,205.9 L544.4,203.0 L545.8,200.1 L547.2,197.3 L548.7,194.5 L550.2,191.7 L551.7,188.9 L553.3,186.2 L554.8,183.4 L556.5,180.7 L558.1,178.0 L559.8,175.3 L561.5,172.6 L563.2,169.9 L565.0,167.3 L566.8,164.6 L568.6,162.0 L570.5,159.4 L572.4,156.9 L574.3,154.3 L576.3,151.9 L578.5,149.5 L580.8,147.2 L583.3,145.3 L586.1,143.6 L588.7,141.7 L591.2,139.7 L593.6,137.7 L596.0,135.7 L598.5,133.6 L600.9,131.6 L603.4,129.6 L605.9,127.7 L608.4,125.7 L610.9,123.8 L613.5,121.9 L616.1,120.1 L618.7,118.2 L621.4,116.4 L624.0,114.7 L626.7,112.9 L629.5,111.2 L632.2,109.5 L635.0,107.9 L637.8,106.2 L640.6,104.6 L643.5,103.0 L646.3,101.4 L649.2,99.8 L652.1,98.2 L655.1,96.7 L658.1,95.3 L661.1,93.9 L664.2,92.6 L667.3,91.4 L670.4,90.1 L673.5,88.8 L676.7,87.6 L679.9,86.4 L683.1,85.3 L686.4,84.4 L689.7,83.6 L693.0,83.0 L696.4,82.5 L699.7,82.3 L703.1,82.2 L706.5,82.2 L709.9,82.3 L713.3,82.5 L716.7,82.8 L720.0,83.2 L723.4,83.7 L726.7,84.2 L730.0,84.7 L733.3,85.4 L736.6,86.1 L739.9,86.9 L743.1,87.8 L746.3,88.7 L749.5,89.8 L752.6,91.0 L755.7,92.3 L758.7,93.8 L761.7,95.4 L764.6,97.1 L767.5,98.8 L770.3,100.6 L773.1,102.5 L775.8,104.3 L778.5,106.1 L781.3,107.8 L784.0,109.6 L786.7,111.3 L789.3,113.1 L791.9,115.0 L794.5,116.9 L797.0,118.9 L799.4,120.8 L801.9,122.8 L804.3,124.9 L806.7,126.9 L809.0,128.9 L811.3,131.0 L813.6,133.1 L815.9,135.2 L818.2,137.3 L820.4,139.4 L822.6,141.5 L824.8,143.6 L827.0,145.8 L829.2,147.9 L831.3,150.1 L833.4,152.3 L835.5,154.5 L837.6,156.7 L839.7,158.9 L841.8,161.1 L843.8,163.4" fill="none" stroke="#332a00" stroke-width="0.7"/><path d="M486.9,355.5 L489.2,350.3 L491.5,345.3 L493.7,340.4 L495.7,335.7 L497.7,331.2 L499.5,326.8 L501.2,322.5 L502.7,318.3 L504.1,314.2 L505.5,310.3 L506.7,306.4 L508.0,302.6 L509.2,298.8 L510.4,295.1 L511.6,291.5 L512.9,287.9 L514.1,284.3 L515.4,280.9 L516.6,277.4 L517.8,274.0 L519.1,270.7 L520.3,267.4 L521.5,264.1 L522.7,260.8 L524.0,257.6 L525.2,254.5 L526.4,251.3 L527.6,248.2 L528.9,245.1 L530.1,242.1 L531.3,239.0 L532.6,236.0 L533.8,233.0 L535.0,230.0 L536.3,227.1 L537.5,224.1 L538.8,221.2 L540.0,218.3 L541.3,215.4 L542.6,212.5 L543.9,209.7 L545.3,206.8 L546.6,204.0 L548.0,201.2 L549.4,198.4 L550.9,195.6 L552.4,192.8 L553.9,190.1 L555.4,187.4 L557.0,184.7 L558.6,182.0 L560.2,179.3 L561.9,176.6 L563.5,174.0 L565.2,171.4 L567.0,168.7 L568.7,166.1 L570.5,163.6 L572.3,161.0 L574.2,158.4 L576.1,155.9 L578.1,153.5 L580.2,151.1 L582.5,148.9 L585.0,147.0 L587.8,145.4 L590.4,143.6 L592.8,141.6 L595.2,139.6 L597.6,137.6 L600.0,135.6 L602.5,133.6 L604.9,131.6 L607.3,129.7 L609.8,127.8 L612.3,125.9 L614.8,124.0 L617.4,122.2 L620.0,120.3 L622.6,118.5 L625.2,116.8 L627.8,115.0 L630.5,113.3 L633.2,111.6 L636.0,110.0 L638.7,108.3 L641.5,106.7 L644.3,105.0 L647.1,103.4 L649.9,101.8 L652.8,100.2 L655.7,98.7 L658.6,97.3 L661.6,95.9 L664.7,94.6 L667.7,93.3 L670.8,92.0 L673.9,90.6 L677.0,89.4 L680.2,88.2 L683.4,87.1 L686.6,86.1 L689.9,85.2 L693.2,84.6 L696.5,84.1 L699.8,83.9 L703.2,83.8 L706.6,83.8 L709.9,84.0 L713.3,84.2 L716.6,84.5 L719.9,84.9 L723.2,85.4 L726.5,85.9 L729.8,86.5 L733.1,87.2 L736.4,87.9 L739.6,88.7 L742.8,89.6 L746.0,90.5 L749.1,91.6 L752.2,92.9 L755.2,94.3 L758.2,95.8 L761.1,97.4 L764.0,99.1 L766.8,100.9 L769.6,102.8 L772.3,104.6 L775.0,106.5 L777.6,108.3 L780.3,110.1 L783.0,111.8 L785.6,113.6 L788.2,115.4 L790.7,117.3 L793.2,119.2 L795.7,121.2 L798.1,123.2 L800.5,125.2 L802.8,127.2 L805.1,129.3 L807.4,131.3 L809.7,133.4 L811.9,135.4 L814.2,137.5 L816.4,139.6 L818.5,141.7 L820.7,143.8 L822.9,145.9 L825.0,148.0 L827.1,150.1 L829.2,152.3 L831.3,154.4 L833.4,156.6 L835.4,158.7 L837.5,160.9 L839.5,163.1 L841.5,165.3" fill="none" stroke="#332a00" stroke-width="0.7"/><path d="M485.5,356.0 L488.1,350.7 L490.6,345.6 L493.0,340.6 L495.3,335.9 L497.4,331.2 L499.4,326.8 L501.2,322.4 L502.9,318.3 L504.5,314.2 L506.0,310.2 L507.4,306.3 L508.7,302.5 L510.1,298.7 L511.4,295.0 L512.7,291.4 L514.0,287.8 L515.4,284.3 L516.7,280.8 L518.0,277.4 L519.4,274.0 L520.7,270.7 L522.0,267.4 L523.3,264.2 L524.6,261.0 L525.8,257.8 L527.1,254.7 L528.4,251.6 L529.7,248.5 L531.0,245.5 L532.2,242.4 L533.5,239.5 L534.8,236.5 L536.0,233.5 L537.3,230.6 L538.5,227.7 L539.8,224.8 L541.0,221.9 L542.3,219.1 L543.6,216.2 L544.9,213.4 L546.2,210.6 L547.5,207.8 L548.9,205.0 L550.3,202.2 L551.7,199.4 L553.1,196.7 L554.6,194.0 L556.1,191.3 L557.6,188.6 L559.2,186.0 L560.7,183.3 L562.3,180.7 L563.9,178.0 L565.6,175.4 L567.3,172.8 L568.9,170.2 L570.7,167.6 L572.4,165.1 L574.2,162.5 L576.1,160.0 L577.9,157.5 L579.9,155.1 L581.9,152.8 L584.2,150.6 L586.8,148.8 L589.5,147.2 L592.1,145.4 L594.5,143.5 L596.9,141.5 L599.2,139.6 L601.6,137.6 L604.0,135.6 L606.4,133.7 L608.8,131.7 L611.2,129.8 L613.7,127.9 L616.2,126.1 L618.7,124.3 L621.2,122.4 L623.7,120.6 L626.3,118.9 L628.9,117.1 L631.6,115.4 L634.2,113.8 L636.9,112.1 L639.6,110.4 L642.3,108.8 L645.1,107.1 L647.8,105.5 L650.6,103.8 L653.5,102.2 L656.3,100.7 L659.2,99.2 L662.2,97.8 L665.2,96.5 L668.2,95.1 L671.2,93.8 L674.2,92.5 L677.3,91.1 L680.4,89.9 L683.6,88.8 L686.8,87.7 L690.0,86.9 L693.3,86.2 L696.6,85.8 L699.9,85.5 L703.3,85.4 L706.6,85.5 L709.9,85.6 L713.2,85.9 L716.6,86.2 L719.8,86.6 L723.1,87.1 L726.4,87.6 L729.7,88.2 L732.9,88.9 L736.1,89.7 L739.3,90.5 L742.5,91.4 L745.6,92.4 L748.7,93.5 L751.8,94.7 L754.8,96.2 L757.7,97.7 L760.5,99.4 L763.4,101.2 L766.1,103.0 L768.8,104.9 L771.5,106.8 L774.1,108.7 L776.7,110.6 L779.4,112.4 L782.0,114.1 L784.5,115.9 L787.1,117.7 L789.6,119.6 L792.0,121.6 L794.4,123.6 L796.7,125.6 L799.0,127.6 L801.3,129.6 L803.6,131.6 L805.8,133.7 L808.0,135.7 L810.2,137.8 L812.4,139.8 L814.6,141.9 L816.7,144.0 L818.8,146.1 L820.9,148.2 L823.0,150.2 L825.0,152.3 L827.1,154.4 L829.1,156.6 L831.2,158.7 L833.2,160.8 L835.2,162.9 L837.2,165.1 L839.2,167.2" fill="none" stroke="#332a00" stroke-width="0.7"/><path d="M484.1,356.5 L487.0,351.1 L489.7,345.9 L492.3,340.8 L494.8,336.0 L497.1,331.3 L499.3,326.8 L501.3,322.4 L503.1,318.2 L504.9,314.1 L506.5,310.1 L508.0,306.2 L509.5,302.4 L510.9,298.6 L512.3,294.9 L513.8,291.3 L515.2,287.7 L516.7,284.2 L518.1,280.8 L519.5,277.4 L520.9,274.0 L522.3,270.7 L523.7,267.5 L525.0,264.3 L526.4,261.1 L527.7,258.0 L529.1,254.9 L530.4,251.8 L531.7,248.8 L533.0,245.8 L534.3,242.8 L535.6,239.9 L536.9,237.0 L538.2,234.1 L539.5,231.2 L540.8,228.3 L542.0,225.5 L543.3,222.6 L544.6,219.8 L545.9,217.0 L547.2,214.2 L548.5,211.5 L549.8,208.7 L551.2,206.0 L552.5,203.2 L553.9,200.5 L555.4,197.8 L556.8,195.1 L558.3,192.5 L559.8,189.9 L561.3,187.2 L562.9,184.6 L564.4,182.0 L566.0,179.4 L567.6,176.8 L569.3,174.2 L570.9,171.7 L572.6,169.1 L574.3,166.6 L576.1,164.1 L577.9,161.6 L579.7,159.1 L581.6,156.7 L583.7,154.4 L585.9,152.3 L588.5,150.5 L591.2,149.0 L593.8,147.3 L596.2,145.4 L598.5,143.4 L600.8,141.5 L603.2,139.6 L605.5,137.6 L607.9,135.7 L610.2,133.8 L612.6,131.9 L615.0,130.0 L617.5,128.2 L619.9,126.3 L622.4,124.5 L624.9,122.7 L627.5,121.0 L630.0,119.3 L632.6,117.5 L635.2,115.9 L637.9,114.2 L640.5,112.5 L643.2,110.8 L645.9,109.2 L648.6,107.5 L651.3,105.9 L654.1,104.3 L656.9,102.7 L659.8,101.2 L662.7,99.7 L665.6,98.4 L668.6,97.0 L671.6,95.7 L674.6,94.3 L677.6,92.9 L680.7,91.6 L683.8,90.5 L687.0,89.4 L690.2,88.5 L693.5,87.9 L696.7,87.4 L700.0,87.1 L703.3,87.0 L706.6,87.1 L709.9,87.3 L713.2,87.5 L716.5,87.9 L719.8,88.3 L723.0,88.8 L726.3,89.4 L729.5,90.0 L732.7,90.7 L735.9,91.4 L739.0,92.3 L742.2,93.2 L745.3,94.2 L748.3,95.3 L751.3,96.6 L754.3,98.1 L757.2,99.7 L760.0,101.4 L762.7,103.2 L765.4,105.1 L768.1,107.1 L770.7,109.0 L773.3,110.9 L775.8,112.8 L778.4,114.6 L781.0,116.4 L783.5,118.2 L786.0,120.1 L788.4,122.0 L790.8,123.9 L793.1,125.9 L795.4,127.9 L797.6,129.9 L799.9,132.0 L802.1,134.0 L804.2,136.0 L806.4,138.1 L808.5,140.1 L810.6,142.2 L812.7,144.2 L814.8,146.3 L816.9,148.3 L818.9,150.4 L821.0,152.5 L823.0,154.5 L825.0,156.6 L827.0,158.7 L829.0,160.8 L831.0,162.9 L833.0,165.0 L834.9,167.1 L836.9,169.2" fill="none" stroke="#332a00" stroke-width="0.7"/><path d="M482.7,357.0 L485.8,351.5 L488.8,346.2 L491.6,341.1 L494.3,336.1 L496.8,331.4 L499.2,326.8 L501.4,322.4 L503.4,318.2 L505.2,314.0 L507.0,310.0 L508.6,306.1 L510.2,302.3 L511.8,298.5 L513.3,294.8 L514.9,291.2 L516.4,287.7 L517.9,284.2 L519.4,280.7 L521.0,277.4 L522.4,274.0 L523.9,270.8 L525.3,267.6 L526.8,264.4 L528.2,261.3 L529.6,258.2 L531.0,255.1 L532.4,252.1 L533.7,249.1 L535.1,246.1 L536.5,243.2 L537.8,240.3 L539.1,237.4 L540.4,234.6 L541.7,231.8 L543.0,228.9 L544.3,226.1 L545.6,223.3 L546.9,220.6 L548.1,217.8 L549.4,215.1 L550.8,212.3 L552.1,209.6 L553.4,206.9 L554.8,204.3 L556.2,201.6 L557.6,198.9 L559.0,196.3 L560.5,193.7 L562.0,191.1 L563.5,188.5 L565.0,185.9 L566.5,183.3 L568.1,180.8 L569.7,178.2 L571.3,175.7 L572.9,173.2 L574.6,170.6 L576.3,168.1 L578.0,165.6 L579.7,163.2 L581.5,160.7 L583.4,158.3 L585.4,156.0 L587.6,154.0 L590.2,152.2 L592.9,150.8 L595.5,149.1 L597.8,147.3 L600.2,145.4 L602.4,143.4 L604.7,141.5 L607.0,139.6 L609.3,137.7 L611.7,135.8 L614.0,133.9 L616.4,132.1 L618.8,130.2 L621.2,128.4 L623.7,126.6 L626.1,124.9 L628.6,123.1 L631.1,121.4 L633.7,119.7 L636.2,118.0 L638.8,116.3 L641.4,114.6 L644.0,112.9 L646.7,111.2 L649.4,109.6 L652.1,107.9 L654.8,106.3 L657.6,104.7 L660.4,103.1 L663.2,101.7 L666.1,100.3 L669.1,98.9 L672.0,97.5 L675.0,96.1 L678.0,94.7 L681.0,93.4 L684.1,92.2 L687.2,91.1 L690.4,90.2 L693.6,89.5 L696.9,89.0 L700.1,88.7 L703.4,88.7 L706.7,88.7 L709.9,88.9 L713.2,89.2 L716.4,89.6 L719.7,90.0 L722.9,90.5 L726.1,91.1 L729.3,91.7 L732.5,92.4 L735.6,93.2 L738.8,94.1 L741.8,95.0 L744.9,96.0 L747.9,97.2 L750.9,98.5 L753.8,100.0 L756.6,101.7 L759.4,103.4 L762.1,105.3 L764.8,107.2 L767.4,109.2 L769.9,111.2 L772.4,113.1 L774.9,115.1 L777.5,116.9 L779.9,118.7 L782.4,120.5 L784.8,122.4 L787.2,124.3 L789.5,126.2 L791.8,128.2 L794.0,130.3 L796.2,132.3 L798.4,134.3 L800.5,136.4 L802.7,138.4 L804.8,140.4 L806.8,142.5 L808.9,144.5 L810.9,146.6 L813.0,148.6 L815.0,150.6 L817.0,152.7 L819.0,154.7 L820.9,156.8 L822.9,158.8 L824.9,160.8 L826.8,162.9 L828.8,164.9 L830.7,167.0 L832.7,169.1 L834.6,171.1" fill="none" stroke="#332a00" stroke-width="0.7"/><path d="M481.4,357.5 L484.7,351.9 L487.9,346.5 L490.9,341.3 L493.8,336.3 L496.5,331.5 L499.1,326.8 L501.4,322.4 L503.6,318.1 L505.6,314.0 L507.5,309.9 L509.2,306.0 L511.0,302.2 L512.6,298.4 L514.3,294.7 L515.9,291.1 L517.6,287.6 L519.2,284.1 L520.8,280.7 L522.4,277.3 L524.0,274.1 L525.5,270.8 L527.0,267.6 L528.5,264.5 L530.0,261.4 L531.5,258.3 L532.9,255.3 L534.4,252.3 L535.8,249.4 L537.2,246.5 L538.6,243.6 L540.0,240.8 L541.3,237.9 L542.6,235.1 L543.9,232.3 L545.3,229.6 L546.5,226.8 L547.8,224.1 L549.1,221.3 L550.4,218.6 L551.7,215.9 L553.0,213.2 L554.4,210.6 L555.7,207.9 L557.0,205.3 L558.4,202.7 L559.8,200.0 L561.2,197.5 L562.7,194.9 L564.2,192.3 L565.6,189.8 L567.1,187.2 L568.6,184.7 L570.2,182.2 L571.7,179.6 L573.3,177.1 L574.9,174.6 L576.5,172.1 L578.2,169.6 L579.9,167.2 L581.6,164.7 L583.3,162.3 L585.2,160.0 L587.1,157.7 L589.3,155.6 L591.9,154.0 L594.6,152.6 L597.2,151.0 L599.5,149.2 L601.8,147.3 L604.1,145.4 L606.3,143.5 L608.6,141.6 L610.8,139.7 L613.1,137.8 L615.4,136.0 L617.8,134.1 L620.1,132.3 L622.5,130.5 L624.9,128.7 L627.3,127.0 L629.7,125.2 L632.2,123.5 L634.7,121.8 L637.2,120.1 L639.8,118.4 L642.3,116.7 L644.9,115.0 L647.5,113.3 L650.1,111.6 L652.8,109.9 L655.4,108.3 L658.2,106.6 L660.9,105.1 L663.8,103.6 L666.6,102.2 L669.5,100.8 L672.4,99.4 L675.3,97.9 L678.3,96.5 L681.3,95.1 L684.3,93.9 L687.4,92.8 L690.6,91.8 L693.8,91.1 L697.0,90.6 L700.2,90.4 L703.5,90.3 L706.7,90.4 L709.9,90.6 L713.2,90.9 L716.4,91.2 L719.6,91.7 L722.8,92.2 L726.0,92.8 L729.1,93.5 L732.3,94.2 L735.4,95.0 L738.5,95.9 L741.5,96.8 L744.6,97.9 L747.6,99.0 L750.5,100.4 L753.3,101.9 L756.1,103.6 L758.8,105.4 L761.5,107.3 L764.1,109.3 L766.6,111.3 L769.1,113.3 L771.6,115.3 L774.0,117.3 L776.5,119.2 L778.9,121.0 L781.4,122.8 L783.7,124.7 L786.0,126.6 L788.3,128.6 L790.5,130.6 L792.7,132.6 L794.8,134.6 L796.9,136.7 L799.0,138.7 L801.1,140.8 L803.1,142.8 L805.1,144.8 L807.1,146.9 L809.1,148.9 L811.1,150.9 L813.1,152.9 L815.0,154.9 L817.0,156.9 L818.9,159.0 L820.8,161.0 L822.7,163.0 L824.7,165.0 L826.6,167.0 L828.5,169.0 L830.4,171.0 L832.3,173.1" fill="none" stroke="#332a00" stroke-width="0.7"/><path d="M480.0,358.0 L483.6,352.3 L487.0,346.7 L490.3,341.5 L493.3,336.4 L496.3,331.5 L499.0,326.9 L501.5,322.4 L503.8,318.1 L506.0,313.9 L508.0,309.8 L509.9,305.9 L511.7,302.1 L513.5,298.3 L515.3,294.6 L517.0,291.0 L518.7,287.5 L520.5,284.0 L522.2,280.7 L523.9,277.3 L525.5,274.1 L527.1,270.9 L528.7,267.7 L530.3,264.6 L531.8,261.5 L533.4,258.5 L534.9,255.5 L536.4,252.6 L537.8,249.7 L539.3,246.8 L540.7,244.0 L542.1,241.2 L543.5,238.4 L544.8,235.6 L546.2,232.9 L547.5,230.2 L548.8,227.5 L550.1,224.8 L551.4,222.1 L552.7,219.4 L554.0,216.8 L555.3,214.1 L556.6,211.5 L558.0,208.9 L559.3,206.3 L560.7,203.7 L562.0,201.2 L563.5,198.6 L564.9,196.1 L566.3,193.5 L567.8,191.0 L569.3,188.5 L570.8,186.0 L572.3,183.5 L573.8,181.0 L575.3,178.6 L576.9,176.1 L578.5,173.6 L580.1,171.2 L581.7,168.7 L583.4,166.3 L585.1,163.9 L586.9,161.6 L588.9,159.3 L591.0,157.3 L593.6,155.7 L596.3,154.4 L598.9,152.8 L601.2,151.1 L603.4,149.2 L605.7,147.3 L607.9,145.5 L610.1,143.6 L612.3,141.7 L614.6,139.9 L616.8,138.0 L619.1,136.2 L621.4,134.4 L623.8,132.6 L626.1,130.8 L628.5,129.1 L630.9,127.3 L633.3,125.6 L635.8,123.9 L638.2,122.2 L640.7,120.5 L643.2,118.8 L645.8,117.1 L648.3,115.4 L650.9,113.6 L653.5,111.9 L656.1,110.3 L658.8,108.6 L661.5,107.0 L664.3,105.5 L667.1,104.1 L669.9,102.7 L672.8,101.2 L675.7,99.7 L678.6,98.3 L681.6,96.9 L684.6,95.6 L687.7,94.4 L690.8,93.5 L693.9,92.8 L697.1,92.3 L700.3,92.0 L703.5,91.9 L706.7,92.0 L710.0,92.2 L713.2,92.5 L716.3,92.9 L719.5,93.4 L722.7,93.9 L725.8,94.6 L729.0,95.2 L732.1,96.0 L735.1,96.8 L738.2,97.7 L741.2,98.6 L744.2,99.7 L747.2,100.9 L750.1,102.3 L752.9,103.9 L755.6,105.6 L758.3,107.4 L760.9,109.4 L763.4,111.4 L765.9,113.5 L768.4,115.5 L770.8,117.6 L773.2,119.5 L775.5,121.4 L777.9,123.3 L780.3,125.1 L782.6,127.0 L784.9,128.9 L787.1,130.9 L789.2,132.9 L791.3,135.0 L793.4,137.0 L795.5,139.0 L797.5,141.1 L799.5,143.1 L801.5,145.2 L803.4,147.2 L805.4,149.2 L807.3,151.2 L809.2,153.2 L811.2,155.2 L813.1,157.2 L815.0,159.2 L816.8,161.2 L818.7,163.1 L820.6,165.1 L822.5,167.1 L824.4,169.1 L826.2,171.0 L828.1,173.0 L830.0,175.0" fill="none" stroke="#332a00" stroke-width="0.7"/></g><g clip-path="url(#objR)"><g clip-path="url(#infR)"><g filter="url(#blR)"><rect x="492" y="-5" width="310" height="462" fill="#4c3e00"/><path d="M490.66,-20.0 L499.21,-20.0 L-171.30,472.0 L-181.18,472.0Z M502.54,-20.0 L511.09,-20.0 L-157.58,472.0 L-167.46,472.0Z M514.42,-20.0 L522.97,-20.0 L-143.86,472.0 L-153.74,472.0Z M526.30,-20.0 L534.85,-20.0 L-130.14,472.0 L-140.02,472.0Z M538.18,-20.0 L546.73,-20.0 L-116.42,472.0 L-126.30,472.0Z M550.06,-20.0 L558.61,-20.0 L-102.71,472.0 L-112.58,472.0Z M561.94,-20.0 L570.49,-20.0 L-88.99,472.0 L-98.87,472.0Z M573.82,-20.0 L582.37,-20.0 L-75.27,472.0 L-85.15,472.0Z M585.70,-20.0 L594.25,-20.0 L-61.55,472.0 L-71.43,472.0Z M597.58,-20.0 L606.14,-20.0 L-47.83,472.0 L-57.71,472.0Z M609.46,-20.0 L618.02,-20.0 L-34.11,472.0 L-43.99,472.0Z M621.34,-20.0 L629.90,-20.0 L-20.40,472.0 L-30.27,472.0Z M633.22,-20.0 L641.78,-20.0 L-6.68,472.0 L-16.55,472.0Z M645.10,-20.0 L653.66,-20.0 L7.04,472.0 L-2.84,472.0Z M656.98,-20.0 L665.54,-20.0 L20.76,472.0 L10.88,472.0Z M668.86,-20.0 L677.42,-20.0 L34.48,472.0 L24.60,472.0Z M680.74,-20.0 L689.30,-20.0 L48.20,472.0 L38.32,472.0Z M692.62,-20.0 L701.18,-20.0 L61.91,472.0 L52.04,472.0Z M704.50,-20.0 L713.06,-20.0 L75.63,472.0 L65.76,472.0Z M716.38,-20.0 L724.94,-20.0 L89.35,472.0 L79.47,472.0Z M728.26,-20.0 L736.82,-20.0 L103.07,472.0 L93.19,472.0Z M740.15,-20.0 L748.70,-20.0 L116.79,472.0 L106.91,472.0Z M752.03,-20.0 L760.58,-20.0 L130.51,472.0 L120.63,472.0Z M763.91,-20.0 L772.46,-20.0 L144.23,472.0 L134.35,472.0Z M775.79,-20.0 L784.34,-20.0 L157.94,472.0 L148.07,472.0Z M787.67,-20.0 L796.22,-20.0 L171.66,472.0 L161.78,472.0Z M799.55,-20.0 L808.10,-20.0 L185.38,472.0 L175.50,472.0Z M811.43,-20.0 L819.98,-20.0 L199.10,472.0 L189.22,472.0Z M823.31,-20.0 L831.86,-20.0 L212.82,472.0 L202.94,472.0Z M835.19,-20.0 L843.74,-20.0 L226.54,472.0 L216.66,472.0Z M847.07,-20.0 L855.62,-20.0 L240.25,472.0 L230.38,472.0Z M858.95,-20.0 L867.50,-20.0 L253.97,472.0 L244.10,472.0Z M870.83,-20.0 L879.38,-20.0 L267.69,472.0 L257.81,472.0Z M882.71,-20.0 L891.26,-20.0 L281.41,472.0 L271.53,472.0Z M894.59,-20.0 L903.14,-20.0 L295.13,472.0 L285.25,472.0Z M906.47,-20.0 L915.02,-20.0 L308.85,472.0 L298.97,472.0Z M918.35,-20.0 L926.90,-20.0 L322.56,472.0 L312.69,472.0Z M930.23,-20.0 L938.78,-20.0 L336.28,472.0 L326.41,472.0Z M942.11,-20.0 L950.66,-20.0 L350.00,472.0 L340.12,472.0Z M953.99,-20.0 L962.55,-20.0 L363.72,472.0 L353.84,472.0Z M965.87,-20.0 L974.43,-20.0 L377.44,472.0 L367.56,472.0Z M977.75,-20.0 L986.31,-20.0 L391.16,472.0 L381.28,472.0Z M989.63,-20.0 L998.19,-20.0 L404.88,472.0 L395.00,472.0Z M1001.51,-20.0 L1010.07,-20.0 L418.59,472.0 L408.72,472.0Z M1013.39,-20.0 L1021.95,-20.0 L432.31,472.0 L422.43,472.0Z M1025.27,-20.0 L1033.83,-20.0 L446.03,472.0 L436.15,472.0Z M1037.15,-20.0 L1045.71,-20.0 L459.75,472.0 L449.87,472.0Z M1049.03,-20.0 L1057.59,-20.0 L473.47,472.0 L463.59,472.0Z M1060.91,-20.0 L1069.47,-20.0 L487.19,472.0 L477.31,472.0Z M1072.79,-20.0 L1081.35,-20.0 L500.90,472.0 L491.03,472.0Z M1084.68,-20.0 L1093.23,-20.0 L514.62,472.0 L504.75,472.0Z M1096.56,-20.0 L1105.11,-20.0 L528.34,472.0 L518.46,472.0Z M1108.44,-20.0 L1116.99,-20.0 L542.06,472.0 L532.18,472.0Z M1120.32,-20.0 L1128.87,-20.0 L555.78,472.0 L545.90,472.0Z M1132.20,-20.0 L1140.75,-20.0 L569.50,472.0 L559.62,472.0Z M1144.08,-20.0 L1152.63,-20.0 L583.21,472.0 L573.34,472.0Z M1155.96,-20.0 L1164.51,-20.0 L596.93,472.0 L587.06,472.0Z M1167.84,-20.0 L1176.39,-20.0 L610.65,472.0 L600.77,472.0Z M1179.72,-20.0 L1188.27,-20.0 L624.37,472.0 L614.49,472.0Z M1191.60,-20.0 L1200.15,-20.0 L638.09,472.0 L628.21,472.0Z M1203.48,-20.0 L1212.03,-20.0 L651.81,472.0 L641.93,472.0Z M1215.36,-20.0 L1223.91,-20.0 L665.53,472.0 L655.65,472.0Z M1227.24,-20.0 L1235.79,-20.0 L679.24,472.0 L669.37,472.0Z M1239.12,-20.0 L1247.67,-20.0 L692.96,472.0 L683.09,472.0Z M1251.00,-20.0 L1259.55,-20.0 L706.68,472.0 L696.80,472.0Z M1262.88,-20.0 L1271.43,-20.0 L720.40,472.0 L710.52,472.0Z M1274.76,-20.0 L1283.31,-20.0 L734.12,472.0 L724.24,472.0Z M1286.64,-20.0 L1295.19,-20.0 L747.84,472.0 L737.96,472.0Z M1298.52,-20.0 L1307.07,-20.0 L761.55,472.0 L751.68,472.0Z M1310.40,-20.0 L1318.96,-20.0 L775.27,472.0 L765.40,472.0Z M1322.28,-20.0 L1330.84,-20.0 L788.99,472.0 L779.11,472.0Z M1334.16,-20.0 L1342.72,-20.0 L802.71,472.0 L792.83,472.0Z M1346.04,-20.0 L1354.60,-20.0 L816.43,472.0 L806.55,472.0Z" fill="#ecd000"/><path d="M492.56,-20.0 L497.31,-20.0 L-173.49,472.0 L-178.98,472.0Z M504.44,-20.0 L509.19,-20.0 L-159.78,472.0 L-165.26,472.0Z M516.32,-20.0 L521.07,-20.0 L-146.06,472.0 L-151.54,472.0Z M528.20,-20.0 L532.95,-20.0 L-132.34,472.0 L-137.83,472.0Z M540.08,-20.0 L544.83,-20.0 L-118.62,472.0 L-124.11,472.0Z M551.96,-20.0 L556.71,-20.0 L-104.90,472.0 L-110.39,472.0Z M563.84,-20.0 L568.59,-20.0 L-91.18,472.0 L-96.67,472.0Z M575.72,-20.0 L580.47,-20.0 L-77.46,472.0 L-82.95,472.0Z M587.60,-20.0 L592.35,-20.0 L-63.75,472.0 L-69.23,472.0Z M599.48,-20.0 L604.23,-20.0 L-50.03,472.0 L-55.52,472.0Z M611.36,-20.0 L616.11,-20.0 L-36.31,472.0 L-41.80,472.0Z M623.24,-20.0 L627.99,-20.0 L-22.59,472.0 L-28.08,472.0Z M635.12,-20.0 L639.88,-20.0 L-8.87,472.0 L-14.36,472.0Z M647.00,-20.0 L651.76,-20.0 L4.85,472.0 L-0.64,472.0Z M658.88,-20.0 L663.64,-20.0 L18.56,472.0 L13.08,472.0Z M670.76,-20.0 L675.52,-20.0 L32.28,472.0 L26.80,472.0Z M682.64,-20.0 L687.40,-20.0 L46.00,472.0 L40.51,472.0Z M694.52,-20.0 L699.28,-20.0 L59.72,472.0 L54.23,472.0Z M706.41,-20.0 L711.16,-20.0 L73.44,472.0 L67.95,472.0Z M718.29,-20.0 L723.04,-20.0 L87.16,472.0 L81.67,472.0Z M730.17,-20.0 L734.92,-20.0 L100.88,472.0 L95.39,472.0Z M742.05,-20.0 L746.80,-20.0 L114.59,472.0 L109.11,472.0Z M753.93,-20.0 L758.68,-20.0 L128.31,472.0 L122.82,472.0Z M765.81,-20.0 L770.56,-20.0 L142.03,472.0 L136.54,472.0Z M777.69,-20.0 L782.44,-20.0 L155.75,472.0 L150.26,472.0Z M789.57,-20.0 L794.32,-20.0 L169.47,472.0 L163.98,472.0Z M801.45,-20.0 L806.20,-20.0 L183.19,472.0 L177.70,472.0Z M813.33,-20.0 L818.08,-20.0 L196.90,472.0 L191.42,472.0Z M825.21,-20.0 L829.96,-20.0 L210.62,472.0 L205.14,472.0Z M837.09,-20.0 L841.84,-20.0 L224.34,472.0 L218.85,472.0Z M848.97,-20.0 L853.72,-20.0 L238.06,472.0 L232.57,472.0Z M860.85,-20.0 L865.60,-20.0 L251.78,472.0 L246.29,472.0Z M872.73,-20.0 L877.48,-20.0 L265.50,472.0 L260.01,472.0Z M884.61,-20.0 L889.36,-20.0 L279.21,472.0 L273.73,472.0Z M896.49,-20.0 L901.24,-20.0 L292.93,472.0 L287.45,472.0Z M908.37,-20.0 L913.12,-20.0 L306.65,472.0 L301.16,472.0Z M920.25,-20.0 L925.00,-20.0 L320.37,472.0 L314.88,472.0Z M932.13,-20.0 L936.88,-20.0 L334.09,472.0 L328.60,472.0Z M944.01,-20.0 L948.76,-20.0 L347.81,472.0 L342.32,472.0Z M955.89,-20.0 L960.64,-20.0 L361.53,472.0 L356.04,472.0Z M967.77,-20.0 L972.52,-20.0 L375.24,472.0 L369.76,472.0Z M979.65,-20.0 L984.41,-20.0 L388.96,472.0 L383.47,472.0Z M991.53,-20.0 L996.29,-20.0 L402.68,472.0 L397.19,472.0Z M1003.41,-20.0 L1008.17,-20.0 L416.40,472.0 L410.91,472.0Z M1015.29,-20.0 L1020.05,-20.0 L430.12,472.0 L424.63,472.0Z M1027.17,-20.0 L1031.93,-20.0 L443.84,472.0 L438.35,472.0Z M1039.05,-20.0 L1043.81,-20.0 L457.55,472.0 L452.07,472.0Z M1050.93,-20.0 L1055.69,-20.0 L471.27,472.0 L465.79,472.0Z M1062.82,-20.0 L1067.57,-20.0 L484.99,472.0 L479.50,472.0Z M1074.70,-20.0 L1079.45,-20.0 L498.71,472.0 L493.22,472.0Z M1086.58,-20.0 L1091.33,-20.0 L512.43,472.0 L506.94,472.0Z M1098.46,-20.0 L1103.21,-20.0 L526.15,472.0 L520.66,472.0Z M1110.34,-20.0 L1115.09,-20.0 L539.86,472.0 L534.38,472.0Z M1122.22,-20.0 L1126.97,-20.0 L553.58,472.0 L548.10,472.0Z M1134.10,-20.0 L1138.85,-20.0 L567.30,472.0 L561.81,472.0Z M1145.98,-20.0 L1150.73,-20.0 L581.02,472.0 L575.53,472.0Z M1157.86,-20.0 L1162.61,-20.0 L594.74,472.0 L589.25,472.0Z M1169.74,-20.0 L1174.49,-20.0 L608.46,472.0 L602.97,472.0Z M1181.62,-20.0 L1186.37,-20.0 L622.18,472.0 L616.69,472.0Z M1193.50,-20.0 L1198.25,-20.0 L635.89,472.0 L630.41,472.0Z M1205.38,-20.0 L1210.13,-20.0 L649.61,472.0 L644.12,472.0Z M1217.26,-20.0 L1222.01,-20.0 L663.33,472.0 L657.84,472.0Z M1229.14,-20.0 L1233.89,-20.0 L677.05,472.0 L671.56,472.0Z M1241.02,-20.0 L1245.77,-20.0 L690.77,472.0 L685.28,472.0Z M1252.90,-20.0 L1257.65,-20.0 L704.49,472.0 L699.00,472.0Z M1264.78,-20.0 L1269.53,-20.0 L718.20,472.0 L712.72,472.0Z M1276.66,-20.0 L1281.41,-20.0 L731.92,472.0 L726.44,472.0Z M1288.54,-20.0 L1293.29,-20.0 L745.64,472.0 L740.15,472.0Z M1300.42,-20.0 L1305.17,-20.0 L759.36,472.0 L753.87,472.0Z M1312.30,-20.0 L1317.05,-20.0 L773.08,472.0 L767.59,472.0Z M1324.18,-20.0 L1328.93,-20.0 L786.80,472.0 L781.31,472.0Z M1336.06,-20.0 L1340.82,-20.0 L800.51,472.0 L795.03,472.0Z M1347.94,-20.0 L1352.70,-20.0 L814.23,472.0 L808.75,472.0Z" fill="#fff034"/><path d="M488.46,-20.0 L489.53,-20.0 L-182.48,472.0 L-183.71,472.0Z M500.34,-20.0 L501.41,-20.0 L-168.76,472.0 L-170.00,472.0Z M512.22,-20.0 L513.29,-20.0 L-155.04,472.0 L-156.28,472.0Z M524.10,-20.0 L525.17,-20.0 L-141.32,472.0 L-142.56,472.0Z M535.98,-20.0 L537.05,-20.0 L-127.61,472.0 L-128.84,472.0Z M547.86,-20.0 L548.93,-20.0 L-113.89,472.0 L-115.12,472.0Z M559.74,-20.0 L560.81,-20.0 L-100.17,472.0 L-101.40,472.0Z M571.62,-20.0 L572.69,-20.0 L-86.45,472.0 L-87.68,472.0Z M583.50,-20.0 L584.57,-20.0 L-72.73,472.0 L-73.97,472.0Z M595.38,-20.0 L596.45,-20.0 L-59.01,472.0 L-60.25,472.0Z M607.26,-20.0 L608.33,-20.0 L-45.29,472.0 L-46.53,472.0Z M619.14,-20.0 L620.21,-20.0 L-31.58,472.0 L-32.81,472.0Z M631.02,-20.0 L632.09,-20.0 L-17.86,472.0 L-19.09,472.0Z M642.90,-20.0 L643.97,-20.0 L-4.14,472.0 L-5.37,472.0Z M654.79,-20.0 L655.85,-20.0 L9.58,472.0 L8.34,472.0Z M666.67,-20.0 L667.73,-20.0 L23.30,472.0 L22.06,472.0Z M678.55,-20.0 L679.61,-20.0 L37.02,472.0 L35.78,472.0Z M690.43,-20.0 L691.50,-20.0 L50.73,472.0 L49.50,472.0Z M702.31,-20.0 L703.38,-20.0 L64.45,472.0 L63.22,472.0Z M714.19,-20.0 L715.26,-20.0 L78.17,472.0 L76.94,472.0Z M726.07,-20.0 L727.14,-20.0 L91.89,472.0 L90.65,472.0Z M737.95,-20.0 L739.02,-20.0 L105.61,472.0 L104.37,472.0Z M749.83,-20.0 L750.90,-20.0 L119.33,472.0 L118.09,472.0Z M761.71,-20.0 L762.78,-20.0 L133.04,472.0 L131.81,472.0Z M773.59,-20.0 L774.66,-20.0 L146.76,472.0 L145.53,472.0Z M785.47,-20.0 L786.54,-20.0 L160.48,472.0 L159.25,472.0Z M797.35,-20.0 L798.42,-20.0 L174.20,472.0 L172.97,472.0Z M809.23,-20.0 L810.30,-20.0 L187.92,472.0 L186.68,472.0Z M821.11,-20.0 L822.18,-20.0 L201.64,472.0 L200.40,472.0Z M832.99,-20.0 L834.06,-20.0 L215.36,472.0 L214.12,472.0Z M844.87,-20.0 L845.94,-20.0 L229.07,472.0 L227.84,472.0Z M856.75,-20.0 L857.82,-20.0 L242.79,472.0 L241.56,472.0Z M868.63,-20.0 L869.70,-20.0 L256.51,472.0 L255.28,472.0Z M880.51,-20.0 L881.58,-20.0 L270.23,472.0 L268.99,472.0Z M892.39,-20.0 L893.46,-20.0 L283.95,472.0 L282.71,472.0Z M904.27,-20.0 L905.34,-20.0 L297.67,472.0 L296.43,472.0Z M916.15,-20.0 L917.22,-20.0 L311.38,472.0 L310.15,472.0Z M928.03,-20.0 L929.10,-20.0 L325.10,472.0 L323.87,472.0Z M939.91,-20.0 L940.98,-20.0 L338.82,472.0 L337.59,472.0Z M951.79,-20.0 L952.86,-20.0 L352.54,472.0 L351.30,472.0Z M963.67,-20.0 L964.74,-20.0 L366.26,472.0 L365.02,472.0Z M975.55,-20.0 L976.62,-20.0 L379.98,472.0 L378.74,472.0Z M987.43,-20.0 L988.50,-20.0 L393.69,472.0 L392.46,472.0Z M999.31,-20.0 L1000.38,-20.0 L407.41,472.0 L406.18,472.0Z M1011.20,-20.0 L1012.26,-20.0 L421.13,472.0 L419.90,472.0Z M1023.08,-20.0 L1024.14,-20.0 L434.85,472.0 L433.62,472.0Z M1034.96,-20.0 L1036.03,-20.0 L448.57,472.0 L447.33,472.0Z M1046.84,-20.0 L1047.91,-20.0 L462.29,472.0 L461.05,472.0Z M1058.72,-20.0 L1059.79,-20.0 L476.01,472.0 L474.77,472.0Z M1070.60,-20.0 L1071.67,-20.0 L489.72,472.0 L488.49,472.0Z M1082.48,-20.0 L1083.55,-20.0 L503.44,472.0 L502.21,472.0Z M1094.36,-20.0 L1095.43,-20.0 L517.16,472.0 L515.93,472.0Z M1106.24,-20.0 L1107.31,-20.0 L530.88,472.0 L529.64,472.0Z M1118.12,-20.0 L1119.19,-20.0 L544.60,472.0 L543.36,472.0Z M1130.00,-20.0 L1131.07,-20.0 L558.32,472.0 L557.08,472.0Z M1141.88,-20.0 L1142.95,-20.0 L572.03,472.0 L570.80,472.0Z M1153.76,-20.0 L1154.83,-20.0 L585.75,472.0 L584.52,472.0Z M1165.64,-20.0 L1166.71,-20.0 L599.47,472.0 L598.24,472.0Z M1177.52,-20.0 L1178.59,-20.0 L613.19,472.0 L611.96,472.0Z M1189.40,-20.0 L1190.47,-20.0 L626.91,472.0 L625.67,472.0Z M1201.28,-20.0 L1202.35,-20.0 L640.63,472.0 L639.39,472.0Z M1213.16,-20.0 L1214.23,-20.0 L654.34,472.0 L653.11,472.0Z M1225.04,-20.0 L1226.11,-20.0 L668.06,472.0 L666.83,472.0Z M1236.92,-20.0 L1237.99,-20.0 L681.78,472.0 L680.55,472.0Z M1248.80,-20.0 L1249.87,-20.0 L695.50,472.0 L694.27,472.0Z M1260.68,-20.0 L1261.75,-20.0 L709.22,472.0 L707.98,472.0Z M1272.56,-20.0 L1273.63,-20.0 L722.94,472.0 L721.70,472.0Z M1284.44,-20.0 L1285.51,-20.0 L736.66,472.0 L735.42,472.0Z M1296.32,-20.0 L1297.39,-20.0 L750.37,472.0 L749.14,472.0Z M1308.20,-20.0 L1309.27,-20.0 L764.09,472.0 L762.86,472.0Z M1320.08,-20.0 L1321.15,-20.0 L777.81,472.0 L776.58,472.0Z M1331.96,-20.0 L1333.03,-20.0 L791.53,472.0 L790.29,472.0Z M1343.84,-20.0 L1344.91,-20.0 L805.25,472.0 L804.01,472.0Z" fill="#9a8614"/></g></g><path d="M480.00,358.00 C483.57,352.10 494.90,334.43 501.40,322.60 C507.90,310.77 512.37,300.27 519.00,287.00 C525.63,273.73 533.80,257.72 541.20,243.00 C548.60,228.28 555.83,212.20 563.40,198.70 C570.97,185.20 580.50,169.78 586.60,162.00 C592.70,154.22 594.43,156.42 600.00,152.00 C605.57,147.58 613.33,140.67 620.00,135.50 C626.67,130.33 632.12,126.25 640.00,121.00 C647.88,115.75 657.30,108.83 667.30,104.00 C677.30,99.17 687.05,92.67 700.00,92.00 C712.95,91.33 732.50,95.17 745.00,100.00 C757.50,104.83 766.83,114.73 775.00,121.00 C783.17,127.27 784.83,128.60 794.00,137.60 C803.17,146.60 824.00,168.77 830.00,175.00" fill="none" stroke="#f6de10" stroke-width="3.2" transform="translate(0 2.6)"/><path d="M480.00,358.00 C483.57,352.10 494.90,334.43 501.40,322.60 C507.90,310.77 512.37,300.27 519.00,287.00 C525.63,273.73 533.80,257.72 541.20,243.00 C548.60,228.28 555.83,212.20 563.40,198.70 C570.97,185.20 580.50,169.78 586.60,162.00 C592.70,154.22 594.43,156.42 600.00,152.00 C605.57,147.58 613.33,140.67 620.00,135.50 C626.67,130.33 632.12,126.25 640.00,121.00 C647.88,115.75 657.30,108.83 667.30,104.00 C677.30,99.17 687.05,92.67 700.00,92.00 C712.95,91.33 732.50,95.17 745.00,100.00 C757.50,104.83 766.83,114.73 775.00,121.00 C783.17,127.27 784.83,128.60 794.00,137.60 C803.17,146.60 824.00,168.77 830.00,175.00" fill="none" stroke="#4a3e00" stroke-width="0.8" stroke-dasharray="12 11" transform="translate(0 4.4)"/><path d="M480.00,358.00 C483.57,352.10 494.90,334.43 501.40,322.60 C507.90,310.77 512.37,300.27 519.00,287.00 C525.63,273.73 533.80,257.72 541.20,243.00 C548.60,228.28 555.83,212.20 563.40,198.70 C570.97,185.20 580.50,169.78 586.60,162.00 C592.70,154.22 594.43,156.42 600.00,152.00 C605.57,147.58 613.33,140.67 620.00,135.50 C626.67,130.33 632.12,126.25 640.00,121.00 C647.88,115.75 657.30,108.83 667.30,104.00 C677.30,99.17 687.05,92.67 700.00,92.00 C712.95,91.33 732.50,95.17 745.00,100.00 C757.50,104.83 766.83,114.73 775.00,121.00 C783.17,127.27 784.83,128.60 794.00,137.60 C803.17,146.60 824.00,168.77 830.00,175.00" fill="none" stroke="#2c2400" stroke-width="1.3"/></g><rect x="660.5" y="123.7" width="82.49999999999991" height="149.5" rx="41.24999999999996" fill="none" stroke="#f2d810" stroke-width="3.0"/><rect x="658.7" y="121.9" width="86.09999999999991" height="153.1" rx="43.049999999999955" fill="none" stroke="#4a3e00" stroke-width="0.8" stroke-dasharray="11.4 11.4"/><rect x="663.2" y="126.4" width="77.09999999999991" height="144.1" rx="38.549999999999955" fill="#4a3e00"/><rect x="664.7" y="127.9" width="74.09999999999991" height="141.1" rx="37.049999999999955" fill="#f8e010"/><rect x="667.3000000000001" y="130.5" width="68.8999999999999" height="135.9" rx="34.44999999999995" fill="none" stroke="#4a3e00" stroke-width="0.7"/><rect x="669.9000000000001" y="133.1" width="63.69999999999991" height="130.7" rx="31.849999999999955" fill="none" stroke="#4a3e00" stroke-width="0.7"/><rect x="672.5" y="135.70000000000002" width="58.49999999999991" height="125.5" rx="29.249999999999954" fill="none" stroke="#4a3e00" stroke-width="0.7"/><clipPath id="slR"><rect x="673.7" y="133.48000000000002" width="56.09999999999991" height="126.51999999999998" rx="28.049999999999955" ry="23.842499999999962"/></clipPath><g clip-path="url(#slR)"><rect x="673.7" y="133.48000000000002" width="56.09999999999991" height="126.51999999999998" fill="url(#wallR)"/><path d="M696.8,167.5 V138.5 A5.0,3.0 0 0 1 706.8,138.5 V167.5" fill="none" stroke="#e8c000" stroke-width="1" opacity="0.3"/><path d="M691.8,167.5 V145.5 A10.0,6.0 0 0 1 711.8,145.5 V167.5" fill="none" stroke="#e8c000" stroke-width="1" opacity="0.3"/><path d="M685.8,167.5 V153.1 A16.0,9.6 0 0 1 717.8,153.1 V167.5" fill="none" stroke="#e8c000" stroke-width="1" opacity="0.3"/><path d="M679.8,167.5 V160.7 A22.0,13.2 0 0 1 723.8,160.7 V167.5" fill="none" stroke="#e8c000" stroke-width="1" opacity="0.3"/><path d="M673.8,167.5 V168.3 A28.0,16.8 0 0 1 729.8,168.3 V167.5" fill="none" stroke="#e8c000" stroke-width="1" opacity="0.3"/><rect x="671.7" y="226" width="60.09999999999991" height="38" fill="#a8a8a8"/><path id="wpR" d="M675,176.8 A26.69999999999999,21 0 0 1 728.4,176.8 V226 A26.69999999999999,3 0 0 1 675,226 Z" fill="url(#gR)"/><line x1="701" y1="155.8" x2="700" y2="264" stroke="#a0a0a0" stroke-width="1"/><line x1="675" y1="226" x2="728.4" y2="226" stroke="#b8b8b8" stroke-width="1"/></g><rect x="497" y="441.5" width="300" height="4.2" fill="#f8e418"/><line x1="497" y1="441.2" x2="797" y2="441.2" stroke="#6a5800" stroke-width="0.8" opacity="0.7"/><rect x="497" y="445.7" width="300" height="1.6" fill="#5a4a00"/><pattern id="hbR" patternUnits="userSpaceOnUse" width="4.2" height="8" patternTransform="skewX(-35)"><rect width="4.2" height="8" fill="#f0d400"/><rect width="1.6" height="8" fill="#5a4a00"/></pattern><rect x="497" y="447.3" width="300" height="5.5" fill="url(#hbR)"/><circle cx="516" cy="433" r="21.5" fill="#4a3e00"/><circle cx="516" cy="433" r="20" fill="#f8e010"/><circle cx="516" cy="433" r="17.6" fill="none" stroke="#4a3e00" stroke-width="0.7"/><circle cx="516" cy="433" r="15.2" fill="none" stroke="#4a3e00" stroke-width="0.7"/><circle cx="516" cy="433" r="15.9" fill="#9c8000"/><circle cx="517" cy="434" r="14.4" fill="url(#gR)"/><line x1="512" y1="418.6" x2="511" y2="447.4" stroke="#a0a0a0" stroke-width="1"/></svg><svg class="r" style="left:497px;top:0" width="300" height="452"><rect x="86.5" y="86.1" width="91.8" height="77.4" fill="none" stroke="#3b46d2" stroke-width="2.5"/></svg><div class="r" style="left:497.00px;top:0.00px;width:1.20px;height:452.00px;background:#2a6aa8;"></div><div class="r" style="left:498.20px;top:0.00px;width:26.10px;height:23.20px;background:#25292d;"></div><div class="r" style="left:498.20px;top:30.40px;width:26.10px;height:131.60px;background:#25292d;"></div><div class="r" style="left:498.20px;top:171.00px;width:26.10px;height:51.30px;background:#25292d;"></div><svg class="r" style="left:502px;top:4px" width="18" height="14"><path d="M1.5 1.3 H5.2 L7 3 H12.3 V5" fill="none" stroke="#bbb" stroke-width="1"/><path d="M1.5 1.3 V12" fill="none" stroke="#bbb" stroke-width="1"/><path d="M4.3 5.6 H16.8 L13.6 12.3 H1.2 Z" fill="#fff"/></svg><svg class="r" style="left:504px;top:37.00px" width="14" height="14"><path d="M2.4,0.6 H11.7 Q10.3,2.4 10.5,5 L13.5,13.2 H0.5 L3.5,5 Q3.7,2.4 2.4,0.6 Z" fill="none" stroke="#4c5156" stroke-width="1.1"/><path d="M0.4,7.4 H6" stroke="#4c5156" stroke-width="1"/><circle cx="6.6" cy="7.4" r="1.5" fill="#4c5156"/></svg><svg class="r" style="left:504px;top:63.50px" width="14" height="14"><path d="M2.4,0.6 H11.7 Q10.3,2.4 10.5,5 L13.5,13.2 H0.5 L3.5,5 Q3.7,2.4 2.4,0.6 Z" fill="none" stroke="#4c5156" stroke-width="1.1"/><path d="M2.6,5.2 H6.4 L6,8 L8.2,13.4 H0.4 L2.8,8 Z" fill="#4c5156"/></svg><svg class="r" style="left:504px;top:90.00px" width="14" height="14"><path d="M3.2,1.4 H10.9 Q9.8,3 10,5.4 L12.6,12.8 H1.4 L4,5.4 Q4.2,3 3.2,1.4 Z" fill="none" stroke="#4c5156" stroke-width="1.1"/><path d="M3.4,3.6 A2.2,2.2 0 1 0 3.4,8.4 M10.6,3.6 A2.2,2.2 0 1 1 10.6,8.4" fill="none" stroke="#4c5156" stroke-width="1"/><circle cx="6.4" cy="7.4" r="1.3" fill="#4c5156"/></svg><svg class="r" style="left:504px;top:116.50px" width="14" height="14"><path d="M7,0.6 H2.4 Q3.7,2.4 3.5,5 L0.5,13.2 H7 Z" fill="none" stroke="#4c5156" stroke-width="1.1"/><path d="M7,0.1 H12.6 Q10.9,2.4 11.1,5 L14,13.7 H7 Z" fill="#4c5156"/></svg><svg class="r" style="left:504px;top:143.00px" width="14" height="14"><path d="M5.8,0.4 H12.8 L11,5 L13.6,9.8 H8 Z" fill="#4c5156"/><path d="M2.6,4.6 H7.8 L6.4,8.6 L9.4,13.6 H0.4 L3.4,8.6 Z" fill="#4c5156" stroke="#25292d" stroke-width="0.8"/></svg><div class="r" style="left:503.80px;top:176.20px;width:14px;height:14px;border:1px solid #62676c;border-radius:50%;box-sizing:border-box;"></div><div class="t" style="left:505.80px;top:177.50px;height:12px;line-height:12px;font-size:7.5px;color:#8a8f94;font-weight:bold;font-style:normal;width:10px;text-align:center;">1</div><div class="r" style="left:514.50px;top:175.70px;width:3.5px;height:3.5px;background:#a08a3a;border-radius:50%;"></div><div class="r" style="left:503.80px;top:203.40px;width:14px;height:14px;border:1px solid #62676c;border-radius:50%;box-sizing:border-box;"></div><div class="t" style="left:505.80px;top:204.70px;height:12px;line-height:12px;font-size:7.5px;color:#8a8f94;font-weight:bold;font-style:normal;width:10px;text-align:center;">2</div><div class="r" style="left:514.50px;top:202.90px;width:3.5px;height:3.5px;background:#a08a3a;border-radius:50%;"></div><div class="r" style="left:778.90px;top:131.90px;width:2.00px;height:51.30px;background:#b9b9b9;"></div><div class="r" style="left:778.90px;top:183.20px;width:2.00px;height:69.40px;background:#7d7d7d;"></div><div class="r" style="left:776.30px;top:179.60px;width:7.2px;height:7.2px;background:#000;border-radius:50%;"></div><div class="r" style="left:776.30px;top:249.00px;width:7.2px;height:7.2px;background:#000;border-radius:50%;"></div><svg class="r" style="left:740.90px;top:176.50px" width="35.10" height="13.30"><path d="M0 0 H28.60 L34.10 6.65 L28.60 13.30 H0 Z" fill="#fff"/></svg><div class="t" style="left:744.40px;top:177.45px;height:12px;line-height:12px;font-size:7.8px;color:#4a5060;font-weight:normal;font-style:normal;width:30px;text-align:center;">45</div><div class="r" style="left:690.00px;top:-2.00px;width:99.70px;height:121.40px;background:#fff;border:1px solid #e6e6e6;box-sizing:border-box;"></div><div class="t" style="left:697.00px;top:-3.50px;height:12px;line-height:12px;font-size:7.3px;color:#444;font-weight:normal;font-style:normal;">Color scheme</div><div class="r" style="left:697.00px;top:10.50px;width:80.80px;height:13.50px;border:1px solid #c6c6c6;box-sizing:border-box;"></div><div class="t" style="left:701.00px;top:11.80px;height:12px;line-height:12px;font-size:7.45px;color:#333;font-weight:normal;font-style:normal;">Material Color</div><svg class="r" style="left:767.00px;top:13.80px" width="7" height="7"><polyline points="1,2.50 3.50,4.75 6.00,2.50" fill="none" stroke="#333" stroke-width="1.1"/></svg><div class="r" style="left:697.00px;top:30.70px;width:13.20px;height:13.40px;border:1px solid #a8a8a8;box-sizing:border-box;background:#fff;"></div><svg class="r" style="left:699.60px;top:33.40px" width="8" height="8"><polyline points="1.6,4.2 3.3,5.8 6.6,2.4" fill="none" stroke="#777" stroke-width="1.1"/></svg><div class="t" style="left:713.80px;top:31.70px;height:12px;line-height:12px;font-size:7.5px;color:#333;font-weight:normal;font-style:normal;">Extruder 1</div><div class="r" style="left:770.30px;top:34.40px;width:6px;height:6px;background:#f7c21a;border-radius:50%;"></div><div class="r" style="left:697.00px;top:44.50px;width:13.20px;height:13.40px;border:1px solid #a8a8a8;box-sizing:border-box;background:#fff;"></div><svg class="r" style="left:699.60px;top:47.20px" width="8" height="8"><polyline points="1.6,4.2 3.3,5.8 6.6,2.4" fill="none" stroke="#777" stroke-width="1.1"/></svg><div class="t" style="left:713.80px;top:45.50px;height:12px;line-height:12px;font-size:7.5px;color:#333;font-weight:normal;font-style:normal;">Extruder 2</div><div class="r" style="left:770.30px;top:48.20px;width:6px;height:6px;background:#f7c21a;border-radius:50%;"></div><div class="r" style="left:697.00px;top:58.30px;width:13.20px;height:13.40px;border:1px solid #a8a8a8;box-sizing:border-box;background:#fff;"></div><div class="t" style="left:713.80px;top:59.30px;height:12px;line-height:12px;font-size:7.5px;color:#333;font-weight:normal;font-style:normal;">Show Travels</div><div class="r" style="left:697.00px;top:72.10px;width:13.20px;height:13.40px;border:1px solid #a8a8a8;box-sizing:border-box;background:#fff;"></div><svg class="r" style="left:699.60px;top:74.80px" width="8" height="8"><polyline points="1.6,4.2 3.3,5.8 6.6,2.4" fill="none" stroke="#777" stroke-width="1.1"/></svg><div class="t" style="left:713.80px;top:73.10px;height:12px;line-height:12px;font-size:7.5px;color:#333;font-weight:normal;font-style:normal;">Show Helpers</div><div class="r" style="left:697.00px;top:85.90px;width:13.20px;height:13.40px;border:1px solid #a8a8a8;box-sizing:border-box;background:#fff;"></div><svg class="r" style="left:699.60px;top:88.60px" width="8" height="8"><polyline points="1.6,4.2 3.3,5.8 6.6,2.4" fill="none" stroke="#777" stroke-width="1.1"/></svg><div class="t" style="left:713.80px;top:86.90px;height:12px;line-height:12px;font-size:7.5px;color:#333;font-weight:normal;font-style:normal;">Show Shell</div><div class="r" style="left:697.00px;top:99.70px;width:13.20px;height:13.40px;border:1px solid #a8a8a8;box-sizing:border-box;background:#fff;"></div><svg class="r" style="left:699.60px;top:102.40px" width="8" height="8"><polyline points="1.6,4.2 3.3,5.8 6.6,2.4" fill="none" stroke="#777" stroke-width="1.1"/></svg><div class="t" style="left:713.80px;top:100.70px;height:12px;line-height:12px;font-size:7.5px;color:#333;font-weight:normal;font-style:normal;">Show Infill</div><div class="r" style="left:796.90px;top:0.00px;width:227.10px;height:452.00px;background:#fff;"></div><div class="r" style="left:913.00px;top:-3.00px;width:105.00px;height:21.70px;border:1px solid #c8c8c8;border-left:none;box-sizing:border-box;background:#fff;"></div><div class="r" style="left:807.50px;top:-3.00px;width:105.50px;height:21.80px;border:2px solid #2ea4dc;box-sizing:border-box;background:#fff;"></div><div class="t" style="left:833.50px;top:3.50px;height:12px;line-height:12px;font-size:8.6px;color:#333;font-weight:normal;font-style:normal;">Extruder</div><div class="r" style="left:869.30px;top:0.7px;width:16.4px;height:16.4px;border:1.3px solid #333;border-radius:50%;box-sizing:border-box;"></div><div class="t" style="left:872.50px;top:3.40px;height:12px;line-height:12px;font-size:7.5px;color:#222;font-weight:normal;font-style:normal;width:10px;text-align:center;"><b>1</b></div><div class="r" style="left:880.10px;top:1.3px;width:6.2px;height:6.2px;background:#fdc50f;border-radius:50%;border:0.9px solid #fff;box-sizing:border-box;"></div><div class="t" style="left:939.00px;top:3.50px;height:12px;line-height:12px;font-size:8.6px;color:#333;font-weight:normal;font-style:normal;">Extruder</div><div class="r" style="left:974.30px;top:0.7px;width:16.4px;height:16.4px;border:1.3px solid #333;border-radius:50%;box-sizing:border-box;"></div><div class="t" style="left:977.50px;top:3.40px;height:12px;line-height:12px;font-size:7.5px;color:#222;font-weight:normal;font-style:normal;width:10px;text-align:center;"><b>2</b></div><div class="r" style="left:985.10px;top:1.3px;width:6.2px;height:6.2px;background:#fdc50f;border-radius:50%;border:0.9px solid #fff;box-sizing:border-box;"></div><div class="t" style="left:807.50px;top:25.50px;height:12px;line-height:12px;font-size:7.6px;color:#3c3c3c;font-weight:normal;font-style:normal;">Material</div><div class="r" style="left:859.00px;top:26.00px;width:159.00px;height:13.00px;border:1px solid #c8c8c8;box-sizing:border-box;"></div><div class="t" style="left:863.00px;top:27.80px;height:12px;line-height:12px;font-size:7.6px;color:#444;font-weight:normal;font-style:normal;">PLA</div><svg class="r" style="left:1005.50px;top:29.00px" width="7" height="7"><polyline points="1,2.50 3.50,4.75 6.00,2.50" fill="none" stroke="#444" stroke-width="1.1"/></svg><div class="t" style="left:807.50px;top:48.50px;height:12px;line-height:12px;font-size:7.6px;color:#3c3c3c;font-weight:normal;font-style:normal;">Print core</div><div class="r" style="left:859.00px;top:49.00px;width:159.00px;height:13.00px;border:1px solid #c8c8c8;box-sizing:border-box;"></div><div class="t" style="left:863.00px;top:50.80px;height:12px;line-height:12px;font-size:7.6px;color:#444;font-weight:normal;font-style:normal;">AA 0.4</div><svg class="r" style="left:1005.50px;top:52.00px" width="7" height="7"><polyline points="1,2.50 3.50,4.75 6.00,2.50" fill="none" stroke="#444" stroke-width="1.1"/></svg><div class="t" style="right:6.00px;top:72.50px;height:12px;line-height:12px;font-size:7.6px;color:#2ea4dc;font-weight:normal;font-style:normal;text-decoration:underline;">Check material compatibility</div><div class="r" style="left:796.00px;top:88.00px;width:228.00px;height:4.00px;background:#f4f4f4;"></div><div class="t" style="left:808.00px;top:102.50px;height:12px;line-height:12px;font-size:8.9px;color:#222;font-weight:bold;font-style:normal;">Print Setup</div><div class="r" style="left:889.50px;top:102.00px;width:64.00px;height:13.00px;border:1px solid #bbb;box-sizing:border-box;"></div><div class="r" style="left:953.00px;top:102.00px;width:64.00px;height:13.00px;border:1.5px solid #2ea4dc;box-sizing:border-box;"></div><div class="t" style="left:889.50px;top:102.80px;height:12px;line-height:12px;font-size:7.6px;color:#333;font-weight:normal;font-style:normal;width:64px;text-align:center;">Recommended</div><div class="t" style="left:953.00px;top:102.80px;height:12px;line-height:12px;font-size:7.6px;color:#333;font-weight:normal;font-style:normal;width:64px;text-align:center;">Custom</div><div class="t" style="left:808.00px;top:126.00px;height:12px;line-height:12px;font-size:7.6px;color:#3c3c3c;font-weight:normal;font-style:normal;">Profile:</div><div class="r" style="left:889.50px;top:124.50px;width:128.50px;height:13.00px;border:1px solid #c8c8c8;box-sizing:border-box;"></div><div class="t" style="left:893.00px;top:126.20px;height:12px;line-height:12px;font-size:7.6px;color:#444;font-weight:normal;font-style:normal;">Fine <span style="color:#c4c4c4">- 0.1mm</span></div><svg class="r" style="left:994.50px;top:126.5px" width="9" height="9"><path d="M4.5 0.5 L5.6 3.3 L8.6 3.4 L6.2 5.3 L7.1 8.3 L4.5 6.5 L1.9 8.3 L2.8 5.3 L0.4 3.4 L3.4 3.3 Z" fill="#555"/></svg><svg class="r" style="left:1004.50px;top:127.50px" width="7" height="7"><polyline points="1,2.50 3.50,4.75 6.00,2.50" fill="none" stroke="#444" stroke-width="1.1"/></svg><div class="r" style="left:807.50px;top:147.50px;width:210.50px;height:13.00px;border:1px solid #c8c8c8;box-sizing:border-box;"></div><div class="t" style="left:810.00px;top:149.50px;height:12px;line-height:12px;font-size:7.6px;color:#444;font-weight:normal;font-style:normal;">Search...</div><div class="r" style="left:0;top:168px;width:1024px;height:272px;overflow:hidden;"><div class="r" style="left:0;top:-168px;width:1024px;height:452px;"><div class="r" style="left:807.50px;top:86.70px;width:210.50px;height:13.50px;background:#f3f3f3;"></div><div class="t" style="left:824.10px;top:88.05px;height:12px;line-height:12px;font-size:7.9px;color:#1d2a55;font-weight:bold;font-style:normal;">Quality</div><div class="r" style="left:811.10px;top:89.25px;width:8.40px;height:1.70px;background:#1d2a55;"></div><div class="r" style="left:811.10px;top:92.45px;width:6.40px;height:1.50px;background:#1d2a55;"></div><div class="r" style="left:811.10px;top:95.55px;width:3.90px;height:1.20px;background:#55607f;"></div><svg class="r" style="left:1004.50px;top:90.25px" width="7" height="7"><polyline points="1,2.50 3.50,4.75 6.00,2.50" fill="none" stroke="#1d2a55" stroke-width="1.2"/></svg><div class="t" style="left:818.00px;top:103.35px;height:12px;line-height:12px;font-size:7.4px;color:#3c3c3c;font-weight:normal;font-style:normal;">Layer Height</div><div class="r" style="left:950.10px;top:101.95px;width:67.90px;height:13.60px;border:1px solid #c8c8c8;box-sizing:border-box;background:#fff;"></div><div class="t" style="left:954.50px;top:103.05px;height:12px;line-height:12px;font-size:7.6px;color:#333;font-weight:normal;font-style:normal;">0.1</div><div class="t" style="right:8.50px;top:103.05px;height:12px;line-height:12px;font-size:7.6px;color:#b4b4b4;font-weight:normal;font-style:normal;">mm</div><svg class="r" style="left:936.20px;top:102.95px" width="10" height="10"><g fill="none" stroke="#8a8a8a" stroke-width="1.2"><ellipse cx="6.3" cy="3.7" rx="2.2" ry="1.5" transform="rotate(-45 6.3 3.7)"/><ellipse cx="3.7" cy="6.3" rx="2.2" ry="1.5" transform="rotate(-45 3.7 6.3)"/></g></svg><div class="t" style="left:818.00px;top:118.35px;height:12px;line-height:12px;font-size:7.4px;color:#3c3c3c;font-weight:normal;font-style:normal;">Initial Layer Height</div><div class="r" style="left:950.10px;top:116.95px;width:67.90px;height:13.60px;border:1px solid #c8c8c8;box-sizing:border-box;background:#fff;"></div><div class="t" style="left:954.50px;top:118.05px;height:12px;line-height:12px;font-size:7.6px;color:#333;font-weight:normal;font-style:normal;">0.27</div><div class="t" style="right:8.50px;top:118.05px;height:12px;line-height:12px;font-size:7.6px;color:#b4b4b4;font-weight:normal;font-style:normal;">mm</div><svg class="r" style="left:936.20px;top:117.95px" width="10" height="10"><g fill="none" stroke="#8a8a8a" stroke-width="1.2"><ellipse cx="6.3" cy="3.7" rx="2.2" ry="1.5" transform="rotate(-45 6.3 3.7)"/><ellipse cx="3.7" cy="6.3" rx="2.2" ry="1.5" transform="rotate(-45 3.7 6.3)"/></g></svg><div class="t" style="left:818.00px;top:133.35px;height:12px;line-height:12px;font-size:7.4px;color:#3c3c3c;font-weight:normal;font-style:normal;">Line Width</div><div class="r" style="left:950.10px;top:131.95px;width:67.90px;height:13.60px;border:1px solid #c8c8c8;box-sizing:border-box;background:#fff;"></div><div class="t" style="left:954.50px;top:133.05px;height:12px;line-height:12px;font-size:7.6px;color:#333;font-weight:normal;font-style:normal;">0.35</div><div class="t" style="right:8.50px;top:133.05px;height:12px;line-height:12px;font-size:7.6px;color:#b4b4b4;font-weight:normal;font-style:normal;">mm</div><div class="t" style="left:827.30px;top:148.35px;height:12px;line-height:12px;font-size:7.4px;color:#3c3c3c;font-weight:normal;font-style:normal;">Wall Line Width</div><div class="r" style="left:950.10px;top:146.95px;width:67.90px;height:13.60px;border:1px solid #c8c8c8;box-sizing:border-box;background:#fff;"></div><div class="t" style="left:954.50px;top:148.05px;height:12px;line-height:12px;font-size:7.6px;color:#333;font-weight:normal;font-style:normal;">0.35</div><div class="t" style="right:8.50px;top:148.05px;height:12px;line-height:12px;font-size:7.6px;color:#b4b4b4;font-weight:normal;font-style:normal;">mm</div><div class="t" style="left:836.70px;top:163.35px;height:12px;line-height:12px;font-size:7.4px;color:#3c3c3c;font-weight:normal;font-style:normal;">Outer Wall Line Width</div><div class="r" style="left:950.10px;top:161.95px;width:67.90px;height:13.60px;border:1px solid #c8c8c8;box-sizing:border-box;background:#fff;"></div><div class="t" style="left:954.50px;top:163.05px;height:12px;line-height:12px;font-size:7.6px;color:#333;font-weight:normal;font-style:normal;">0.35</div><div class="t" style="right:8.50px;top:163.05px;height:12px;line-height:12px;font-size:7.6px;color:#b4b4b4;font-weight:normal;font-style:normal;">mm</div><div class="t" style="left:836.70px;top:178.35px;height:12px;line-height:12px;font-size:7.4px;color:#3c3c3c;font-weight:normal;font-style:normal;">Inner Wall(s) Line Width</div><div class="r" style="left:950.10px;top:176.95px;width:67.90px;height:13.60px;border:1px solid #c8c8c8;box-sizing:border-box;background:#fff;"></div><div class="t" style="left:954.50px;top:178.05px;height:12px;line-height:12px;font-size:7.6px;color:#333;font-weight:normal;font-style:normal;">0.3</div><div class="t" style="right:8.50px;top:178.05px;height:12px;line-height:12px;font-size:7.6px;color:#b4b4b4;font-weight:normal;font-style:normal;">mm</div><div class="t" style="left:827.30px;top:193.35px;height:12px;line-height:12px;font-size:7.4px;color:#3c3c3c;font-weight:normal;font-style:normal;">Top/Bottom Line Width</div><div class="r" style="left:950.10px;top:191.95px;width:67.90px;height:13.60px;border:1px solid #c8c8c8;box-sizing:border-box;background:#fff;"></div><div class="t" style="left:954.50px;top:193.05px;height:12px;line-height:12px;font-size:7.6px;color:#333;font-weight:normal;font-style:normal;">0.35</div><div class="t" style="right:8.50px;top:193.05px;height:12px;line-height:12px;font-size:7.6px;color:#b4b4b4;font-weight:normal;font-style:normal;">mm</div><div class="t" style="left:827.30px;top:208.35px;height:12px;line-height:12px;font-size:7.1px;color:#3c3c3c;font-weight:normal;font-style:italic;">Infill Line Width</div><div class="r" style="left:950.10px;top:206.95px;width:67.90px;height:13.60px;border:1px solid #c8c8c8;box-sizing:border-box;background:#fff;"></div><div class="t" style="left:954.50px;top:208.05px;height:12px;line-height:12px;font-size:7.6px;color:#333;font-weight:normal;font-style:normal;">0.8</div><div class="t" style="right:8.50px;top:208.05px;height:12px;line-height:12px;font-size:7.6px;color:#b4b4b4;font-weight:normal;font-style:normal;">mm</div><svg class="r" style="left:924.50px;top:207.45px" width="10" height="10"><path d="M2.1,3.6 A3.3,3.3 0 1 1 5.3,8.4" fill="none" stroke="#505050" stroke-width="1.25"/><path d="M0.6,2.2 L3.9,2.4 L2.0,5.2 Z" fill="#505050"/></svg><svg class="r" style="left:936.50px;top:207.45px" width="10" height="10"><circle cx="5" cy="5" r="4" fill="#6a6a6a"/><rect x="4.4" y="4.2" width="1.3" height="3.3" fill="#fff"/><rect x="4.4" y="2.4" width="1.3" height="1.2" fill="#fff"/></svg><div class="t" style="left:827.30px;top:223.35px;height:12px;line-height:12px;font-size:7.4px;color:#3c3c3c;font-weight:normal;font-style:normal;">Skirt/Brim Line Width</div><div class="r" style="left:950.10px;top:221.95px;width:67.90px;height:13.60px;border:1px solid #c8c8c8;box-sizing:border-box;background:#fff;"></div><div class="t" style="left:954.50px;top:223.05px;height:12px;line-height:12px;font-size:7.6px;color:#333;font-weight:normal;font-style:normal;">0.35</div><div class="t" style="right:8.50px;top:223.05px;height:12px;line-height:12px;font-size:7.6px;color:#b4b4b4;font-weight:normal;font-style:normal;">mm</div><div class="t" style="left:827.30px;top:238.35px;height:12px;line-height:12px;font-size:7.4px;color:#3c3c3c;font-weight:normal;font-style:normal;">Initial Layer Line Width</div><div class="r" style="left:950.10px;top:236.95px;width:67.90px;height:13.60px;border:1px solid #c8c8c8;box-sizing:border-box;background:#fff;"></div><div class="t" style="left:954.50px;top:238.05px;height:12px;line-height:12px;font-size:7.6px;color:#333;font-weight:normal;font-style:normal;">100.0</div><div class="t" style="right:8.50px;top:238.05px;height:12px;line-height:12px;font-size:7.6px;color:#b4b4b4;font-weight:normal;font-style:normal;">%</div><div class="r" style="left:807.50px;top:251.45px;width:210.50px;height:13.50px;background:#f3f3f3;"></div><div class="t" style="left:824.10px;top:252.80px;height:12px;line-height:12px;font-size:7.9px;color:#1d2a55;font-weight:bold;font-style:normal;">Shell</div><svg class="r" style="left:810.50px;top:253.50px" width="10" height="10"><path d="M1.6 0.8 H8.4 M3.2 0.8 V3.6 L1.2 9.2 H8.8 L6.8 3.6 V0.8" fill="none" stroke="#55607c" stroke-width="1"/></svg><svg class="r" style="left:1004.50px;top:255.00px" width="7" height="7"><polyline points="4.50,1 2.25,3.50 4.50,6.00" fill="none" stroke="#1d2a55" stroke-width="1.2"/></svg><div class="r" style="left:807.50px;top:266.20px;width:210.50px;height:13.50px;background:#f3f3f3;"></div><div class="t" style="left:824.10px;top:267.55px;height:12px;line-height:12px;font-size:7.9px;color:#1d2a55;font-weight:bold;font-style:normal;">Infill</div><svg class="r" style="left:810.00px;top:268.25px" width="11" height="10"><rect x="1" y="0.8" width="8.6" height="8.4" fill="none" stroke="#5a6480" stroke-width="1" stroke-dasharray="1.6 0.8"/><circle cx="5.3" cy="5" r="2.7" fill="none" stroke="#5a6480" stroke-width="0.9" stroke-dasharray="1.2 1"/></svg><svg class="r" style="left:1004.50px;top:269.75px" width="7" height="7"><polyline points="1,2.50 3.50,4.75 6.00,2.50" fill="none" stroke="#1d2a55" stroke-width="1.2"/></svg><div class="t" style="left:818.00px;top:282.85px;height:12px;line-height:12px;font-size:7.4px;color:#3c3c3c;font-weight:normal;font-style:normal;">Infill Extruder</div><div class="r" style="left:950.10px;top:281.45px;width:67.90px;height:13.60px;border:1px solid #c8c8c8;box-sizing:border-box;background:#fff;"></div><div class="t" style="left:954.50px;top:282.55px;height:12px;line-height:12px;font-size:7.6px;color:#333;font-weight:normal;font-style:normal;">Not overrid...</div><div class="r" style="left:998.50px;top:284.25px;width:8px;height:8px;border:1px solid #444;border-radius:50%;box-sizing:border-box;"></div><svg class="r" style="left:1008.00px;top:284.75px" width="7" height="7"><polyline points="1,2.50 3.50,4.75 6.00,2.50" fill="none" stroke="#333" stroke-width="1.2"/></svg><svg class="r" style="left:936.20px;top:282.45px" width="10" height="10"><g fill="none" stroke="#8a8a8a" stroke-width="1.2"><ellipse cx="6.3" cy="3.7" rx="2.2" ry="1.5" transform="rotate(-45 6.3 3.7)"/><ellipse cx="3.7" cy="6.3" rx="2.2" ry="1.5" transform="rotate(-45 3.7 6.3)"/></g></svg><div class="t" style="left:818.00px;top:297.85px;height:12px;line-height:12px;font-size:7.1px;color:#3c3c3c;font-weight:normal;font-style:italic;">Infill Density</div><div class="r" style="left:950.10px;top:296.45px;width:67.90px;height:13.60px;border:1px solid #c8c8c8;box-sizing:border-box;background:#fff;"></div><div class="t" style="left:954.50px;top:297.55px;height:12px;line-height:12px;font-size:7.6px;color:#333;font-weight:normal;font-style:normal;">90</div><div class="t" style="right:8.50px;top:297.55px;height:12px;line-height:12px;font-size:7.6px;color:#b4b4b4;font-weight:normal;font-style:normal;">%</div><svg class="r" style="left:936.00px;top:296.95px" width="10" height="10"><path d="M2.1,3.6 A3.3,3.3 0 1 1 5.3,8.4" fill="none" stroke="#505050" stroke-width="1.25"/><path d="M0.6,2.2 L3.9,2.4 L2.0,5.2 Z" fill="#505050"/></svg><div class="t" style="left:827.30px;top:312.85px;height:12px;line-height:12px;font-size:7.4px;color:#3c3c3c;font-weight:normal;font-style:normal;">Infill Line Distance</div><div class="r" style="left:950.10px;top:311.45px;width:67.90px;height:13.60px;border:1px solid #c8c8c8;box-sizing:border-box;background:#fff;"></div><div class="t" style="left:954.50px;top:312.55px;height:12px;line-height:12px;font-size:7.6px;color:#333;font-weight:normal;font-style:normal;">0.8889</div><div class="t" style="right:8.50px;top:312.55px;height:12px;line-height:12px;font-size:7.6px;color:#b4b4b4;font-weight:normal;font-style:normal;">mm</div><div class="t" style="left:818.00px;top:327.85px;height:12px;line-height:12px;font-size:7.1px;color:#3c3c3c;font-weight:normal;font-style:italic;">Infill Pattern</div><div class="r" style="left:950.10px;top:326.45px;width:67.90px;height:13.60px;border:1px solid #c8c8c8;box-sizing:border-box;background:#fff;"></div><div class="t" style="left:954.50px;top:327.55px;height:12px;line-height:12px;font-size:7.6px;color:#333;font-weight:normal;font-style:normal;">Zig Zag</div><svg class="r" style="left:1008.00px;top:329.75px" width="7" height="7"><polyline points="1,2.50 3.50,4.75 6.00,2.50" fill="none" stroke="#333" stroke-width="1.2"/></svg><svg class="r" style="left:936.00px;top:326.95px" width="10" height="10"><path d="M2.1,3.6 A3.3,3.3 0 1 1 5.3,8.4" fill="none" stroke="#505050" stroke-width="1.25"/><path d="M0.6,2.2 L3.9,2.4 L2.0,5.2 Z" fill="#505050"/></svg><div class="t" style="left:818.00px;top:342.85px;height:12px;line-height:12px;font-size:7.1px;color:#3c3c3c;font-weight:normal;font-style:italic;">Infill Line Directions</div><div class="r" style="left:950.10px;top:341.45px;width:67.90px;height:13.60px;border:1px solid #c8c8c8;box-sizing:border-box;background:#fff;"></div><div class="t" style="left:954.50px;top:342.55px;height:12px;line-height:12px;font-size:7.6px;color:#333;font-weight:normal;font-style:normal;">[45.0,135.0]</div><svg class="r" style="left:936.00px;top:341.95px" width="10" height="10"><path d="M2.1,3.6 A3.3,3.3 0 1 1 5.3,8.4" fill="none" stroke="#505050" stroke-width="1.25"/><path d="M0.6,2.2 L3.9,2.4 L2.0,5.2 Z" fill="#505050"/></svg><div class="t" style="left:818.00px;top:357.85px;height:12px;line-height:12px;font-size:7.4px;color:#3c3c3c;font-weight:normal;font-style:normal;">Infill Overlap Percentage</div><div class="r" style="left:950.10px;top:356.45px;width:67.90px;height:13.60px;border:1px solid #c8c8c8;box-sizing:border-box;background:#fff;"></div><div class="t" style="left:954.50px;top:357.55px;height:12px;line-height:12px;font-size:7.6px;color:#333;font-weight:normal;font-style:normal;">0</div><div class="t" style="right:8.50px;top:357.55px;height:12px;line-height:12px;font-size:7.6px;color:#b4b4b4;font-weight:normal;font-style:normal;">%</div><div class="t" style="left:827.30px;top:372.85px;height:12px;line-height:12px;font-size:7.4px;color:#3c3c3c;font-weight:normal;font-style:normal;">Infill Overlap</div><div class="r" style="left:950.10px;top:371.45px;width:67.90px;height:13.60px;border:1px solid #c8c8c8;box-sizing:border-box;background:#fff;"></div><div class="t" style="left:954.50px;top:372.55px;height:12px;line-height:12px;font-size:7.6px;color:#333;font-weight:normal;font-style:normal;">0.0</div><div class="t" style="right:8.50px;top:372.55px;height:12px;line-height:12px;font-size:7.6px;color:#b4b4b4;font-weight:normal;font-style:normal;">mm</div><div class="t" style="left:818.00px;top:387.85px;height:12px;line-height:12px;font-size:7.4px;color:#3c3c3c;font-weight:normal;font-style:normal;">Skin Overlap Percentage</div><div class="r" style="left:950.10px;top:386.45px;width:67.90px;height:13.60px;border:1px solid #c8c8c8;box-sizing:border-box;background:#fff;"></div><div class="t" style="left:954.50px;top:387.55px;height:12px;line-height:12px;font-size:7.6px;color:#333;font-weight:normal;font-style:normal;">10</div><div class="t" style="right:8.50px;top:387.55px;height:12px;line-height:12px;font-size:7.6px;color:#b4b4b4;font-weight:normal;font-style:normal;">%</div><div class="t" style="left:827.30px;top:402.85px;height:12px;line-height:12px;font-size:7.4px;color:#3c3c3c;font-weight:normal;font-style:normal;">Skin Overlap</div><div class="r" style="left:950.10px;top:401.45px;width:67.90px;height:13.60px;border:1px solid #c8c8c8;box-sizing:border-box;background:#fff;"></div><div class="t" style="left:954.50px;top:402.55px;height:12px;line-height:12px;font-size:7.6px;color:#333;font-weight:normal;font-style:normal;">0.0325</div><div class="t" style="right:8.50px;top:402.55px;height:12px;line-height:12px;font-size:7.6px;color:#b4b4b4;font-weight:normal;font-style:normal;">mm</div><div class="t" style="left:818.00px;top:417.85px;height:12px;line-height:12px;font-size:7.4px;color:#3c3c3c;font-weight:normal;font-style:normal;">Infill Wipe Distance</div><div class="r" style="left:950.10px;top:416.45px;width:67.90px;height:13.60px;border:1px solid #c8c8c8;box-sizing:border-box;background:#fff;"></div><div class="t" style="left:954.50px;top:417.55px;height:12px;line-height:12px;font-size:7.6px;color:#333;font-weight:normal;font-style:normal;">0</div><div class="t" style="right:8.50px;top:417.55px;height:12px;line-height:12px;font-size:7.6px;color:#b4b4b4;font-weight:normal;font-style:normal;">mm</div><div class="t" style="left:818.00px;top:432.85px;height:12px;line-height:12px;font-size:7.4px;color:#3c3c3c;font-weight:normal;font-style:normal;">Infill Layer Thickness</div><div class="r" style="left:950.10px;top:431.45px;width:67.90px;height:13.60px;border:1px solid #c8c8c8;box-sizing:border-box;background:#fff;"></div><div class="t" style="left:954.50px;top:432.55px;height:12px;line-height:12px;font-size:7.6px;color:#333;font-weight:normal;font-style:normal;">0.1</div><div class="t" style="right:8.50px;top:432.55px;height:12px;line-height:12px;font-size:7.6px;color:#b4b4b4;font-weight:normal;font-style:normal;">mm</div></div></div><div class="r" style="left:796.00px;top:440.00px;width:228.00px;height:2.00px;background:#f0f0f0;"></div>
</body></html>
